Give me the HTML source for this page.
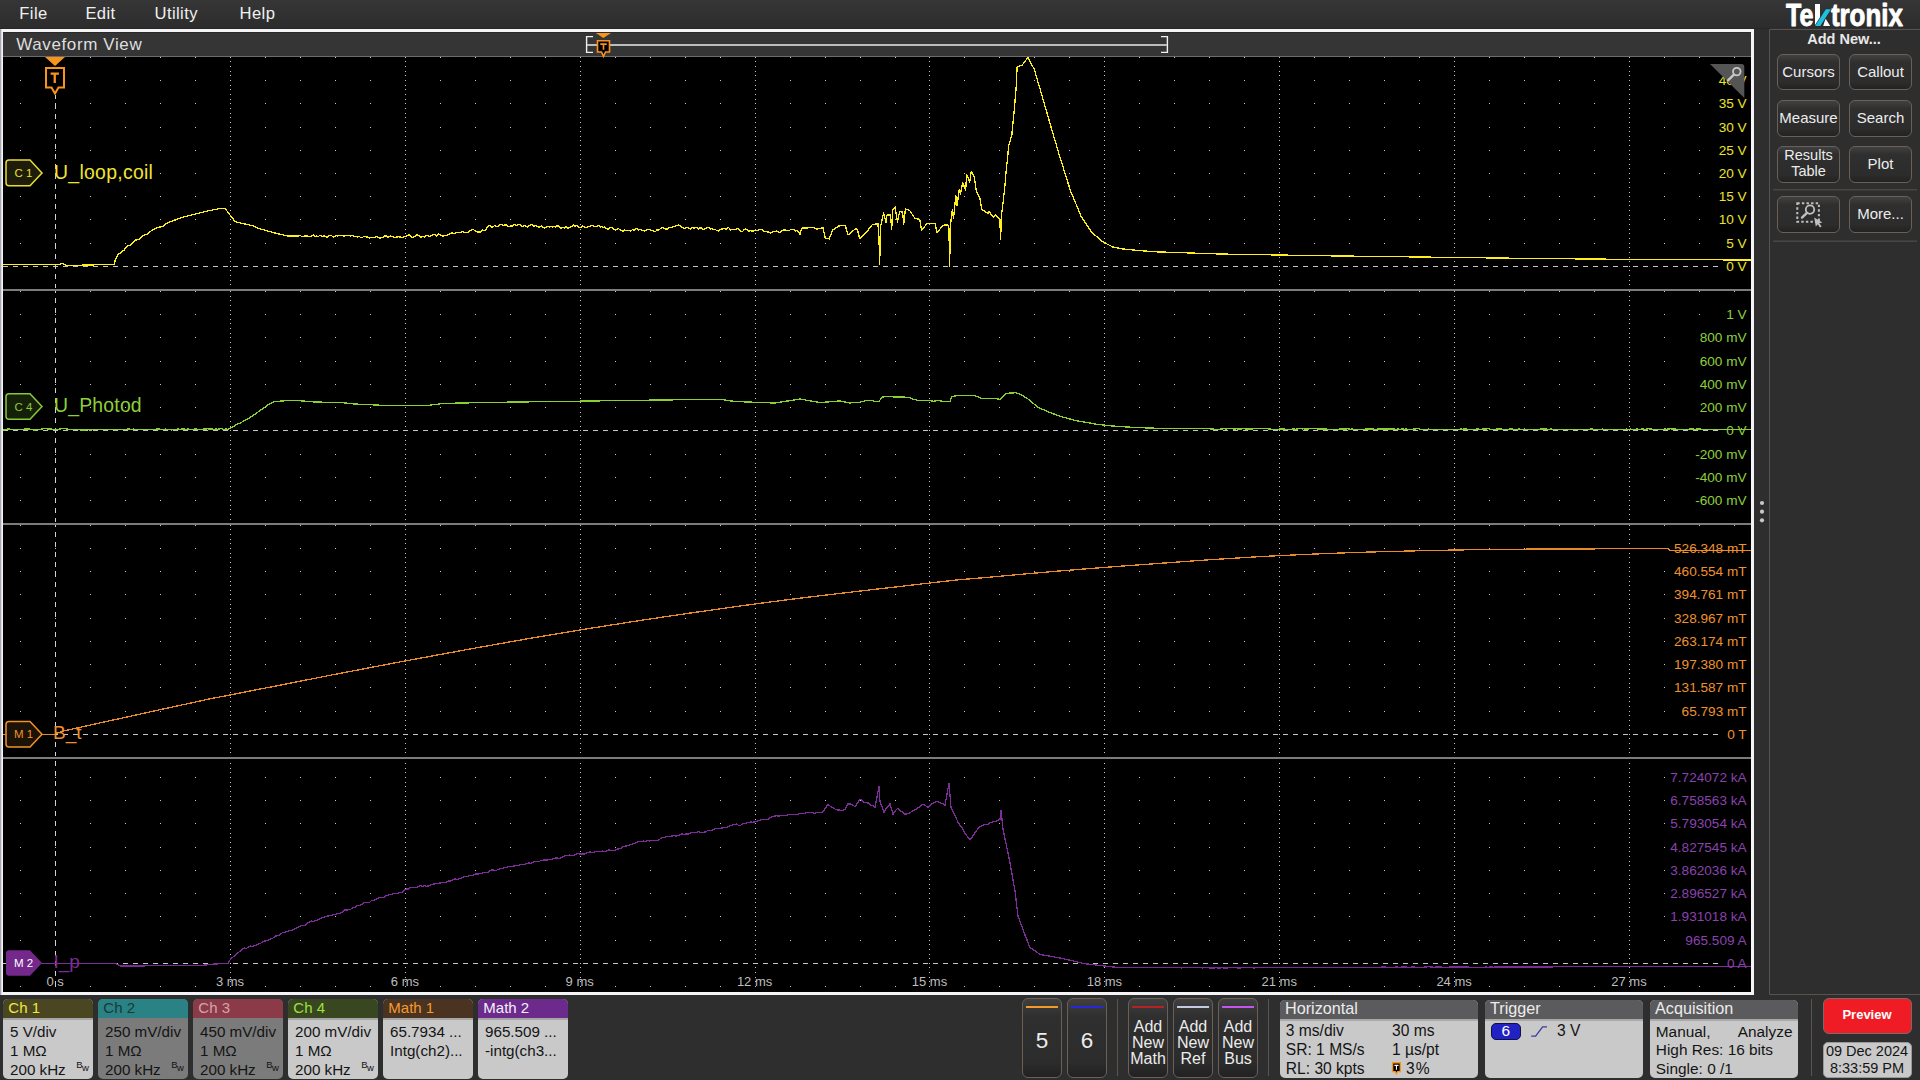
<!DOCTYPE html>
<html><head><meta charset="utf-8"><title>Tektronix</title>
<style>
html,body{margin:0;padding:0;}
body{width:1920px;height:1080px;overflow:hidden;position:relative;background:#2e2e2e;font-family:"Liberation Sans",sans-serif;}
.t{position:absolute;white-space:nowrap;}
.btn{position:absolute;box-sizing:border-box;border:1px solid #6a6058;border-radius:6px;background:linear-gradient(#404040 0%,#2f2f2f 22%,#2c2c2c 80%,#222 100%);}
.box{position:absolute;box-sizing:border-box;border-radius:5px;overflow:hidden;background:#c9c9c9;}
.hd{position:absolute;left:0;top:0;width:100%;height:19px;}
.hl{position:absolute;left:0;top:19px;width:100%;height:2px;background:#a9a9a9;}
</style></head><body>

<div style="position:absolute;left:0px;top:0px;width:1920px;height:28px;background:linear-gradient(#363636,#2c2c2c);"></div>
<div style="position:absolute;left:0px;top:28px;width:1770px;height:1px;background:#262626;"></div>
<div class="t" style="left:19.30px;top:6.49px;font-size:16.6px;line-height:16.6px;color:#f0f0f0;font-weight:normal;letter-spacing:0.4px;">File</div>
<div class="t" style="left:85.40px;top:6.49px;font-size:16.6px;line-height:16.6px;color:#f0f0f0;font-weight:normal;letter-spacing:0.4px;">Edit</div>
<div class="t" style="left:154.50px;top:6.49px;font-size:16.6px;line-height:16.6px;color:#f0f0f0;font-weight:normal;letter-spacing:0.4px;">Utility</div>
<div class="t" style="left:239.60px;top:6.49px;font-size:16.6px;line-height:16.6px;color:#f0f0f0;font-weight:normal;letter-spacing:0.4px;">Help</div>
<div style="position:absolute;left:0px;top:29px;width:1754px;height:966px;background:#f4f4f6;"></div>
<div style="position:absolute;left:0px;top:29px;width:1px;height:966px;background:#a8a8b0;"></div>
<div style="position:absolute;left:1px;top:29px;width:1px;height:966px;background:#dcdce0;"></div>
<div style="position:absolute;left:3px;top:32px;width:1748px;height:24px;background:#353535;"></div>
<div style="position:absolute;left:3px;top:32px;width:1748px;height:1px;background:#2a2a2a;"></div>
<div style="position:absolute;left:3px;top:56px;width:1748px;height:1px;background:#6a6c70;"></div>
<div style="position:absolute;left:3px;top:57px;width:1748px;height:935px;background:#000;"></div>
<div class="t" style="left:16.20px;top:35.55px;font-size:17px;line-height:17px;color:#dedede;font-weight:normal;letter-spacing:0.62px;">Waveform View</div>
<svg style="position:absolute;left:0;top:0" width="1920" height="60"><path d="M593 36.6H586.6V52.4H593" fill="none" stroke="#f0f0f0" stroke-width="1.4"/><path d="M1161 36.6H1167.4V52.4H1161" fill="none" stroke="#f0f0f0" stroke-width="1.4"/><rect x="587" y="44" width="580" height="2" fill="#bcbcbc"/><path d="M595.8 33H611L603.4 38Z" fill="#f7941d"/><path d="M597.5 40.8H609.5V52H605.5L603.5 56.3L601.5 52H597.5Z" fill="#000" stroke="#f7941d" stroke-width="1.6"/><path d="M600.3 43.3H606.7V44.9H604.3V49.8H602.7V44.9H600.3Z" fill="#f7941d"/></svg>
<svg style="position:absolute;left:0;top:0" width="1920" height="1080"><defs><clipPath id="pc"><rect x="3" y="57" width="1748" height="935"/></clipPath></defs><g clip-path="url(#pc)"><path d="M20 57h1v1h-1zM55 57h1v1h-1zM90 57h1v1h-1zM125 57h1v1h-1zM160 57h1v1h-1zM195 57h1v1h-1zM230 57h1v1h-1zM265 57h1v1h-1zM300 57h1v1h-1zM335 57h1v1h-1zM370 57h1v1h-1zM405 57h1v1h-1zM440 57h1v1h-1zM475 57h1v1h-1zM510 57h1v1h-1zM545 57h1v1h-1zM580 57h1v1h-1zM615 57h1v1h-1zM650 57h1v1h-1zM685 57h1v1h-1zM720 57h1v1h-1zM755 57h1v1h-1zM790 57h1v1h-1zM825 57h1v1h-1zM860 57h1v1h-1zM895 57h1v1h-1zM929 57h1v1h-1zM964 57h1v1h-1zM999 57h1v1h-1zM1034 57h1v1h-1zM1069 57h1v1h-1zM1104 57h1v1h-1zM1139 57h1v1h-1zM1174 57h1v1h-1zM1209 57h1v1h-1zM1244 57h1v1h-1zM1279 57h1v1h-1zM1314 57h1v1h-1zM1349 57h1v1h-1zM1384 57h1v1h-1zM1419 57h1v1h-1zM1454 57h1v1h-1zM1489 57h1v1h-1zM1524 57h1v1h-1zM1559 57h1v1h-1zM1594 57h1v1h-1zM1629 57h1v1h-1zM1664 57h1v1h-1zM1699 57h1v1h-1zM1734 57h1v1h-1zM20 80h1v1h-1zM55 80h1v1h-1zM90 80h1v1h-1zM125 80h1v1h-1zM160 80h1v1h-1zM195 80h1v1h-1zM230 80h1v1h-1zM265 80h1v1h-1zM300 80h1v1h-1zM335 80h1v1h-1zM370 80h1v1h-1zM405 80h1v1h-1zM440 80h1v1h-1zM475 80h1v1h-1zM510 80h1v1h-1zM545 80h1v1h-1zM580 80h1v1h-1zM615 80h1v1h-1zM650 80h1v1h-1zM685 80h1v1h-1zM720 80h1v1h-1zM755 80h1v1h-1zM790 80h1v1h-1zM825 80h1v1h-1zM860 80h1v1h-1zM895 80h1v1h-1zM929 80h1v1h-1zM964 80h1v1h-1zM999 80h1v1h-1zM1034 80h1v1h-1zM1069 80h1v1h-1zM1104 80h1v1h-1zM1139 80h1v1h-1zM1174 80h1v1h-1zM1209 80h1v1h-1zM1244 80h1v1h-1zM1279 80h1v1h-1zM1314 80h1v1h-1zM1349 80h1v1h-1zM1384 80h1v1h-1zM1419 80h1v1h-1zM1454 80h1v1h-1zM1489 80h1v1h-1zM1524 80h1v1h-1zM1559 80h1v1h-1zM1594 80h1v1h-1zM1629 80h1v1h-1zM1664 80h1v1h-1zM1699 80h1v1h-1zM1734 80h1v1h-1zM20 103h1v1h-1zM55 103h1v1h-1zM90 103h1v1h-1zM125 103h1v1h-1zM160 103h1v1h-1zM195 103h1v1h-1zM230 103h1v1h-1zM265 103h1v1h-1zM300 103h1v1h-1zM335 103h1v1h-1zM370 103h1v1h-1zM405 103h1v1h-1zM440 103h1v1h-1zM475 103h1v1h-1zM510 103h1v1h-1zM545 103h1v1h-1zM580 103h1v1h-1zM615 103h1v1h-1zM650 103h1v1h-1zM685 103h1v1h-1zM720 103h1v1h-1zM755 103h1v1h-1zM790 103h1v1h-1zM825 103h1v1h-1zM860 103h1v1h-1zM895 103h1v1h-1zM929 103h1v1h-1zM964 103h1v1h-1zM999 103h1v1h-1zM1034 103h1v1h-1zM1069 103h1v1h-1zM1104 103h1v1h-1zM1139 103h1v1h-1zM1174 103h1v1h-1zM1209 103h1v1h-1zM1244 103h1v1h-1zM1279 103h1v1h-1zM1314 103h1v1h-1zM1349 103h1v1h-1zM1384 103h1v1h-1zM1419 103h1v1h-1zM1454 103h1v1h-1zM1489 103h1v1h-1zM1524 103h1v1h-1zM1559 103h1v1h-1zM1594 103h1v1h-1zM1629 103h1v1h-1zM1664 103h1v1h-1zM1699 103h1v1h-1zM1734 103h1v1h-1zM20 127h1v1h-1zM55 127h1v1h-1zM90 127h1v1h-1zM125 127h1v1h-1zM160 127h1v1h-1zM195 127h1v1h-1zM230 127h1v1h-1zM265 127h1v1h-1zM300 127h1v1h-1zM335 127h1v1h-1zM370 127h1v1h-1zM405 127h1v1h-1zM440 127h1v1h-1zM475 127h1v1h-1zM510 127h1v1h-1zM545 127h1v1h-1zM580 127h1v1h-1zM615 127h1v1h-1zM650 127h1v1h-1zM685 127h1v1h-1zM720 127h1v1h-1zM755 127h1v1h-1zM790 127h1v1h-1zM825 127h1v1h-1zM860 127h1v1h-1zM895 127h1v1h-1zM929 127h1v1h-1zM964 127h1v1h-1zM999 127h1v1h-1zM1034 127h1v1h-1zM1069 127h1v1h-1zM1104 127h1v1h-1zM1139 127h1v1h-1zM1174 127h1v1h-1zM1209 127h1v1h-1zM1244 127h1v1h-1zM1279 127h1v1h-1zM1314 127h1v1h-1zM1349 127h1v1h-1zM1384 127h1v1h-1zM1419 127h1v1h-1zM1454 127h1v1h-1zM1489 127h1v1h-1zM1524 127h1v1h-1zM1559 127h1v1h-1zM1594 127h1v1h-1zM1629 127h1v1h-1zM1664 127h1v1h-1zM1699 127h1v1h-1zM1734 127h1v1h-1zM20 150h1v1h-1zM55 150h1v1h-1zM90 150h1v1h-1zM125 150h1v1h-1zM160 150h1v1h-1zM195 150h1v1h-1zM230 150h1v1h-1zM265 150h1v1h-1zM300 150h1v1h-1zM335 150h1v1h-1zM370 150h1v1h-1zM405 150h1v1h-1zM440 150h1v1h-1zM475 150h1v1h-1zM510 150h1v1h-1zM545 150h1v1h-1zM580 150h1v1h-1zM615 150h1v1h-1zM650 150h1v1h-1zM685 150h1v1h-1zM720 150h1v1h-1zM755 150h1v1h-1zM790 150h1v1h-1zM825 150h1v1h-1zM860 150h1v1h-1zM895 150h1v1h-1zM929 150h1v1h-1zM964 150h1v1h-1zM999 150h1v1h-1zM1034 150h1v1h-1zM1069 150h1v1h-1zM1104 150h1v1h-1zM1139 150h1v1h-1zM1174 150h1v1h-1zM1209 150h1v1h-1zM1244 150h1v1h-1zM1279 150h1v1h-1zM1314 150h1v1h-1zM1349 150h1v1h-1zM1384 150h1v1h-1zM1419 150h1v1h-1zM1454 150h1v1h-1zM1489 150h1v1h-1zM1524 150h1v1h-1zM1559 150h1v1h-1zM1594 150h1v1h-1zM1629 150h1v1h-1zM1664 150h1v1h-1zM1699 150h1v1h-1zM1734 150h1v1h-1zM20 173h1v1h-1zM55 173h1v1h-1zM90 173h1v1h-1zM125 173h1v1h-1zM160 173h1v1h-1zM195 173h1v1h-1zM230 173h1v1h-1zM265 173h1v1h-1zM300 173h1v1h-1zM335 173h1v1h-1zM370 173h1v1h-1zM405 173h1v1h-1zM440 173h1v1h-1zM475 173h1v1h-1zM510 173h1v1h-1zM545 173h1v1h-1zM580 173h1v1h-1zM615 173h1v1h-1zM650 173h1v1h-1zM685 173h1v1h-1zM720 173h1v1h-1zM755 173h1v1h-1zM790 173h1v1h-1zM825 173h1v1h-1zM860 173h1v1h-1zM895 173h1v1h-1zM929 173h1v1h-1zM964 173h1v1h-1zM999 173h1v1h-1zM1034 173h1v1h-1zM1069 173h1v1h-1zM1104 173h1v1h-1zM1139 173h1v1h-1zM1174 173h1v1h-1zM1209 173h1v1h-1zM1244 173h1v1h-1zM1279 173h1v1h-1zM1314 173h1v1h-1zM1349 173h1v1h-1zM1384 173h1v1h-1zM1419 173h1v1h-1zM1454 173h1v1h-1zM1489 173h1v1h-1zM1524 173h1v1h-1zM1559 173h1v1h-1zM1594 173h1v1h-1zM1629 173h1v1h-1zM1664 173h1v1h-1zM1699 173h1v1h-1zM1734 173h1v1h-1zM20 196h1v1h-1zM55 196h1v1h-1zM90 196h1v1h-1zM125 196h1v1h-1zM160 196h1v1h-1zM195 196h1v1h-1zM230 196h1v1h-1zM265 196h1v1h-1zM300 196h1v1h-1zM335 196h1v1h-1zM370 196h1v1h-1zM405 196h1v1h-1zM440 196h1v1h-1zM475 196h1v1h-1zM510 196h1v1h-1zM545 196h1v1h-1zM580 196h1v1h-1zM615 196h1v1h-1zM650 196h1v1h-1zM685 196h1v1h-1zM720 196h1v1h-1zM755 196h1v1h-1zM790 196h1v1h-1zM825 196h1v1h-1zM860 196h1v1h-1zM895 196h1v1h-1zM929 196h1v1h-1zM964 196h1v1h-1zM999 196h1v1h-1zM1034 196h1v1h-1zM1069 196h1v1h-1zM1104 196h1v1h-1zM1139 196h1v1h-1zM1174 196h1v1h-1zM1209 196h1v1h-1zM1244 196h1v1h-1zM1279 196h1v1h-1zM1314 196h1v1h-1zM1349 196h1v1h-1zM1384 196h1v1h-1zM1419 196h1v1h-1zM1454 196h1v1h-1zM1489 196h1v1h-1zM1524 196h1v1h-1zM1559 196h1v1h-1zM1594 196h1v1h-1zM1629 196h1v1h-1zM1664 196h1v1h-1zM1699 196h1v1h-1zM1734 196h1v1h-1zM20 219h1v1h-1zM55 219h1v1h-1zM90 219h1v1h-1zM125 219h1v1h-1zM160 219h1v1h-1zM195 219h1v1h-1zM230 219h1v1h-1zM265 219h1v1h-1zM300 219h1v1h-1zM335 219h1v1h-1zM370 219h1v1h-1zM405 219h1v1h-1zM440 219h1v1h-1zM475 219h1v1h-1zM510 219h1v1h-1zM545 219h1v1h-1zM580 219h1v1h-1zM615 219h1v1h-1zM650 219h1v1h-1zM685 219h1v1h-1zM720 219h1v1h-1zM755 219h1v1h-1zM790 219h1v1h-1zM825 219h1v1h-1zM860 219h1v1h-1zM895 219h1v1h-1zM929 219h1v1h-1zM964 219h1v1h-1zM999 219h1v1h-1zM1034 219h1v1h-1zM1069 219h1v1h-1zM1104 219h1v1h-1zM1139 219h1v1h-1zM1174 219h1v1h-1zM1209 219h1v1h-1zM1244 219h1v1h-1zM1279 219h1v1h-1zM1314 219h1v1h-1zM1349 219h1v1h-1zM1384 219h1v1h-1zM1419 219h1v1h-1zM1454 219h1v1h-1zM1489 219h1v1h-1zM1524 219h1v1h-1zM1559 219h1v1h-1zM1594 219h1v1h-1zM1629 219h1v1h-1zM1664 219h1v1h-1zM1699 219h1v1h-1zM1734 219h1v1h-1zM20 243h1v1h-1zM55 243h1v1h-1zM90 243h1v1h-1zM125 243h1v1h-1zM160 243h1v1h-1zM195 243h1v1h-1zM230 243h1v1h-1zM265 243h1v1h-1zM300 243h1v1h-1zM335 243h1v1h-1zM370 243h1v1h-1zM405 243h1v1h-1zM440 243h1v1h-1zM475 243h1v1h-1zM510 243h1v1h-1zM545 243h1v1h-1zM580 243h1v1h-1zM615 243h1v1h-1zM650 243h1v1h-1zM685 243h1v1h-1zM720 243h1v1h-1zM755 243h1v1h-1zM790 243h1v1h-1zM825 243h1v1h-1zM860 243h1v1h-1zM895 243h1v1h-1zM929 243h1v1h-1zM964 243h1v1h-1zM999 243h1v1h-1zM1034 243h1v1h-1zM1069 243h1v1h-1zM1104 243h1v1h-1zM1139 243h1v1h-1zM1174 243h1v1h-1zM1209 243h1v1h-1zM1244 243h1v1h-1zM1279 243h1v1h-1zM1314 243h1v1h-1zM1349 243h1v1h-1zM1384 243h1v1h-1zM1419 243h1v1h-1zM1454 243h1v1h-1zM1489 243h1v1h-1zM1524 243h1v1h-1zM1559 243h1v1h-1zM1594 243h1v1h-1zM1629 243h1v1h-1zM1664 243h1v1h-1zM1699 243h1v1h-1zM1734 243h1v1h-1zM20 291h1v1h-1zM55 291h1v1h-1zM90 291h1v1h-1zM125 291h1v1h-1zM160 291h1v1h-1zM195 291h1v1h-1zM230 291h1v1h-1zM265 291h1v1h-1zM300 291h1v1h-1zM335 291h1v1h-1zM370 291h1v1h-1zM405 291h1v1h-1zM440 291h1v1h-1zM475 291h1v1h-1zM510 291h1v1h-1zM545 291h1v1h-1zM580 291h1v1h-1zM615 291h1v1h-1zM650 291h1v1h-1zM685 291h1v1h-1zM720 291h1v1h-1zM755 291h1v1h-1zM790 291h1v1h-1zM825 291h1v1h-1zM860 291h1v1h-1zM895 291h1v1h-1zM929 291h1v1h-1zM964 291h1v1h-1zM999 291h1v1h-1zM1034 291h1v1h-1zM1069 291h1v1h-1zM1104 291h1v1h-1zM1139 291h1v1h-1zM1174 291h1v1h-1zM1209 291h1v1h-1zM1244 291h1v1h-1zM1279 291h1v1h-1zM1314 291h1v1h-1zM1349 291h1v1h-1zM1384 291h1v1h-1zM1419 291h1v1h-1zM1454 291h1v1h-1zM1489 291h1v1h-1zM1524 291h1v1h-1zM1559 291h1v1h-1zM1594 291h1v1h-1zM1629 291h1v1h-1zM1664 291h1v1h-1zM1699 291h1v1h-1zM1734 291h1v1h-1zM20 314h1v1h-1zM55 314h1v1h-1zM90 314h1v1h-1zM125 314h1v1h-1zM160 314h1v1h-1zM195 314h1v1h-1zM230 314h1v1h-1zM265 314h1v1h-1zM300 314h1v1h-1zM335 314h1v1h-1zM370 314h1v1h-1zM405 314h1v1h-1zM440 314h1v1h-1zM475 314h1v1h-1zM510 314h1v1h-1zM545 314h1v1h-1zM580 314h1v1h-1zM615 314h1v1h-1zM650 314h1v1h-1zM685 314h1v1h-1zM720 314h1v1h-1zM755 314h1v1h-1zM790 314h1v1h-1zM825 314h1v1h-1zM860 314h1v1h-1zM895 314h1v1h-1zM929 314h1v1h-1zM964 314h1v1h-1zM999 314h1v1h-1zM1034 314h1v1h-1zM1069 314h1v1h-1zM1104 314h1v1h-1zM1139 314h1v1h-1zM1174 314h1v1h-1zM1209 314h1v1h-1zM1244 314h1v1h-1zM1279 314h1v1h-1zM1314 314h1v1h-1zM1349 314h1v1h-1zM1384 314h1v1h-1zM1419 314h1v1h-1zM1454 314h1v1h-1zM1489 314h1v1h-1zM1524 314h1v1h-1zM1559 314h1v1h-1zM1594 314h1v1h-1zM1629 314h1v1h-1zM1664 314h1v1h-1zM1699 314h1v1h-1zM1734 314h1v1h-1zM20 337h1v1h-1zM55 337h1v1h-1zM90 337h1v1h-1zM125 337h1v1h-1zM160 337h1v1h-1zM195 337h1v1h-1zM230 337h1v1h-1zM265 337h1v1h-1zM300 337h1v1h-1zM335 337h1v1h-1zM370 337h1v1h-1zM405 337h1v1h-1zM440 337h1v1h-1zM475 337h1v1h-1zM510 337h1v1h-1zM545 337h1v1h-1zM580 337h1v1h-1zM615 337h1v1h-1zM650 337h1v1h-1zM685 337h1v1h-1zM720 337h1v1h-1zM755 337h1v1h-1zM790 337h1v1h-1zM825 337h1v1h-1zM860 337h1v1h-1zM895 337h1v1h-1zM929 337h1v1h-1zM964 337h1v1h-1zM999 337h1v1h-1zM1034 337h1v1h-1zM1069 337h1v1h-1zM1104 337h1v1h-1zM1139 337h1v1h-1zM1174 337h1v1h-1zM1209 337h1v1h-1zM1244 337h1v1h-1zM1279 337h1v1h-1zM1314 337h1v1h-1zM1349 337h1v1h-1zM1384 337h1v1h-1zM1419 337h1v1h-1zM1454 337h1v1h-1zM1489 337h1v1h-1zM1524 337h1v1h-1zM1559 337h1v1h-1zM1594 337h1v1h-1zM1629 337h1v1h-1zM1664 337h1v1h-1zM1699 337h1v1h-1zM1734 337h1v1h-1zM20 361h1v1h-1zM55 361h1v1h-1zM90 361h1v1h-1zM125 361h1v1h-1zM160 361h1v1h-1zM195 361h1v1h-1zM230 361h1v1h-1zM265 361h1v1h-1zM300 361h1v1h-1zM335 361h1v1h-1zM370 361h1v1h-1zM405 361h1v1h-1zM440 361h1v1h-1zM475 361h1v1h-1zM510 361h1v1h-1zM545 361h1v1h-1zM580 361h1v1h-1zM615 361h1v1h-1zM650 361h1v1h-1zM685 361h1v1h-1zM720 361h1v1h-1zM755 361h1v1h-1zM790 361h1v1h-1zM825 361h1v1h-1zM860 361h1v1h-1zM895 361h1v1h-1zM929 361h1v1h-1zM964 361h1v1h-1zM999 361h1v1h-1zM1034 361h1v1h-1zM1069 361h1v1h-1zM1104 361h1v1h-1zM1139 361h1v1h-1zM1174 361h1v1h-1zM1209 361h1v1h-1zM1244 361h1v1h-1zM1279 361h1v1h-1zM1314 361h1v1h-1zM1349 361h1v1h-1zM1384 361h1v1h-1zM1419 361h1v1h-1zM1454 361h1v1h-1zM1489 361h1v1h-1zM1524 361h1v1h-1zM1559 361h1v1h-1zM1594 361h1v1h-1zM1629 361h1v1h-1zM1664 361h1v1h-1zM1699 361h1v1h-1zM1734 361h1v1h-1zM20 384h1v1h-1zM55 384h1v1h-1zM90 384h1v1h-1zM125 384h1v1h-1zM160 384h1v1h-1zM195 384h1v1h-1zM230 384h1v1h-1zM265 384h1v1h-1zM300 384h1v1h-1zM335 384h1v1h-1zM370 384h1v1h-1zM405 384h1v1h-1zM440 384h1v1h-1zM475 384h1v1h-1zM510 384h1v1h-1zM545 384h1v1h-1zM580 384h1v1h-1zM615 384h1v1h-1zM650 384h1v1h-1zM685 384h1v1h-1zM720 384h1v1h-1zM755 384h1v1h-1zM790 384h1v1h-1zM825 384h1v1h-1zM860 384h1v1h-1zM895 384h1v1h-1zM929 384h1v1h-1zM964 384h1v1h-1zM999 384h1v1h-1zM1034 384h1v1h-1zM1069 384h1v1h-1zM1104 384h1v1h-1zM1139 384h1v1h-1zM1174 384h1v1h-1zM1209 384h1v1h-1zM1244 384h1v1h-1zM1279 384h1v1h-1zM1314 384h1v1h-1zM1349 384h1v1h-1zM1384 384h1v1h-1zM1419 384h1v1h-1zM1454 384h1v1h-1zM1489 384h1v1h-1zM1524 384h1v1h-1zM1559 384h1v1h-1zM1594 384h1v1h-1zM1629 384h1v1h-1zM1664 384h1v1h-1zM1699 384h1v1h-1zM1734 384h1v1h-1zM20 407h1v1h-1zM55 407h1v1h-1zM90 407h1v1h-1zM125 407h1v1h-1zM160 407h1v1h-1zM195 407h1v1h-1zM230 407h1v1h-1zM265 407h1v1h-1zM300 407h1v1h-1zM335 407h1v1h-1zM370 407h1v1h-1zM405 407h1v1h-1zM440 407h1v1h-1zM475 407h1v1h-1zM510 407h1v1h-1zM545 407h1v1h-1zM580 407h1v1h-1zM615 407h1v1h-1zM650 407h1v1h-1zM685 407h1v1h-1zM720 407h1v1h-1zM755 407h1v1h-1zM790 407h1v1h-1zM825 407h1v1h-1zM860 407h1v1h-1zM895 407h1v1h-1zM929 407h1v1h-1zM964 407h1v1h-1zM999 407h1v1h-1zM1034 407h1v1h-1zM1069 407h1v1h-1zM1104 407h1v1h-1zM1139 407h1v1h-1zM1174 407h1v1h-1zM1209 407h1v1h-1zM1244 407h1v1h-1zM1279 407h1v1h-1zM1314 407h1v1h-1zM1349 407h1v1h-1zM1384 407h1v1h-1zM1419 407h1v1h-1zM1454 407h1v1h-1zM1489 407h1v1h-1zM1524 407h1v1h-1zM1559 407h1v1h-1zM1594 407h1v1h-1zM1629 407h1v1h-1zM1664 407h1v1h-1zM1699 407h1v1h-1zM1734 407h1v1h-1zM20 454h1v1h-1zM55 454h1v1h-1zM90 454h1v1h-1zM125 454h1v1h-1zM160 454h1v1h-1zM195 454h1v1h-1zM230 454h1v1h-1zM265 454h1v1h-1zM300 454h1v1h-1zM335 454h1v1h-1zM370 454h1v1h-1zM405 454h1v1h-1zM440 454h1v1h-1zM475 454h1v1h-1zM510 454h1v1h-1zM545 454h1v1h-1zM580 454h1v1h-1zM615 454h1v1h-1zM650 454h1v1h-1zM685 454h1v1h-1zM720 454h1v1h-1zM755 454h1v1h-1zM790 454h1v1h-1zM825 454h1v1h-1zM860 454h1v1h-1zM895 454h1v1h-1zM929 454h1v1h-1zM964 454h1v1h-1zM999 454h1v1h-1zM1034 454h1v1h-1zM1069 454h1v1h-1zM1104 454h1v1h-1zM1139 454h1v1h-1zM1174 454h1v1h-1zM1209 454h1v1h-1zM1244 454h1v1h-1zM1279 454h1v1h-1zM1314 454h1v1h-1zM1349 454h1v1h-1zM1384 454h1v1h-1zM1419 454h1v1h-1zM1454 454h1v1h-1zM1489 454h1v1h-1zM1524 454h1v1h-1zM1559 454h1v1h-1zM1594 454h1v1h-1zM1629 454h1v1h-1zM1664 454h1v1h-1zM1699 454h1v1h-1zM1734 454h1v1h-1zM20 477h1v1h-1zM55 477h1v1h-1zM90 477h1v1h-1zM125 477h1v1h-1zM160 477h1v1h-1zM195 477h1v1h-1zM230 477h1v1h-1zM265 477h1v1h-1zM300 477h1v1h-1zM335 477h1v1h-1zM370 477h1v1h-1zM405 477h1v1h-1zM440 477h1v1h-1zM475 477h1v1h-1zM510 477h1v1h-1zM545 477h1v1h-1zM580 477h1v1h-1zM615 477h1v1h-1zM650 477h1v1h-1zM685 477h1v1h-1zM720 477h1v1h-1zM755 477h1v1h-1zM790 477h1v1h-1zM825 477h1v1h-1zM860 477h1v1h-1zM895 477h1v1h-1zM929 477h1v1h-1zM964 477h1v1h-1zM999 477h1v1h-1zM1034 477h1v1h-1zM1069 477h1v1h-1zM1104 477h1v1h-1zM1139 477h1v1h-1zM1174 477h1v1h-1zM1209 477h1v1h-1zM1244 477h1v1h-1zM1279 477h1v1h-1zM1314 477h1v1h-1zM1349 477h1v1h-1zM1384 477h1v1h-1zM1419 477h1v1h-1zM1454 477h1v1h-1zM1489 477h1v1h-1zM1524 477h1v1h-1zM1559 477h1v1h-1zM1594 477h1v1h-1zM1629 477h1v1h-1zM1664 477h1v1h-1zM1699 477h1v1h-1zM1734 477h1v1h-1zM20 500h1v1h-1zM55 500h1v1h-1zM90 500h1v1h-1zM125 500h1v1h-1zM160 500h1v1h-1zM195 500h1v1h-1zM230 500h1v1h-1zM265 500h1v1h-1zM300 500h1v1h-1zM335 500h1v1h-1zM370 500h1v1h-1zM405 500h1v1h-1zM440 500h1v1h-1zM475 500h1v1h-1zM510 500h1v1h-1zM545 500h1v1h-1zM580 500h1v1h-1zM615 500h1v1h-1zM650 500h1v1h-1zM685 500h1v1h-1zM720 500h1v1h-1zM755 500h1v1h-1zM790 500h1v1h-1zM825 500h1v1h-1zM860 500h1v1h-1zM895 500h1v1h-1zM929 500h1v1h-1zM964 500h1v1h-1zM999 500h1v1h-1zM1034 500h1v1h-1zM1069 500h1v1h-1zM1104 500h1v1h-1zM1139 500h1v1h-1zM1174 500h1v1h-1zM1209 500h1v1h-1zM1244 500h1v1h-1zM1279 500h1v1h-1zM1314 500h1v1h-1zM1349 500h1v1h-1zM1384 500h1v1h-1zM1419 500h1v1h-1zM1454 500h1v1h-1zM1489 500h1v1h-1zM1524 500h1v1h-1zM1559 500h1v1h-1zM1594 500h1v1h-1zM1629 500h1v1h-1zM1664 500h1v1h-1zM1699 500h1v1h-1zM1734 500h1v1h-1zM20 525h1v1h-1zM55 525h1v1h-1zM90 525h1v1h-1zM125 525h1v1h-1zM160 525h1v1h-1zM195 525h1v1h-1zM230 525h1v1h-1zM265 525h1v1h-1zM300 525h1v1h-1zM335 525h1v1h-1zM370 525h1v1h-1zM405 525h1v1h-1zM440 525h1v1h-1zM475 525h1v1h-1zM510 525h1v1h-1zM545 525h1v1h-1zM580 525h1v1h-1zM615 525h1v1h-1zM650 525h1v1h-1zM685 525h1v1h-1zM720 525h1v1h-1zM755 525h1v1h-1zM790 525h1v1h-1zM825 525h1v1h-1zM860 525h1v1h-1zM895 525h1v1h-1zM929 525h1v1h-1zM964 525h1v1h-1zM999 525h1v1h-1zM1034 525h1v1h-1zM1069 525h1v1h-1zM1104 525h1v1h-1zM1139 525h1v1h-1zM1174 525h1v1h-1zM1209 525h1v1h-1zM1244 525h1v1h-1zM1279 525h1v1h-1zM1314 525h1v1h-1zM1349 525h1v1h-1zM1384 525h1v1h-1zM1419 525h1v1h-1zM1454 525h1v1h-1zM1489 525h1v1h-1zM1524 525h1v1h-1zM1559 525h1v1h-1zM1594 525h1v1h-1zM1629 525h1v1h-1zM1664 525h1v1h-1zM1699 525h1v1h-1zM1734 525h1v1h-1zM20 548h1v1h-1zM55 548h1v1h-1zM90 548h1v1h-1zM125 548h1v1h-1zM160 548h1v1h-1zM195 548h1v1h-1zM230 548h1v1h-1zM265 548h1v1h-1zM300 548h1v1h-1zM335 548h1v1h-1zM370 548h1v1h-1zM405 548h1v1h-1zM440 548h1v1h-1zM475 548h1v1h-1zM510 548h1v1h-1zM545 548h1v1h-1zM580 548h1v1h-1zM615 548h1v1h-1zM650 548h1v1h-1zM685 548h1v1h-1zM720 548h1v1h-1zM755 548h1v1h-1zM790 548h1v1h-1zM825 548h1v1h-1zM860 548h1v1h-1zM895 548h1v1h-1zM929 548h1v1h-1zM964 548h1v1h-1zM999 548h1v1h-1zM1034 548h1v1h-1zM1069 548h1v1h-1zM1104 548h1v1h-1zM1139 548h1v1h-1zM1174 548h1v1h-1zM1209 548h1v1h-1zM1244 548h1v1h-1zM1279 548h1v1h-1zM1314 548h1v1h-1zM1349 548h1v1h-1zM1384 548h1v1h-1zM1419 548h1v1h-1zM1454 548h1v1h-1zM1489 548h1v1h-1zM1524 548h1v1h-1zM1559 548h1v1h-1zM1594 548h1v1h-1zM1629 548h1v1h-1zM1664 548h1v1h-1zM1699 548h1v1h-1zM1734 548h1v1h-1zM20 571h1v1h-1zM55 571h1v1h-1zM90 571h1v1h-1zM125 571h1v1h-1zM160 571h1v1h-1zM195 571h1v1h-1zM230 571h1v1h-1zM265 571h1v1h-1zM300 571h1v1h-1zM335 571h1v1h-1zM370 571h1v1h-1zM405 571h1v1h-1zM440 571h1v1h-1zM475 571h1v1h-1zM510 571h1v1h-1zM545 571h1v1h-1zM580 571h1v1h-1zM615 571h1v1h-1zM650 571h1v1h-1zM685 571h1v1h-1zM720 571h1v1h-1zM755 571h1v1h-1zM790 571h1v1h-1zM825 571h1v1h-1zM860 571h1v1h-1zM895 571h1v1h-1zM929 571h1v1h-1zM964 571h1v1h-1zM999 571h1v1h-1zM1034 571h1v1h-1zM1069 571h1v1h-1zM1104 571h1v1h-1zM1139 571h1v1h-1zM1174 571h1v1h-1zM1209 571h1v1h-1zM1244 571h1v1h-1zM1279 571h1v1h-1zM1314 571h1v1h-1zM1349 571h1v1h-1zM1384 571h1v1h-1zM1419 571h1v1h-1zM1454 571h1v1h-1zM1489 571h1v1h-1zM1524 571h1v1h-1zM1559 571h1v1h-1zM1594 571h1v1h-1zM1629 571h1v1h-1zM1664 571h1v1h-1zM1699 571h1v1h-1zM1734 571h1v1h-1zM20 594h1v1h-1zM55 594h1v1h-1zM90 594h1v1h-1zM125 594h1v1h-1zM160 594h1v1h-1zM195 594h1v1h-1zM230 594h1v1h-1zM265 594h1v1h-1zM300 594h1v1h-1zM335 594h1v1h-1zM370 594h1v1h-1zM405 594h1v1h-1zM440 594h1v1h-1zM475 594h1v1h-1zM510 594h1v1h-1zM545 594h1v1h-1zM580 594h1v1h-1zM615 594h1v1h-1zM650 594h1v1h-1zM685 594h1v1h-1zM720 594h1v1h-1zM755 594h1v1h-1zM790 594h1v1h-1zM825 594h1v1h-1zM860 594h1v1h-1zM895 594h1v1h-1zM929 594h1v1h-1zM964 594h1v1h-1zM999 594h1v1h-1zM1034 594h1v1h-1zM1069 594h1v1h-1zM1104 594h1v1h-1zM1139 594h1v1h-1zM1174 594h1v1h-1zM1209 594h1v1h-1zM1244 594h1v1h-1zM1279 594h1v1h-1zM1314 594h1v1h-1zM1349 594h1v1h-1zM1384 594h1v1h-1zM1419 594h1v1h-1zM1454 594h1v1h-1zM1489 594h1v1h-1zM1524 594h1v1h-1zM1559 594h1v1h-1zM1594 594h1v1h-1zM1629 594h1v1h-1zM1664 594h1v1h-1zM1699 594h1v1h-1zM1734 594h1v1h-1zM20 618h1v1h-1zM55 618h1v1h-1zM90 618h1v1h-1zM125 618h1v1h-1zM160 618h1v1h-1zM195 618h1v1h-1zM230 618h1v1h-1zM265 618h1v1h-1zM300 618h1v1h-1zM335 618h1v1h-1zM370 618h1v1h-1zM405 618h1v1h-1zM440 618h1v1h-1zM475 618h1v1h-1zM510 618h1v1h-1zM545 618h1v1h-1zM580 618h1v1h-1zM615 618h1v1h-1zM650 618h1v1h-1zM685 618h1v1h-1zM720 618h1v1h-1zM755 618h1v1h-1zM790 618h1v1h-1zM825 618h1v1h-1zM860 618h1v1h-1zM895 618h1v1h-1zM929 618h1v1h-1zM964 618h1v1h-1zM999 618h1v1h-1zM1034 618h1v1h-1zM1069 618h1v1h-1zM1104 618h1v1h-1zM1139 618h1v1h-1zM1174 618h1v1h-1zM1209 618h1v1h-1zM1244 618h1v1h-1zM1279 618h1v1h-1zM1314 618h1v1h-1zM1349 618h1v1h-1zM1384 618h1v1h-1zM1419 618h1v1h-1zM1454 618h1v1h-1zM1489 618h1v1h-1zM1524 618h1v1h-1zM1559 618h1v1h-1zM1594 618h1v1h-1zM1629 618h1v1h-1zM1664 618h1v1h-1zM1699 618h1v1h-1zM1734 618h1v1h-1zM20 641h1v1h-1zM55 641h1v1h-1zM90 641h1v1h-1zM125 641h1v1h-1zM160 641h1v1h-1zM195 641h1v1h-1zM230 641h1v1h-1zM265 641h1v1h-1zM300 641h1v1h-1zM335 641h1v1h-1zM370 641h1v1h-1zM405 641h1v1h-1zM440 641h1v1h-1zM475 641h1v1h-1zM510 641h1v1h-1zM545 641h1v1h-1zM580 641h1v1h-1zM615 641h1v1h-1zM650 641h1v1h-1zM685 641h1v1h-1zM720 641h1v1h-1zM755 641h1v1h-1zM790 641h1v1h-1zM825 641h1v1h-1zM860 641h1v1h-1zM895 641h1v1h-1zM929 641h1v1h-1zM964 641h1v1h-1zM999 641h1v1h-1zM1034 641h1v1h-1zM1069 641h1v1h-1zM1104 641h1v1h-1zM1139 641h1v1h-1zM1174 641h1v1h-1zM1209 641h1v1h-1zM1244 641h1v1h-1zM1279 641h1v1h-1zM1314 641h1v1h-1zM1349 641h1v1h-1zM1384 641h1v1h-1zM1419 641h1v1h-1zM1454 641h1v1h-1zM1489 641h1v1h-1zM1524 641h1v1h-1zM1559 641h1v1h-1zM1594 641h1v1h-1zM1629 641h1v1h-1zM1664 641h1v1h-1zM1699 641h1v1h-1zM1734 641h1v1h-1zM20 664h1v1h-1zM55 664h1v1h-1zM90 664h1v1h-1zM125 664h1v1h-1zM160 664h1v1h-1zM195 664h1v1h-1zM230 664h1v1h-1zM265 664h1v1h-1zM300 664h1v1h-1zM335 664h1v1h-1zM370 664h1v1h-1zM405 664h1v1h-1zM440 664h1v1h-1zM475 664h1v1h-1zM510 664h1v1h-1zM545 664h1v1h-1zM580 664h1v1h-1zM615 664h1v1h-1zM650 664h1v1h-1zM685 664h1v1h-1zM720 664h1v1h-1zM755 664h1v1h-1zM790 664h1v1h-1zM825 664h1v1h-1zM860 664h1v1h-1zM895 664h1v1h-1zM929 664h1v1h-1zM964 664h1v1h-1zM999 664h1v1h-1zM1034 664h1v1h-1zM1069 664h1v1h-1zM1104 664h1v1h-1zM1139 664h1v1h-1zM1174 664h1v1h-1zM1209 664h1v1h-1zM1244 664h1v1h-1zM1279 664h1v1h-1zM1314 664h1v1h-1zM1349 664h1v1h-1zM1384 664h1v1h-1zM1419 664h1v1h-1zM1454 664h1v1h-1zM1489 664h1v1h-1zM1524 664h1v1h-1zM1559 664h1v1h-1zM1594 664h1v1h-1zM1629 664h1v1h-1zM1664 664h1v1h-1zM1699 664h1v1h-1zM1734 664h1v1h-1zM20 687h1v1h-1zM55 687h1v1h-1zM90 687h1v1h-1zM125 687h1v1h-1zM160 687h1v1h-1zM195 687h1v1h-1zM230 687h1v1h-1zM265 687h1v1h-1zM300 687h1v1h-1zM335 687h1v1h-1zM370 687h1v1h-1zM405 687h1v1h-1zM440 687h1v1h-1zM475 687h1v1h-1zM510 687h1v1h-1zM545 687h1v1h-1zM580 687h1v1h-1zM615 687h1v1h-1zM650 687h1v1h-1zM685 687h1v1h-1zM720 687h1v1h-1zM755 687h1v1h-1zM790 687h1v1h-1zM825 687h1v1h-1zM860 687h1v1h-1zM895 687h1v1h-1zM929 687h1v1h-1zM964 687h1v1h-1zM999 687h1v1h-1zM1034 687h1v1h-1zM1069 687h1v1h-1zM1104 687h1v1h-1zM1139 687h1v1h-1zM1174 687h1v1h-1zM1209 687h1v1h-1zM1244 687h1v1h-1zM1279 687h1v1h-1zM1314 687h1v1h-1zM1349 687h1v1h-1zM1384 687h1v1h-1zM1419 687h1v1h-1zM1454 687h1v1h-1zM1489 687h1v1h-1zM1524 687h1v1h-1zM1559 687h1v1h-1zM1594 687h1v1h-1zM1629 687h1v1h-1zM1664 687h1v1h-1zM1699 687h1v1h-1zM1734 687h1v1h-1zM20 711h1v1h-1zM55 711h1v1h-1zM90 711h1v1h-1zM125 711h1v1h-1zM160 711h1v1h-1zM195 711h1v1h-1zM230 711h1v1h-1zM265 711h1v1h-1zM300 711h1v1h-1zM335 711h1v1h-1zM370 711h1v1h-1zM405 711h1v1h-1zM440 711h1v1h-1zM475 711h1v1h-1zM510 711h1v1h-1zM545 711h1v1h-1zM580 711h1v1h-1zM615 711h1v1h-1zM650 711h1v1h-1zM685 711h1v1h-1zM720 711h1v1h-1zM755 711h1v1h-1zM790 711h1v1h-1zM825 711h1v1h-1zM860 711h1v1h-1zM895 711h1v1h-1zM929 711h1v1h-1zM964 711h1v1h-1zM999 711h1v1h-1zM1034 711h1v1h-1zM1069 711h1v1h-1zM1104 711h1v1h-1zM1139 711h1v1h-1zM1174 711h1v1h-1zM1209 711h1v1h-1zM1244 711h1v1h-1zM1279 711h1v1h-1zM1314 711h1v1h-1zM1349 711h1v1h-1zM1384 711h1v1h-1zM1419 711h1v1h-1zM1454 711h1v1h-1zM1489 711h1v1h-1zM1524 711h1v1h-1zM1559 711h1v1h-1zM1594 711h1v1h-1zM1629 711h1v1h-1zM1664 711h1v1h-1zM1699 711h1v1h-1zM1734 711h1v1h-1zM20 777h1v1h-1zM55 777h1v1h-1zM90 777h1v1h-1zM125 777h1v1h-1zM160 777h1v1h-1zM195 777h1v1h-1zM230 777h1v1h-1zM265 777h1v1h-1zM300 777h1v1h-1zM335 777h1v1h-1zM370 777h1v1h-1zM405 777h1v1h-1zM440 777h1v1h-1zM475 777h1v1h-1zM510 777h1v1h-1zM545 777h1v1h-1zM580 777h1v1h-1zM615 777h1v1h-1zM650 777h1v1h-1zM685 777h1v1h-1zM720 777h1v1h-1zM755 777h1v1h-1zM790 777h1v1h-1zM825 777h1v1h-1zM860 777h1v1h-1zM895 777h1v1h-1zM929 777h1v1h-1zM964 777h1v1h-1zM999 777h1v1h-1zM1034 777h1v1h-1zM1069 777h1v1h-1zM1104 777h1v1h-1zM1139 777h1v1h-1zM1174 777h1v1h-1zM1209 777h1v1h-1zM1244 777h1v1h-1zM1279 777h1v1h-1zM1314 777h1v1h-1zM1349 777h1v1h-1zM1384 777h1v1h-1zM1419 777h1v1h-1zM1454 777h1v1h-1zM1489 777h1v1h-1zM1524 777h1v1h-1zM1559 777h1v1h-1zM1594 777h1v1h-1zM1629 777h1v1h-1zM1664 777h1v1h-1zM1699 777h1v1h-1zM1734 777h1v1h-1zM20 800h1v1h-1zM55 800h1v1h-1zM90 800h1v1h-1zM125 800h1v1h-1zM160 800h1v1h-1zM195 800h1v1h-1zM230 800h1v1h-1zM265 800h1v1h-1zM300 800h1v1h-1zM335 800h1v1h-1zM370 800h1v1h-1zM405 800h1v1h-1zM440 800h1v1h-1zM475 800h1v1h-1zM510 800h1v1h-1zM545 800h1v1h-1zM580 800h1v1h-1zM615 800h1v1h-1zM650 800h1v1h-1zM685 800h1v1h-1zM720 800h1v1h-1zM755 800h1v1h-1zM790 800h1v1h-1zM825 800h1v1h-1zM860 800h1v1h-1zM895 800h1v1h-1zM929 800h1v1h-1zM964 800h1v1h-1zM999 800h1v1h-1zM1034 800h1v1h-1zM1069 800h1v1h-1zM1104 800h1v1h-1zM1139 800h1v1h-1zM1174 800h1v1h-1zM1209 800h1v1h-1zM1244 800h1v1h-1zM1279 800h1v1h-1zM1314 800h1v1h-1zM1349 800h1v1h-1zM1384 800h1v1h-1zM1419 800h1v1h-1zM1454 800h1v1h-1zM1489 800h1v1h-1zM1524 800h1v1h-1zM1559 800h1v1h-1zM1594 800h1v1h-1zM1629 800h1v1h-1zM1664 800h1v1h-1zM1699 800h1v1h-1zM1734 800h1v1h-1zM20 823h1v1h-1zM55 823h1v1h-1zM90 823h1v1h-1zM125 823h1v1h-1zM160 823h1v1h-1zM195 823h1v1h-1zM230 823h1v1h-1zM265 823h1v1h-1zM300 823h1v1h-1zM335 823h1v1h-1zM370 823h1v1h-1zM405 823h1v1h-1zM440 823h1v1h-1zM475 823h1v1h-1zM510 823h1v1h-1zM545 823h1v1h-1zM580 823h1v1h-1zM615 823h1v1h-1zM650 823h1v1h-1zM685 823h1v1h-1zM720 823h1v1h-1zM755 823h1v1h-1zM790 823h1v1h-1zM825 823h1v1h-1zM860 823h1v1h-1zM895 823h1v1h-1zM929 823h1v1h-1zM964 823h1v1h-1zM999 823h1v1h-1zM1034 823h1v1h-1zM1069 823h1v1h-1zM1104 823h1v1h-1zM1139 823h1v1h-1zM1174 823h1v1h-1zM1209 823h1v1h-1zM1244 823h1v1h-1zM1279 823h1v1h-1zM1314 823h1v1h-1zM1349 823h1v1h-1zM1384 823h1v1h-1zM1419 823h1v1h-1zM1454 823h1v1h-1zM1489 823h1v1h-1zM1524 823h1v1h-1zM1559 823h1v1h-1zM1594 823h1v1h-1zM1629 823h1v1h-1zM1664 823h1v1h-1zM1699 823h1v1h-1zM1734 823h1v1h-1zM20 847h1v1h-1zM55 847h1v1h-1zM90 847h1v1h-1zM125 847h1v1h-1zM160 847h1v1h-1zM195 847h1v1h-1zM230 847h1v1h-1zM265 847h1v1h-1zM300 847h1v1h-1zM335 847h1v1h-1zM370 847h1v1h-1zM405 847h1v1h-1zM440 847h1v1h-1zM475 847h1v1h-1zM510 847h1v1h-1zM545 847h1v1h-1zM580 847h1v1h-1zM615 847h1v1h-1zM650 847h1v1h-1zM685 847h1v1h-1zM720 847h1v1h-1zM755 847h1v1h-1zM790 847h1v1h-1zM825 847h1v1h-1zM860 847h1v1h-1zM895 847h1v1h-1zM929 847h1v1h-1zM964 847h1v1h-1zM999 847h1v1h-1zM1034 847h1v1h-1zM1069 847h1v1h-1zM1104 847h1v1h-1zM1139 847h1v1h-1zM1174 847h1v1h-1zM1209 847h1v1h-1zM1244 847h1v1h-1zM1279 847h1v1h-1zM1314 847h1v1h-1zM1349 847h1v1h-1zM1384 847h1v1h-1zM1419 847h1v1h-1zM1454 847h1v1h-1zM1489 847h1v1h-1zM1524 847h1v1h-1zM1559 847h1v1h-1zM1594 847h1v1h-1zM1629 847h1v1h-1zM1664 847h1v1h-1zM1699 847h1v1h-1zM1734 847h1v1h-1zM20 870h1v1h-1zM55 870h1v1h-1zM90 870h1v1h-1zM125 870h1v1h-1zM160 870h1v1h-1zM195 870h1v1h-1zM230 870h1v1h-1zM265 870h1v1h-1zM300 870h1v1h-1zM335 870h1v1h-1zM370 870h1v1h-1zM405 870h1v1h-1zM440 870h1v1h-1zM475 870h1v1h-1zM510 870h1v1h-1zM545 870h1v1h-1zM580 870h1v1h-1zM615 870h1v1h-1zM650 870h1v1h-1zM685 870h1v1h-1zM720 870h1v1h-1zM755 870h1v1h-1zM790 870h1v1h-1zM825 870h1v1h-1zM860 870h1v1h-1zM895 870h1v1h-1zM929 870h1v1h-1zM964 870h1v1h-1zM999 870h1v1h-1zM1034 870h1v1h-1zM1069 870h1v1h-1zM1104 870h1v1h-1zM1139 870h1v1h-1zM1174 870h1v1h-1zM1209 870h1v1h-1zM1244 870h1v1h-1zM1279 870h1v1h-1zM1314 870h1v1h-1zM1349 870h1v1h-1zM1384 870h1v1h-1zM1419 870h1v1h-1zM1454 870h1v1h-1zM1489 870h1v1h-1zM1524 870h1v1h-1zM1559 870h1v1h-1zM1594 870h1v1h-1zM1629 870h1v1h-1zM1664 870h1v1h-1zM1699 870h1v1h-1zM1734 870h1v1h-1zM20 893h1v1h-1zM55 893h1v1h-1zM90 893h1v1h-1zM125 893h1v1h-1zM160 893h1v1h-1zM195 893h1v1h-1zM230 893h1v1h-1zM265 893h1v1h-1zM300 893h1v1h-1zM335 893h1v1h-1zM370 893h1v1h-1zM405 893h1v1h-1zM440 893h1v1h-1zM475 893h1v1h-1zM510 893h1v1h-1zM545 893h1v1h-1zM580 893h1v1h-1zM615 893h1v1h-1zM650 893h1v1h-1zM685 893h1v1h-1zM720 893h1v1h-1zM755 893h1v1h-1zM790 893h1v1h-1zM825 893h1v1h-1zM860 893h1v1h-1zM895 893h1v1h-1zM929 893h1v1h-1zM964 893h1v1h-1zM999 893h1v1h-1zM1034 893h1v1h-1zM1069 893h1v1h-1zM1104 893h1v1h-1zM1139 893h1v1h-1zM1174 893h1v1h-1zM1209 893h1v1h-1zM1244 893h1v1h-1zM1279 893h1v1h-1zM1314 893h1v1h-1zM1349 893h1v1h-1zM1384 893h1v1h-1zM1419 893h1v1h-1zM1454 893h1v1h-1zM1489 893h1v1h-1zM1524 893h1v1h-1zM1559 893h1v1h-1zM1594 893h1v1h-1zM1629 893h1v1h-1zM1664 893h1v1h-1zM1699 893h1v1h-1zM1734 893h1v1h-1zM20 916h1v1h-1zM55 916h1v1h-1zM90 916h1v1h-1zM125 916h1v1h-1zM160 916h1v1h-1zM195 916h1v1h-1zM230 916h1v1h-1zM265 916h1v1h-1zM300 916h1v1h-1zM335 916h1v1h-1zM370 916h1v1h-1zM405 916h1v1h-1zM440 916h1v1h-1zM475 916h1v1h-1zM510 916h1v1h-1zM545 916h1v1h-1zM580 916h1v1h-1zM615 916h1v1h-1zM650 916h1v1h-1zM685 916h1v1h-1zM720 916h1v1h-1zM755 916h1v1h-1zM790 916h1v1h-1zM825 916h1v1h-1zM860 916h1v1h-1zM895 916h1v1h-1zM929 916h1v1h-1zM964 916h1v1h-1zM999 916h1v1h-1zM1034 916h1v1h-1zM1069 916h1v1h-1zM1104 916h1v1h-1zM1139 916h1v1h-1zM1174 916h1v1h-1zM1209 916h1v1h-1zM1244 916h1v1h-1zM1279 916h1v1h-1zM1314 916h1v1h-1zM1349 916h1v1h-1zM1384 916h1v1h-1zM1419 916h1v1h-1zM1454 916h1v1h-1zM1489 916h1v1h-1zM1524 916h1v1h-1zM1559 916h1v1h-1zM1594 916h1v1h-1zM1629 916h1v1h-1zM1664 916h1v1h-1zM1699 916h1v1h-1zM1734 916h1v1h-1zM20 940h1v1h-1zM55 940h1v1h-1zM90 940h1v1h-1zM125 940h1v1h-1zM160 940h1v1h-1zM195 940h1v1h-1zM230 940h1v1h-1zM265 940h1v1h-1zM300 940h1v1h-1zM335 940h1v1h-1zM370 940h1v1h-1zM405 940h1v1h-1zM440 940h1v1h-1zM475 940h1v1h-1zM510 940h1v1h-1zM545 940h1v1h-1zM580 940h1v1h-1zM615 940h1v1h-1zM650 940h1v1h-1zM685 940h1v1h-1zM720 940h1v1h-1zM755 940h1v1h-1zM790 940h1v1h-1zM825 940h1v1h-1zM860 940h1v1h-1zM895 940h1v1h-1zM929 940h1v1h-1zM964 940h1v1h-1zM999 940h1v1h-1zM1034 940h1v1h-1zM1069 940h1v1h-1zM1104 940h1v1h-1zM1139 940h1v1h-1zM1174 940h1v1h-1zM1209 940h1v1h-1zM1244 940h1v1h-1zM1279 940h1v1h-1zM1314 940h1v1h-1zM1349 940h1v1h-1zM1384 940h1v1h-1zM1419 940h1v1h-1zM1454 940h1v1h-1zM1489 940h1v1h-1zM1524 940h1v1h-1zM1559 940h1v1h-1zM1594 940h1v1h-1zM1629 940h1v1h-1zM1664 940h1v1h-1zM1699 940h1v1h-1zM1734 940h1v1h-1zM20 986h1v1h-1zM55 986h1v1h-1zM90 986h1v1h-1zM125 986h1v1h-1zM160 986h1v1h-1zM195 986h1v1h-1zM230 986h1v1h-1zM265 986h1v1h-1zM300 986h1v1h-1zM335 986h1v1h-1zM370 986h1v1h-1zM405 986h1v1h-1zM440 986h1v1h-1zM475 986h1v1h-1zM510 986h1v1h-1zM545 986h1v1h-1zM580 986h1v1h-1zM615 986h1v1h-1zM650 986h1v1h-1zM685 986h1v1h-1zM720 986h1v1h-1zM755 986h1v1h-1zM790 986h1v1h-1zM825 986h1v1h-1zM860 986h1v1h-1zM895 986h1v1h-1zM929 986h1v1h-1zM964 986h1v1h-1zM999 986h1v1h-1zM1034 986h1v1h-1zM1069 986h1v1h-1zM1104 986h1v1h-1zM1139 986h1v1h-1zM1174 986h1v1h-1zM1209 986h1v1h-1zM1244 986h1v1h-1zM1279 986h1v1h-1zM1314 986h1v1h-1zM1349 986h1v1h-1zM1384 986h1v1h-1zM1419 986h1v1h-1zM1454 986h1v1h-1zM1489 986h1v1h-1zM1524 986h1v1h-1zM1559 986h1v1h-1zM1594 986h1v1h-1zM1629 986h1v1h-1zM1664 986h1v1h-1zM1699 986h1v1h-1zM1734 986h1v1h-1z" fill="#c8c8c8" shape-rendering="crispEdges"/><path d="M230 57h1v1h-1zM230 61h1v1h-1zM230 66h1v1h-1zM230 71h1v1h-1zM230 75h1v1h-1zM230 80h1v1h-1zM230 85h1v1h-1zM230 89h1v1h-1zM230 94h1v1h-1zM230 99h1v1h-1zM230 103h1v1h-1zM230 108h1v1h-1zM230 113h1v1h-1zM230 117h1v1h-1zM230 122h1v1h-1zM230 127h1v1h-1zM230 131h1v1h-1zM230 136h1v1h-1zM230 140h1v1h-1zM230 145h1v1h-1zM230 150h1v1h-1zM230 154h1v1h-1zM230 159h1v1h-1zM230 164h1v1h-1zM230 168h1v1h-1zM230 173h1v1h-1zM230 178h1v1h-1zM230 182h1v1h-1zM230 187h1v1h-1zM230 192h1v1h-1zM230 196h1v1h-1zM230 201h1v1h-1zM230 205h1v1h-1zM230 210h1v1h-1zM230 215h1v1h-1zM230 219h1v1h-1zM230 224h1v1h-1zM230 229h1v1h-1zM230 233h1v1h-1zM230 238h1v1h-1zM230 243h1v1h-1zM230 247h1v1h-1zM230 252h1v1h-1zM230 257h1v1h-1zM230 261h1v1h-1zM230 266h1v1h-1zM230 270h1v1h-1zM230 275h1v1h-1zM230 280h1v1h-1zM230 284h1v1h-1zM230 291h1v1h-1zM230 296h1v1h-1zM230 300h1v1h-1zM230 305h1v1h-1zM230 310h1v1h-1zM230 314h1v1h-1zM230 319h1v1h-1zM230 323h1v1h-1zM230 328h1v1h-1zM230 333h1v1h-1zM230 337h1v1h-1zM230 342h1v1h-1zM230 347h1v1h-1zM230 351h1v1h-1zM230 356h1v1h-1zM230 361h1v1h-1zM230 365h1v1h-1zM230 370h1v1h-1zM230 375h1v1h-1zM230 379h1v1h-1zM230 384h1v1h-1zM230 388h1v1h-1zM230 393h1v1h-1zM230 398h1v1h-1zM230 402h1v1h-1zM230 407h1v1h-1zM230 412h1v1h-1zM230 416h1v1h-1zM230 421h1v1h-1zM230 426h1v1h-1zM230 430h1v1h-1zM230 435h1v1h-1zM230 440h1v1h-1zM230 444h1v1h-1zM230 449h1v1h-1zM230 454h1v1h-1zM230 458h1v1h-1zM230 463h1v1h-1zM230 467h1v1h-1zM230 472h1v1h-1zM230 477h1v1h-1zM230 481h1v1h-1zM230 486h1v1h-1zM230 491h1v1h-1zM230 495h1v1h-1zM230 500h1v1h-1zM230 505h1v1h-1zM230 509h1v1h-1zM230 514h1v1h-1zM230 519h1v1h-1zM230 525h1v1h-1zM230 529h1v1h-1zM230 534h1v1h-1zM230 539h1v1h-1zM230 543h1v1h-1zM230 548h1v1h-1zM230 553h1v1h-1zM230 557h1v1h-1zM230 562h1v1h-1zM230 567h1v1h-1zM230 571h1v1h-1zM230 576h1v1h-1zM230 581h1v1h-1zM230 585h1v1h-1zM230 590h1v1h-1zM230 594h1v1h-1zM230 599h1v1h-1zM230 604h1v1h-1zM230 608h1v1h-1zM230 613h1v1h-1zM230 618h1v1h-1zM230 622h1v1h-1zM230 627h1v1h-1zM230 632h1v1h-1zM230 636h1v1h-1zM230 641h1v1h-1zM230 646h1v1h-1zM230 650h1v1h-1zM230 655h1v1h-1zM230 659h1v1h-1zM230 664h1v1h-1zM230 669h1v1h-1zM230 673h1v1h-1zM230 678h1v1h-1zM230 683h1v1h-1zM230 687h1v1h-1zM230 692h1v1h-1zM230 697h1v1h-1zM230 701h1v1h-1zM230 706h1v1h-1zM230 711h1v1h-1zM230 715h1v1h-1zM230 720h1v1h-1zM230 725h1v1h-1zM230 729h1v1h-1zM230 734h1v1h-1zM230 738h1v1h-1zM230 743h1v1h-1zM230 748h1v1h-1zM230 752h1v1h-1zM230 763h1v1h-1zM230 768h1v1h-1zM230 772h1v1h-1zM230 777h1v1h-1zM230 782h1v1h-1zM230 786h1v1h-1zM230 791h1v1h-1zM230 796h1v1h-1zM230 800h1v1h-1zM230 805h1v1h-1zM230 810h1v1h-1zM230 814h1v1h-1zM230 819h1v1h-1zM230 823h1v1h-1zM230 828h1v1h-1zM230 833h1v1h-1zM230 837h1v1h-1zM230 842h1v1h-1zM230 847h1v1h-1zM230 851h1v1h-1zM230 856h1v1h-1zM230 861h1v1h-1zM230 865h1v1h-1zM230 870h1v1h-1zM230 875h1v1h-1zM230 879h1v1h-1zM230 884h1v1h-1zM230 888h1v1h-1zM230 893h1v1h-1zM230 898h1v1h-1zM230 902h1v1h-1zM230 907h1v1h-1zM230 912h1v1h-1zM230 916h1v1h-1zM230 921h1v1h-1zM230 926h1v1h-1zM230 930h1v1h-1zM230 935h1v1h-1zM230 940h1v1h-1zM230 944h1v1h-1zM230 949h1v1h-1zM230 954h1v1h-1zM230 958h1v1h-1zM230 963h1v1h-1zM230 967h1v1h-1zM230 972h1v1h-1zM230 977h1v1h-1zM230 981h1v1h-1zM230 986h1v1h-1zM405 57h1v1h-1zM405 61h1v1h-1zM405 66h1v1h-1zM405 71h1v1h-1zM405 75h1v1h-1zM405 80h1v1h-1zM405 85h1v1h-1zM405 89h1v1h-1zM405 94h1v1h-1zM405 99h1v1h-1zM405 103h1v1h-1zM405 108h1v1h-1zM405 113h1v1h-1zM405 117h1v1h-1zM405 122h1v1h-1zM405 127h1v1h-1zM405 131h1v1h-1zM405 136h1v1h-1zM405 140h1v1h-1zM405 145h1v1h-1zM405 150h1v1h-1zM405 154h1v1h-1zM405 159h1v1h-1zM405 164h1v1h-1zM405 168h1v1h-1zM405 173h1v1h-1zM405 178h1v1h-1zM405 182h1v1h-1zM405 187h1v1h-1zM405 192h1v1h-1zM405 196h1v1h-1zM405 201h1v1h-1zM405 205h1v1h-1zM405 210h1v1h-1zM405 215h1v1h-1zM405 219h1v1h-1zM405 224h1v1h-1zM405 229h1v1h-1zM405 233h1v1h-1zM405 238h1v1h-1zM405 243h1v1h-1zM405 247h1v1h-1zM405 252h1v1h-1zM405 257h1v1h-1zM405 261h1v1h-1zM405 266h1v1h-1zM405 270h1v1h-1zM405 275h1v1h-1zM405 280h1v1h-1zM405 284h1v1h-1zM405 291h1v1h-1zM405 296h1v1h-1zM405 300h1v1h-1zM405 305h1v1h-1zM405 310h1v1h-1zM405 314h1v1h-1zM405 319h1v1h-1zM405 323h1v1h-1zM405 328h1v1h-1zM405 333h1v1h-1zM405 337h1v1h-1zM405 342h1v1h-1zM405 347h1v1h-1zM405 351h1v1h-1zM405 356h1v1h-1zM405 361h1v1h-1zM405 365h1v1h-1zM405 370h1v1h-1zM405 375h1v1h-1zM405 379h1v1h-1zM405 384h1v1h-1zM405 388h1v1h-1zM405 393h1v1h-1zM405 398h1v1h-1zM405 402h1v1h-1zM405 407h1v1h-1zM405 412h1v1h-1zM405 416h1v1h-1zM405 421h1v1h-1zM405 426h1v1h-1zM405 430h1v1h-1zM405 435h1v1h-1zM405 440h1v1h-1zM405 444h1v1h-1zM405 449h1v1h-1zM405 454h1v1h-1zM405 458h1v1h-1zM405 463h1v1h-1zM405 467h1v1h-1zM405 472h1v1h-1zM405 477h1v1h-1zM405 481h1v1h-1zM405 486h1v1h-1zM405 491h1v1h-1zM405 495h1v1h-1zM405 500h1v1h-1zM405 505h1v1h-1zM405 509h1v1h-1zM405 514h1v1h-1zM405 519h1v1h-1zM405 525h1v1h-1zM405 529h1v1h-1zM405 534h1v1h-1zM405 539h1v1h-1zM405 543h1v1h-1zM405 548h1v1h-1zM405 553h1v1h-1zM405 557h1v1h-1zM405 562h1v1h-1zM405 567h1v1h-1zM405 571h1v1h-1zM405 576h1v1h-1zM405 581h1v1h-1zM405 585h1v1h-1zM405 590h1v1h-1zM405 594h1v1h-1zM405 599h1v1h-1zM405 604h1v1h-1zM405 608h1v1h-1zM405 613h1v1h-1zM405 618h1v1h-1zM405 622h1v1h-1zM405 627h1v1h-1zM405 632h1v1h-1zM405 636h1v1h-1zM405 641h1v1h-1zM405 646h1v1h-1zM405 650h1v1h-1zM405 655h1v1h-1zM405 659h1v1h-1zM405 664h1v1h-1zM405 669h1v1h-1zM405 673h1v1h-1zM405 678h1v1h-1zM405 683h1v1h-1zM405 687h1v1h-1zM405 692h1v1h-1zM405 697h1v1h-1zM405 701h1v1h-1zM405 706h1v1h-1zM405 711h1v1h-1zM405 715h1v1h-1zM405 720h1v1h-1zM405 725h1v1h-1zM405 729h1v1h-1zM405 734h1v1h-1zM405 738h1v1h-1zM405 743h1v1h-1zM405 748h1v1h-1zM405 752h1v1h-1zM405 763h1v1h-1zM405 768h1v1h-1zM405 772h1v1h-1zM405 777h1v1h-1zM405 782h1v1h-1zM405 786h1v1h-1zM405 791h1v1h-1zM405 796h1v1h-1zM405 800h1v1h-1zM405 805h1v1h-1zM405 810h1v1h-1zM405 814h1v1h-1zM405 819h1v1h-1zM405 823h1v1h-1zM405 828h1v1h-1zM405 833h1v1h-1zM405 837h1v1h-1zM405 842h1v1h-1zM405 847h1v1h-1zM405 851h1v1h-1zM405 856h1v1h-1zM405 861h1v1h-1zM405 865h1v1h-1zM405 870h1v1h-1zM405 875h1v1h-1zM405 879h1v1h-1zM405 884h1v1h-1zM405 888h1v1h-1zM405 893h1v1h-1zM405 898h1v1h-1zM405 902h1v1h-1zM405 907h1v1h-1zM405 912h1v1h-1zM405 916h1v1h-1zM405 921h1v1h-1zM405 926h1v1h-1zM405 930h1v1h-1zM405 935h1v1h-1zM405 940h1v1h-1zM405 944h1v1h-1zM405 949h1v1h-1zM405 954h1v1h-1zM405 958h1v1h-1zM405 963h1v1h-1zM405 967h1v1h-1zM405 972h1v1h-1zM405 977h1v1h-1zM405 981h1v1h-1zM405 986h1v1h-1zM580 57h1v1h-1zM580 61h1v1h-1zM580 66h1v1h-1zM580 71h1v1h-1zM580 75h1v1h-1zM580 80h1v1h-1zM580 85h1v1h-1zM580 89h1v1h-1zM580 94h1v1h-1zM580 99h1v1h-1zM580 103h1v1h-1zM580 108h1v1h-1zM580 113h1v1h-1zM580 117h1v1h-1zM580 122h1v1h-1zM580 127h1v1h-1zM580 131h1v1h-1zM580 136h1v1h-1zM580 140h1v1h-1zM580 145h1v1h-1zM580 150h1v1h-1zM580 154h1v1h-1zM580 159h1v1h-1zM580 164h1v1h-1zM580 168h1v1h-1zM580 173h1v1h-1zM580 178h1v1h-1zM580 182h1v1h-1zM580 187h1v1h-1zM580 192h1v1h-1zM580 196h1v1h-1zM580 201h1v1h-1zM580 205h1v1h-1zM580 210h1v1h-1zM580 215h1v1h-1zM580 219h1v1h-1zM580 224h1v1h-1zM580 229h1v1h-1zM580 233h1v1h-1zM580 238h1v1h-1zM580 243h1v1h-1zM580 247h1v1h-1zM580 252h1v1h-1zM580 257h1v1h-1zM580 261h1v1h-1zM580 266h1v1h-1zM580 270h1v1h-1zM580 275h1v1h-1zM580 280h1v1h-1zM580 284h1v1h-1zM580 291h1v1h-1zM580 296h1v1h-1zM580 300h1v1h-1zM580 305h1v1h-1zM580 310h1v1h-1zM580 314h1v1h-1zM580 319h1v1h-1zM580 323h1v1h-1zM580 328h1v1h-1zM580 333h1v1h-1zM580 337h1v1h-1zM580 342h1v1h-1zM580 347h1v1h-1zM580 351h1v1h-1zM580 356h1v1h-1zM580 361h1v1h-1zM580 365h1v1h-1zM580 370h1v1h-1zM580 375h1v1h-1zM580 379h1v1h-1zM580 384h1v1h-1zM580 388h1v1h-1zM580 393h1v1h-1zM580 398h1v1h-1zM580 402h1v1h-1zM580 407h1v1h-1zM580 412h1v1h-1zM580 416h1v1h-1zM580 421h1v1h-1zM580 426h1v1h-1zM580 430h1v1h-1zM580 435h1v1h-1zM580 440h1v1h-1zM580 444h1v1h-1zM580 449h1v1h-1zM580 454h1v1h-1zM580 458h1v1h-1zM580 463h1v1h-1zM580 467h1v1h-1zM580 472h1v1h-1zM580 477h1v1h-1zM580 481h1v1h-1zM580 486h1v1h-1zM580 491h1v1h-1zM580 495h1v1h-1zM580 500h1v1h-1zM580 505h1v1h-1zM580 509h1v1h-1zM580 514h1v1h-1zM580 519h1v1h-1zM580 525h1v1h-1zM580 529h1v1h-1zM580 534h1v1h-1zM580 539h1v1h-1zM580 543h1v1h-1zM580 548h1v1h-1zM580 553h1v1h-1zM580 557h1v1h-1zM580 562h1v1h-1zM580 567h1v1h-1zM580 571h1v1h-1zM580 576h1v1h-1zM580 581h1v1h-1zM580 585h1v1h-1zM580 590h1v1h-1zM580 594h1v1h-1zM580 599h1v1h-1zM580 604h1v1h-1zM580 608h1v1h-1zM580 613h1v1h-1zM580 618h1v1h-1zM580 622h1v1h-1zM580 627h1v1h-1zM580 632h1v1h-1zM580 636h1v1h-1zM580 641h1v1h-1zM580 646h1v1h-1zM580 650h1v1h-1zM580 655h1v1h-1zM580 659h1v1h-1zM580 664h1v1h-1zM580 669h1v1h-1zM580 673h1v1h-1zM580 678h1v1h-1zM580 683h1v1h-1zM580 687h1v1h-1zM580 692h1v1h-1zM580 697h1v1h-1zM580 701h1v1h-1zM580 706h1v1h-1zM580 711h1v1h-1zM580 715h1v1h-1zM580 720h1v1h-1zM580 725h1v1h-1zM580 729h1v1h-1zM580 734h1v1h-1zM580 738h1v1h-1zM580 743h1v1h-1zM580 748h1v1h-1zM580 752h1v1h-1zM580 763h1v1h-1zM580 768h1v1h-1zM580 772h1v1h-1zM580 777h1v1h-1zM580 782h1v1h-1zM580 786h1v1h-1zM580 791h1v1h-1zM580 796h1v1h-1zM580 800h1v1h-1zM580 805h1v1h-1zM580 810h1v1h-1zM580 814h1v1h-1zM580 819h1v1h-1zM580 823h1v1h-1zM580 828h1v1h-1zM580 833h1v1h-1zM580 837h1v1h-1zM580 842h1v1h-1zM580 847h1v1h-1zM580 851h1v1h-1zM580 856h1v1h-1zM580 861h1v1h-1zM580 865h1v1h-1zM580 870h1v1h-1zM580 875h1v1h-1zM580 879h1v1h-1zM580 884h1v1h-1zM580 888h1v1h-1zM580 893h1v1h-1zM580 898h1v1h-1zM580 902h1v1h-1zM580 907h1v1h-1zM580 912h1v1h-1zM580 916h1v1h-1zM580 921h1v1h-1zM580 926h1v1h-1zM580 930h1v1h-1zM580 935h1v1h-1zM580 940h1v1h-1zM580 944h1v1h-1zM580 949h1v1h-1zM580 954h1v1h-1zM580 958h1v1h-1zM580 963h1v1h-1zM580 967h1v1h-1zM580 972h1v1h-1zM580 977h1v1h-1zM580 981h1v1h-1zM580 986h1v1h-1zM755 57h1v1h-1zM755 61h1v1h-1zM755 66h1v1h-1zM755 71h1v1h-1zM755 75h1v1h-1zM755 80h1v1h-1zM755 85h1v1h-1zM755 89h1v1h-1zM755 94h1v1h-1zM755 99h1v1h-1zM755 103h1v1h-1zM755 108h1v1h-1zM755 113h1v1h-1zM755 117h1v1h-1zM755 122h1v1h-1zM755 127h1v1h-1zM755 131h1v1h-1zM755 136h1v1h-1zM755 140h1v1h-1zM755 145h1v1h-1zM755 150h1v1h-1zM755 154h1v1h-1zM755 159h1v1h-1zM755 164h1v1h-1zM755 168h1v1h-1zM755 173h1v1h-1zM755 178h1v1h-1zM755 182h1v1h-1zM755 187h1v1h-1zM755 192h1v1h-1zM755 196h1v1h-1zM755 201h1v1h-1zM755 205h1v1h-1zM755 210h1v1h-1zM755 215h1v1h-1zM755 219h1v1h-1zM755 224h1v1h-1zM755 229h1v1h-1zM755 233h1v1h-1zM755 238h1v1h-1zM755 243h1v1h-1zM755 247h1v1h-1zM755 252h1v1h-1zM755 257h1v1h-1zM755 261h1v1h-1zM755 266h1v1h-1zM755 270h1v1h-1zM755 275h1v1h-1zM755 280h1v1h-1zM755 284h1v1h-1zM755 291h1v1h-1zM755 296h1v1h-1zM755 300h1v1h-1zM755 305h1v1h-1zM755 310h1v1h-1zM755 314h1v1h-1zM755 319h1v1h-1zM755 323h1v1h-1zM755 328h1v1h-1zM755 333h1v1h-1zM755 337h1v1h-1zM755 342h1v1h-1zM755 347h1v1h-1zM755 351h1v1h-1zM755 356h1v1h-1zM755 361h1v1h-1zM755 365h1v1h-1zM755 370h1v1h-1zM755 375h1v1h-1zM755 379h1v1h-1zM755 384h1v1h-1zM755 388h1v1h-1zM755 393h1v1h-1zM755 398h1v1h-1zM755 402h1v1h-1zM755 407h1v1h-1zM755 412h1v1h-1zM755 416h1v1h-1zM755 421h1v1h-1zM755 426h1v1h-1zM755 430h1v1h-1zM755 435h1v1h-1zM755 440h1v1h-1zM755 444h1v1h-1zM755 449h1v1h-1zM755 454h1v1h-1zM755 458h1v1h-1zM755 463h1v1h-1zM755 467h1v1h-1zM755 472h1v1h-1zM755 477h1v1h-1zM755 481h1v1h-1zM755 486h1v1h-1zM755 491h1v1h-1zM755 495h1v1h-1zM755 500h1v1h-1zM755 505h1v1h-1zM755 509h1v1h-1zM755 514h1v1h-1zM755 519h1v1h-1zM755 525h1v1h-1zM755 529h1v1h-1zM755 534h1v1h-1zM755 539h1v1h-1zM755 543h1v1h-1zM755 548h1v1h-1zM755 553h1v1h-1zM755 557h1v1h-1zM755 562h1v1h-1zM755 567h1v1h-1zM755 571h1v1h-1zM755 576h1v1h-1zM755 581h1v1h-1zM755 585h1v1h-1zM755 590h1v1h-1zM755 594h1v1h-1zM755 599h1v1h-1zM755 604h1v1h-1zM755 608h1v1h-1zM755 613h1v1h-1zM755 618h1v1h-1zM755 622h1v1h-1zM755 627h1v1h-1zM755 632h1v1h-1zM755 636h1v1h-1zM755 641h1v1h-1zM755 646h1v1h-1zM755 650h1v1h-1zM755 655h1v1h-1zM755 659h1v1h-1zM755 664h1v1h-1zM755 669h1v1h-1zM755 673h1v1h-1zM755 678h1v1h-1zM755 683h1v1h-1zM755 687h1v1h-1zM755 692h1v1h-1zM755 697h1v1h-1zM755 701h1v1h-1zM755 706h1v1h-1zM755 711h1v1h-1zM755 715h1v1h-1zM755 720h1v1h-1zM755 725h1v1h-1zM755 729h1v1h-1zM755 734h1v1h-1zM755 738h1v1h-1zM755 743h1v1h-1zM755 748h1v1h-1zM755 752h1v1h-1zM755 763h1v1h-1zM755 768h1v1h-1zM755 772h1v1h-1zM755 777h1v1h-1zM755 782h1v1h-1zM755 786h1v1h-1zM755 791h1v1h-1zM755 796h1v1h-1zM755 800h1v1h-1zM755 805h1v1h-1zM755 810h1v1h-1zM755 814h1v1h-1zM755 819h1v1h-1zM755 823h1v1h-1zM755 828h1v1h-1zM755 833h1v1h-1zM755 837h1v1h-1zM755 842h1v1h-1zM755 847h1v1h-1zM755 851h1v1h-1zM755 856h1v1h-1zM755 861h1v1h-1zM755 865h1v1h-1zM755 870h1v1h-1zM755 875h1v1h-1zM755 879h1v1h-1zM755 884h1v1h-1zM755 888h1v1h-1zM755 893h1v1h-1zM755 898h1v1h-1zM755 902h1v1h-1zM755 907h1v1h-1zM755 912h1v1h-1zM755 916h1v1h-1zM755 921h1v1h-1zM755 926h1v1h-1zM755 930h1v1h-1zM755 935h1v1h-1zM755 940h1v1h-1zM755 944h1v1h-1zM755 949h1v1h-1zM755 954h1v1h-1zM755 958h1v1h-1zM755 963h1v1h-1zM755 967h1v1h-1zM755 972h1v1h-1zM755 977h1v1h-1zM755 981h1v1h-1zM755 986h1v1h-1zM929 57h1v1h-1zM929 61h1v1h-1zM929 66h1v1h-1zM929 71h1v1h-1zM929 75h1v1h-1zM929 80h1v1h-1zM929 85h1v1h-1zM929 89h1v1h-1zM929 94h1v1h-1zM929 99h1v1h-1zM929 103h1v1h-1zM929 108h1v1h-1zM929 113h1v1h-1zM929 117h1v1h-1zM929 122h1v1h-1zM929 127h1v1h-1zM929 131h1v1h-1zM929 136h1v1h-1zM929 140h1v1h-1zM929 145h1v1h-1zM929 150h1v1h-1zM929 154h1v1h-1zM929 159h1v1h-1zM929 164h1v1h-1zM929 168h1v1h-1zM929 173h1v1h-1zM929 178h1v1h-1zM929 182h1v1h-1zM929 187h1v1h-1zM929 192h1v1h-1zM929 196h1v1h-1zM929 201h1v1h-1zM929 205h1v1h-1zM929 210h1v1h-1zM929 215h1v1h-1zM929 219h1v1h-1zM929 224h1v1h-1zM929 229h1v1h-1zM929 233h1v1h-1zM929 238h1v1h-1zM929 243h1v1h-1zM929 247h1v1h-1zM929 252h1v1h-1zM929 257h1v1h-1zM929 261h1v1h-1zM929 266h1v1h-1zM929 270h1v1h-1zM929 275h1v1h-1zM929 280h1v1h-1zM929 284h1v1h-1zM929 291h1v1h-1zM929 296h1v1h-1zM929 300h1v1h-1zM929 305h1v1h-1zM929 310h1v1h-1zM929 314h1v1h-1zM929 319h1v1h-1zM929 323h1v1h-1zM929 328h1v1h-1zM929 333h1v1h-1zM929 337h1v1h-1zM929 342h1v1h-1zM929 347h1v1h-1zM929 351h1v1h-1zM929 356h1v1h-1zM929 361h1v1h-1zM929 365h1v1h-1zM929 370h1v1h-1zM929 375h1v1h-1zM929 379h1v1h-1zM929 384h1v1h-1zM929 388h1v1h-1zM929 393h1v1h-1zM929 398h1v1h-1zM929 402h1v1h-1zM929 407h1v1h-1zM929 412h1v1h-1zM929 416h1v1h-1zM929 421h1v1h-1zM929 426h1v1h-1zM929 430h1v1h-1zM929 435h1v1h-1zM929 440h1v1h-1zM929 444h1v1h-1zM929 449h1v1h-1zM929 454h1v1h-1zM929 458h1v1h-1zM929 463h1v1h-1zM929 467h1v1h-1zM929 472h1v1h-1zM929 477h1v1h-1zM929 481h1v1h-1zM929 486h1v1h-1zM929 491h1v1h-1zM929 495h1v1h-1zM929 500h1v1h-1zM929 505h1v1h-1zM929 509h1v1h-1zM929 514h1v1h-1zM929 519h1v1h-1zM929 525h1v1h-1zM929 529h1v1h-1zM929 534h1v1h-1zM929 539h1v1h-1zM929 543h1v1h-1zM929 548h1v1h-1zM929 553h1v1h-1zM929 557h1v1h-1zM929 562h1v1h-1zM929 567h1v1h-1zM929 571h1v1h-1zM929 576h1v1h-1zM929 581h1v1h-1zM929 585h1v1h-1zM929 590h1v1h-1zM929 594h1v1h-1zM929 599h1v1h-1zM929 604h1v1h-1zM929 608h1v1h-1zM929 613h1v1h-1zM929 618h1v1h-1zM929 622h1v1h-1zM929 627h1v1h-1zM929 632h1v1h-1zM929 636h1v1h-1zM929 641h1v1h-1zM929 646h1v1h-1zM929 650h1v1h-1zM929 655h1v1h-1zM929 659h1v1h-1zM929 664h1v1h-1zM929 669h1v1h-1zM929 673h1v1h-1zM929 678h1v1h-1zM929 683h1v1h-1zM929 687h1v1h-1zM929 692h1v1h-1zM929 697h1v1h-1zM929 701h1v1h-1zM929 706h1v1h-1zM929 711h1v1h-1zM929 715h1v1h-1zM929 720h1v1h-1zM929 725h1v1h-1zM929 729h1v1h-1zM929 734h1v1h-1zM929 738h1v1h-1zM929 743h1v1h-1zM929 748h1v1h-1zM929 752h1v1h-1zM929 763h1v1h-1zM929 768h1v1h-1zM929 772h1v1h-1zM929 777h1v1h-1zM929 782h1v1h-1zM929 786h1v1h-1zM929 791h1v1h-1zM929 796h1v1h-1zM929 800h1v1h-1zM929 805h1v1h-1zM929 810h1v1h-1zM929 814h1v1h-1zM929 819h1v1h-1zM929 823h1v1h-1zM929 828h1v1h-1zM929 833h1v1h-1zM929 837h1v1h-1zM929 842h1v1h-1zM929 847h1v1h-1zM929 851h1v1h-1zM929 856h1v1h-1zM929 861h1v1h-1zM929 865h1v1h-1zM929 870h1v1h-1zM929 875h1v1h-1zM929 879h1v1h-1zM929 884h1v1h-1zM929 888h1v1h-1zM929 893h1v1h-1zM929 898h1v1h-1zM929 902h1v1h-1zM929 907h1v1h-1zM929 912h1v1h-1zM929 916h1v1h-1zM929 921h1v1h-1zM929 926h1v1h-1zM929 930h1v1h-1zM929 935h1v1h-1zM929 940h1v1h-1zM929 944h1v1h-1zM929 949h1v1h-1zM929 954h1v1h-1zM929 958h1v1h-1zM929 963h1v1h-1zM929 967h1v1h-1zM929 972h1v1h-1zM929 977h1v1h-1zM929 981h1v1h-1zM929 986h1v1h-1zM1104 57h1v1h-1zM1104 61h1v1h-1zM1104 66h1v1h-1zM1104 71h1v1h-1zM1104 75h1v1h-1zM1104 80h1v1h-1zM1104 85h1v1h-1zM1104 89h1v1h-1zM1104 94h1v1h-1zM1104 99h1v1h-1zM1104 103h1v1h-1zM1104 108h1v1h-1zM1104 113h1v1h-1zM1104 117h1v1h-1zM1104 122h1v1h-1zM1104 127h1v1h-1zM1104 131h1v1h-1zM1104 136h1v1h-1zM1104 140h1v1h-1zM1104 145h1v1h-1zM1104 150h1v1h-1zM1104 154h1v1h-1zM1104 159h1v1h-1zM1104 164h1v1h-1zM1104 168h1v1h-1zM1104 173h1v1h-1zM1104 178h1v1h-1zM1104 182h1v1h-1zM1104 187h1v1h-1zM1104 192h1v1h-1zM1104 196h1v1h-1zM1104 201h1v1h-1zM1104 205h1v1h-1zM1104 210h1v1h-1zM1104 215h1v1h-1zM1104 219h1v1h-1zM1104 224h1v1h-1zM1104 229h1v1h-1zM1104 233h1v1h-1zM1104 238h1v1h-1zM1104 243h1v1h-1zM1104 247h1v1h-1zM1104 252h1v1h-1zM1104 257h1v1h-1zM1104 261h1v1h-1zM1104 266h1v1h-1zM1104 270h1v1h-1zM1104 275h1v1h-1zM1104 280h1v1h-1zM1104 284h1v1h-1zM1104 291h1v1h-1zM1104 296h1v1h-1zM1104 300h1v1h-1zM1104 305h1v1h-1zM1104 310h1v1h-1zM1104 314h1v1h-1zM1104 319h1v1h-1zM1104 323h1v1h-1zM1104 328h1v1h-1zM1104 333h1v1h-1zM1104 337h1v1h-1zM1104 342h1v1h-1zM1104 347h1v1h-1zM1104 351h1v1h-1zM1104 356h1v1h-1zM1104 361h1v1h-1zM1104 365h1v1h-1zM1104 370h1v1h-1zM1104 375h1v1h-1zM1104 379h1v1h-1zM1104 384h1v1h-1zM1104 388h1v1h-1zM1104 393h1v1h-1zM1104 398h1v1h-1zM1104 402h1v1h-1zM1104 407h1v1h-1zM1104 412h1v1h-1zM1104 416h1v1h-1zM1104 421h1v1h-1zM1104 426h1v1h-1zM1104 430h1v1h-1zM1104 435h1v1h-1zM1104 440h1v1h-1zM1104 444h1v1h-1zM1104 449h1v1h-1zM1104 454h1v1h-1zM1104 458h1v1h-1zM1104 463h1v1h-1zM1104 467h1v1h-1zM1104 472h1v1h-1zM1104 477h1v1h-1zM1104 481h1v1h-1zM1104 486h1v1h-1zM1104 491h1v1h-1zM1104 495h1v1h-1zM1104 500h1v1h-1zM1104 505h1v1h-1zM1104 509h1v1h-1zM1104 514h1v1h-1zM1104 519h1v1h-1zM1104 525h1v1h-1zM1104 529h1v1h-1zM1104 534h1v1h-1zM1104 539h1v1h-1zM1104 543h1v1h-1zM1104 548h1v1h-1zM1104 553h1v1h-1zM1104 557h1v1h-1zM1104 562h1v1h-1zM1104 567h1v1h-1zM1104 571h1v1h-1zM1104 576h1v1h-1zM1104 581h1v1h-1zM1104 585h1v1h-1zM1104 590h1v1h-1zM1104 594h1v1h-1zM1104 599h1v1h-1zM1104 604h1v1h-1zM1104 608h1v1h-1zM1104 613h1v1h-1zM1104 618h1v1h-1zM1104 622h1v1h-1zM1104 627h1v1h-1zM1104 632h1v1h-1zM1104 636h1v1h-1zM1104 641h1v1h-1zM1104 646h1v1h-1zM1104 650h1v1h-1zM1104 655h1v1h-1zM1104 659h1v1h-1zM1104 664h1v1h-1zM1104 669h1v1h-1zM1104 673h1v1h-1zM1104 678h1v1h-1zM1104 683h1v1h-1zM1104 687h1v1h-1zM1104 692h1v1h-1zM1104 697h1v1h-1zM1104 701h1v1h-1zM1104 706h1v1h-1zM1104 711h1v1h-1zM1104 715h1v1h-1zM1104 720h1v1h-1zM1104 725h1v1h-1zM1104 729h1v1h-1zM1104 734h1v1h-1zM1104 738h1v1h-1zM1104 743h1v1h-1zM1104 748h1v1h-1zM1104 752h1v1h-1zM1104 763h1v1h-1zM1104 768h1v1h-1zM1104 772h1v1h-1zM1104 777h1v1h-1zM1104 782h1v1h-1zM1104 786h1v1h-1zM1104 791h1v1h-1zM1104 796h1v1h-1zM1104 800h1v1h-1zM1104 805h1v1h-1zM1104 810h1v1h-1zM1104 814h1v1h-1zM1104 819h1v1h-1zM1104 823h1v1h-1zM1104 828h1v1h-1zM1104 833h1v1h-1zM1104 837h1v1h-1zM1104 842h1v1h-1zM1104 847h1v1h-1zM1104 851h1v1h-1zM1104 856h1v1h-1zM1104 861h1v1h-1zM1104 865h1v1h-1zM1104 870h1v1h-1zM1104 875h1v1h-1zM1104 879h1v1h-1zM1104 884h1v1h-1zM1104 888h1v1h-1zM1104 893h1v1h-1zM1104 898h1v1h-1zM1104 902h1v1h-1zM1104 907h1v1h-1zM1104 912h1v1h-1zM1104 916h1v1h-1zM1104 921h1v1h-1zM1104 926h1v1h-1zM1104 930h1v1h-1zM1104 935h1v1h-1zM1104 940h1v1h-1zM1104 944h1v1h-1zM1104 949h1v1h-1zM1104 954h1v1h-1zM1104 958h1v1h-1zM1104 963h1v1h-1zM1104 967h1v1h-1zM1104 972h1v1h-1zM1104 977h1v1h-1zM1104 981h1v1h-1zM1104 986h1v1h-1zM1279 57h1v1h-1zM1279 61h1v1h-1zM1279 66h1v1h-1zM1279 71h1v1h-1zM1279 75h1v1h-1zM1279 80h1v1h-1zM1279 85h1v1h-1zM1279 89h1v1h-1zM1279 94h1v1h-1zM1279 99h1v1h-1zM1279 103h1v1h-1zM1279 108h1v1h-1zM1279 113h1v1h-1zM1279 117h1v1h-1zM1279 122h1v1h-1zM1279 127h1v1h-1zM1279 131h1v1h-1zM1279 136h1v1h-1zM1279 140h1v1h-1zM1279 145h1v1h-1zM1279 150h1v1h-1zM1279 154h1v1h-1zM1279 159h1v1h-1zM1279 164h1v1h-1zM1279 168h1v1h-1zM1279 173h1v1h-1zM1279 178h1v1h-1zM1279 182h1v1h-1zM1279 187h1v1h-1zM1279 192h1v1h-1zM1279 196h1v1h-1zM1279 201h1v1h-1zM1279 205h1v1h-1zM1279 210h1v1h-1zM1279 215h1v1h-1zM1279 219h1v1h-1zM1279 224h1v1h-1zM1279 229h1v1h-1zM1279 233h1v1h-1zM1279 238h1v1h-1zM1279 243h1v1h-1zM1279 247h1v1h-1zM1279 252h1v1h-1zM1279 257h1v1h-1zM1279 261h1v1h-1zM1279 266h1v1h-1zM1279 270h1v1h-1zM1279 275h1v1h-1zM1279 280h1v1h-1zM1279 284h1v1h-1zM1279 291h1v1h-1zM1279 296h1v1h-1zM1279 300h1v1h-1zM1279 305h1v1h-1zM1279 310h1v1h-1zM1279 314h1v1h-1zM1279 319h1v1h-1zM1279 323h1v1h-1zM1279 328h1v1h-1zM1279 333h1v1h-1zM1279 337h1v1h-1zM1279 342h1v1h-1zM1279 347h1v1h-1zM1279 351h1v1h-1zM1279 356h1v1h-1zM1279 361h1v1h-1zM1279 365h1v1h-1zM1279 370h1v1h-1zM1279 375h1v1h-1zM1279 379h1v1h-1zM1279 384h1v1h-1zM1279 388h1v1h-1zM1279 393h1v1h-1zM1279 398h1v1h-1zM1279 402h1v1h-1zM1279 407h1v1h-1zM1279 412h1v1h-1zM1279 416h1v1h-1zM1279 421h1v1h-1zM1279 426h1v1h-1zM1279 430h1v1h-1zM1279 435h1v1h-1zM1279 440h1v1h-1zM1279 444h1v1h-1zM1279 449h1v1h-1zM1279 454h1v1h-1zM1279 458h1v1h-1zM1279 463h1v1h-1zM1279 467h1v1h-1zM1279 472h1v1h-1zM1279 477h1v1h-1zM1279 481h1v1h-1zM1279 486h1v1h-1zM1279 491h1v1h-1zM1279 495h1v1h-1zM1279 500h1v1h-1zM1279 505h1v1h-1zM1279 509h1v1h-1zM1279 514h1v1h-1zM1279 519h1v1h-1zM1279 525h1v1h-1zM1279 529h1v1h-1zM1279 534h1v1h-1zM1279 539h1v1h-1zM1279 543h1v1h-1zM1279 548h1v1h-1zM1279 553h1v1h-1zM1279 557h1v1h-1zM1279 562h1v1h-1zM1279 567h1v1h-1zM1279 571h1v1h-1zM1279 576h1v1h-1zM1279 581h1v1h-1zM1279 585h1v1h-1zM1279 590h1v1h-1zM1279 594h1v1h-1zM1279 599h1v1h-1zM1279 604h1v1h-1zM1279 608h1v1h-1zM1279 613h1v1h-1zM1279 618h1v1h-1zM1279 622h1v1h-1zM1279 627h1v1h-1zM1279 632h1v1h-1zM1279 636h1v1h-1zM1279 641h1v1h-1zM1279 646h1v1h-1zM1279 650h1v1h-1zM1279 655h1v1h-1zM1279 659h1v1h-1zM1279 664h1v1h-1zM1279 669h1v1h-1zM1279 673h1v1h-1zM1279 678h1v1h-1zM1279 683h1v1h-1zM1279 687h1v1h-1zM1279 692h1v1h-1zM1279 697h1v1h-1zM1279 701h1v1h-1zM1279 706h1v1h-1zM1279 711h1v1h-1zM1279 715h1v1h-1zM1279 720h1v1h-1zM1279 725h1v1h-1zM1279 729h1v1h-1zM1279 734h1v1h-1zM1279 738h1v1h-1zM1279 743h1v1h-1zM1279 748h1v1h-1zM1279 752h1v1h-1zM1279 763h1v1h-1zM1279 768h1v1h-1zM1279 772h1v1h-1zM1279 777h1v1h-1zM1279 782h1v1h-1zM1279 786h1v1h-1zM1279 791h1v1h-1zM1279 796h1v1h-1zM1279 800h1v1h-1zM1279 805h1v1h-1zM1279 810h1v1h-1zM1279 814h1v1h-1zM1279 819h1v1h-1zM1279 823h1v1h-1zM1279 828h1v1h-1zM1279 833h1v1h-1zM1279 837h1v1h-1zM1279 842h1v1h-1zM1279 847h1v1h-1zM1279 851h1v1h-1zM1279 856h1v1h-1zM1279 861h1v1h-1zM1279 865h1v1h-1zM1279 870h1v1h-1zM1279 875h1v1h-1zM1279 879h1v1h-1zM1279 884h1v1h-1zM1279 888h1v1h-1zM1279 893h1v1h-1zM1279 898h1v1h-1zM1279 902h1v1h-1zM1279 907h1v1h-1zM1279 912h1v1h-1zM1279 916h1v1h-1zM1279 921h1v1h-1zM1279 926h1v1h-1zM1279 930h1v1h-1zM1279 935h1v1h-1zM1279 940h1v1h-1zM1279 944h1v1h-1zM1279 949h1v1h-1zM1279 954h1v1h-1zM1279 958h1v1h-1zM1279 963h1v1h-1zM1279 967h1v1h-1zM1279 972h1v1h-1zM1279 977h1v1h-1zM1279 981h1v1h-1zM1279 986h1v1h-1zM1454 57h1v1h-1zM1454 61h1v1h-1zM1454 66h1v1h-1zM1454 71h1v1h-1zM1454 75h1v1h-1zM1454 80h1v1h-1zM1454 85h1v1h-1zM1454 89h1v1h-1zM1454 94h1v1h-1zM1454 99h1v1h-1zM1454 103h1v1h-1zM1454 108h1v1h-1zM1454 113h1v1h-1zM1454 117h1v1h-1zM1454 122h1v1h-1zM1454 127h1v1h-1zM1454 131h1v1h-1zM1454 136h1v1h-1zM1454 140h1v1h-1zM1454 145h1v1h-1zM1454 150h1v1h-1zM1454 154h1v1h-1zM1454 159h1v1h-1zM1454 164h1v1h-1zM1454 168h1v1h-1zM1454 173h1v1h-1zM1454 178h1v1h-1zM1454 182h1v1h-1zM1454 187h1v1h-1zM1454 192h1v1h-1zM1454 196h1v1h-1zM1454 201h1v1h-1zM1454 205h1v1h-1zM1454 210h1v1h-1zM1454 215h1v1h-1zM1454 219h1v1h-1zM1454 224h1v1h-1zM1454 229h1v1h-1zM1454 233h1v1h-1zM1454 238h1v1h-1zM1454 243h1v1h-1zM1454 247h1v1h-1zM1454 252h1v1h-1zM1454 257h1v1h-1zM1454 261h1v1h-1zM1454 266h1v1h-1zM1454 270h1v1h-1zM1454 275h1v1h-1zM1454 280h1v1h-1zM1454 284h1v1h-1zM1454 291h1v1h-1zM1454 296h1v1h-1zM1454 300h1v1h-1zM1454 305h1v1h-1zM1454 310h1v1h-1zM1454 314h1v1h-1zM1454 319h1v1h-1zM1454 323h1v1h-1zM1454 328h1v1h-1zM1454 333h1v1h-1zM1454 337h1v1h-1zM1454 342h1v1h-1zM1454 347h1v1h-1zM1454 351h1v1h-1zM1454 356h1v1h-1zM1454 361h1v1h-1zM1454 365h1v1h-1zM1454 370h1v1h-1zM1454 375h1v1h-1zM1454 379h1v1h-1zM1454 384h1v1h-1zM1454 388h1v1h-1zM1454 393h1v1h-1zM1454 398h1v1h-1zM1454 402h1v1h-1zM1454 407h1v1h-1zM1454 412h1v1h-1zM1454 416h1v1h-1zM1454 421h1v1h-1zM1454 426h1v1h-1zM1454 430h1v1h-1zM1454 435h1v1h-1zM1454 440h1v1h-1zM1454 444h1v1h-1zM1454 449h1v1h-1zM1454 454h1v1h-1zM1454 458h1v1h-1zM1454 463h1v1h-1zM1454 467h1v1h-1zM1454 472h1v1h-1zM1454 477h1v1h-1zM1454 481h1v1h-1zM1454 486h1v1h-1zM1454 491h1v1h-1zM1454 495h1v1h-1zM1454 500h1v1h-1zM1454 505h1v1h-1zM1454 509h1v1h-1zM1454 514h1v1h-1zM1454 519h1v1h-1zM1454 525h1v1h-1zM1454 529h1v1h-1zM1454 534h1v1h-1zM1454 539h1v1h-1zM1454 543h1v1h-1zM1454 548h1v1h-1zM1454 553h1v1h-1zM1454 557h1v1h-1zM1454 562h1v1h-1zM1454 567h1v1h-1zM1454 571h1v1h-1zM1454 576h1v1h-1zM1454 581h1v1h-1zM1454 585h1v1h-1zM1454 590h1v1h-1zM1454 594h1v1h-1zM1454 599h1v1h-1zM1454 604h1v1h-1zM1454 608h1v1h-1zM1454 613h1v1h-1zM1454 618h1v1h-1zM1454 622h1v1h-1zM1454 627h1v1h-1zM1454 632h1v1h-1zM1454 636h1v1h-1zM1454 641h1v1h-1zM1454 646h1v1h-1zM1454 650h1v1h-1zM1454 655h1v1h-1zM1454 659h1v1h-1zM1454 664h1v1h-1zM1454 669h1v1h-1zM1454 673h1v1h-1zM1454 678h1v1h-1zM1454 683h1v1h-1zM1454 687h1v1h-1zM1454 692h1v1h-1zM1454 697h1v1h-1zM1454 701h1v1h-1zM1454 706h1v1h-1zM1454 711h1v1h-1zM1454 715h1v1h-1zM1454 720h1v1h-1zM1454 725h1v1h-1zM1454 729h1v1h-1zM1454 734h1v1h-1zM1454 738h1v1h-1zM1454 743h1v1h-1zM1454 748h1v1h-1zM1454 752h1v1h-1zM1454 763h1v1h-1zM1454 768h1v1h-1zM1454 772h1v1h-1zM1454 777h1v1h-1zM1454 782h1v1h-1zM1454 786h1v1h-1zM1454 791h1v1h-1zM1454 796h1v1h-1zM1454 800h1v1h-1zM1454 805h1v1h-1zM1454 810h1v1h-1zM1454 814h1v1h-1zM1454 819h1v1h-1zM1454 823h1v1h-1zM1454 828h1v1h-1zM1454 833h1v1h-1zM1454 837h1v1h-1zM1454 842h1v1h-1zM1454 847h1v1h-1zM1454 851h1v1h-1zM1454 856h1v1h-1zM1454 861h1v1h-1zM1454 865h1v1h-1zM1454 870h1v1h-1zM1454 875h1v1h-1zM1454 879h1v1h-1zM1454 884h1v1h-1zM1454 888h1v1h-1zM1454 893h1v1h-1zM1454 898h1v1h-1zM1454 902h1v1h-1zM1454 907h1v1h-1zM1454 912h1v1h-1zM1454 916h1v1h-1zM1454 921h1v1h-1zM1454 926h1v1h-1zM1454 930h1v1h-1zM1454 935h1v1h-1zM1454 940h1v1h-1zM1454 944h1v1h-1zM1454 949h1v1h-1zM1454 954h1v1h-1zM1454 958h1v1h-1zM1454 963h1v1h-1zM1454 967h1v1h-1zM1454 972h1v1h-1zM1454 977h1v1h-1zM1454 981h1v1h-1zM1454 986h1v1h-1zM1629 57h1v1h-1zM1629 61h1v1h-1zM1629 66h1v1h-1zM1629 71h1v1h-1zM1629 75h1v1h-1zM1629 80h1v1h-1zM1629 85h1v1h-1zM1629 89h1v1h-1zM1629 94h1v1h-1zM1629 99h1v1h-1zM1629 103h1v1h-1zM1629 108h1v1h-1zM1629 113h1v1h-1zM1629 117h1v1h-1zM1629 122h1v1h-1zM1629 127h1v1h-1zM1629 131h1v1h-1zM1629 136h1v1h-1zM1629 140h1v1h-1zM1629 145h1v1h-1zM1629 150h1v1h-1zM1629 154h1v1h-1zM1629 159h1v1h-1zM1629 164h1v1h-1zM1629 168h1v1h-1zM1629 173h1v1h-1zM1629 178h1v1h-1zM1629 182h1v1h-1zM1629 187h1v1h-1zM1629 192h1v1h-1zM1629 196h1v1h-1zM1629 201h1v1h-1zM1629 205h1v1h-1zM1629 210h1v1h-1zM1629 215h1v1h-1zM1629 219h1v1h-1zM1629 224h1v1h-1zM1629 229h1v1h-1zM1629 233h1v1h-1zM1629 238h1v1h-1zM1629 243h1v1h-1zM1629 247h1v1h-1zM1629 252h1v1h-1zM1629 257h1v1h-1zM1629 261h1v1h-1zM1629 266h1v1h-1zM1629 270h1v1h-1zM1629 275h1v1h-1zM1629 280h1v1h-1zM1629 284h1v1h-1zM1629 291h1v1h-1zM1629 296h1v1h-1zM1629 300h1v1h-1zM1629 305h1v1h-1zM1629 310h1v1h-1zM1629 314h1v1h-1zM1629 319h1v1h-1zM1629 323h1v1h-1zM1629 328h1v1h-1zM1629 333h1v1h-1zM1629 337h1v1h-1zM1629 342h1v1h-1zM1629 347h1v1h-1zM1629 351h1v1h-1zM1629 356h1v1h-1zM1629 361h1v1h-1zM1629 365h1v1h-1zM1629 370h1v1h-1zM1629 375h1v1h-1zM1629 379h1v1h-1zM1629 384h1v1h-1zM1629 388h1v1h-1zM1629 393h1v1h-1zM1629 398h1v1h-1zM1629 402h1v1h-1zM1629 407h1v1h-1zM1629 412h1v1h-1zM1629 416h1v1h-1zM1629 421h1v1h-1zM1629 426h1v1h-1zM1629 430h1v1h-1zM1629 435h1v1h-1zM1629 440h1v1h-1zM1629 444h1v1h-1zM1629 449h1v1h-1zM1629 454h1v1h-1zM1629 458h1v1h-1zM1629 463h1v1h-1zM1629 467h1v1h-1zM1629 472h1v1h-1zM1629 477h1v1h-1zM1629 481h1v1h-1zM1629 486h1v1h-1zM1629 491h1v1h-1zM1629 495h1v1h-1zM1629 500h1v1h-1zM1629 505h1v1h-1zM1629 509h1v1h-1zM1629 514h1v1h-1zM1629 519h1v1h-1zM1629 525h1v1h-1zM1629 529h1v1h-1zM1629 534h1v1h-1zM1629 539h1v1h-1zM1629 543h1v1h-1zM1629 548h1v1h-1zM1629 553h1v1h-1zM1629 557h1v1h-1zM1629 562h1v1h-1zM1629 567h1v1h-1zM1629 571h1v1h-1zM1629 576h1v1h-1zM1629 581h1v1h-1zM1629 585h1v1h-1zM1629 590h1v1h-1zM1629 594h1v1h-1zM1629 599h1v1h-1zM1629 604h1v1h-1zM1629 608h1v1h-1zM1629 613h1v1h-1zM1629 618h1v1h-1zM1629 622h1v1h-1zM1629 627h1v1h-1zM1629 632h1v1h-1zM1629 636h1v1h-1zM1629 641h1v1h-1zM1629 646h1v1h-1zM1629 650h1v1h-1zM1629 655h1v1h-1zM1629 659h1v1h-1zM1629 664h1v1h-1zM1629 669h1v1h-1zM1629 673h1v1h-1zM1629 678h1v1h-1zM1629 683h1v1h-1zM1629 687h1v1h-1zM1629 692h1v1h-1zM1629 697h1v1h-1zM1629 701h1v1h-1zM1629 706h1v1h-1zM1629 711h1v1h-1zM1629 715h1v1h-1zM1629 720h1v1h-1zM1629 725h1v1h-1zM1629 729h1v1h-1zM1629 734h1v1h-1zM1629 738h1v1h-1zM1629 743h1v1h-1zM1629 748h1v1h-1zM1629 752h1v1h-1zM1629 763h1v1h-1zM1629 768h1v1h-1zM1629 772h1v1h-1zM1629 777h1v1h-1zM1629 782h1v1h-1zM1629 786h1v1h-1zM1629 791h1v1h-1zM1629 796h1v1h-1zM1629 800h1v1h-1zM1629 805h1v1h-1zM1629 810h1v1h-1zM1629 814h1v1h-1zM1629 819h1v1h-1zM1629 823h1v1h-1zM1629 828h1v1h-1zM1629 833h1v1h-1zM1629 837h1v1h-1zM1629 842h1v1h-1zM1629 847h1v1h-1zM1629 851h1v1h-1zM1629 856h1v1h-1zM1629 861h1v1h-1zM1629 865h1v1h-1zM1629 870h1v1h-1zM1629 875h1v1h-1zM1629 879h1v1h-1zM1629 884h1v1h-1zM1629 888h1v1h-1zM1629 893h1v1h-1zM1629 898h1v1h-1zM1629 902h1v1h-1zM1629 907h1v1h-1zM1629 912h1v1h-1zM1629 916h1v1h-1zM1629 921h1v1h-1zM1629 926h1v1h-1zM1629 930h1v1h-1zM1629 935h1v1h-1zM1629 940h1v1h-1zM1629 944h1v1h-1zM1629 949h1v1h-1zM1629 954h1v1h-1zM1629 958h1v1h-1zM1629 963h1v1h-1zM1629 967h1v1h-1zM1629 972h1v1h-1zM1629 977h1v1h-1zM1629 981h1v1h-1zM1629 986h1v1h-1z" fill="#c8c8c8" shape-rendering="crispEdges"/><rect x="3" y="289" width="1748" height="2" fill="#7c7c7c"/><rect x="3" y="523" width="1748" height="2" fill="#7c7c7c"/><rect x="3" y="757" width="1748" height="2" fill="#7c7c7c"/><path d="M3 266h5v1h-5zM13 266h5v1h-5zM23 266h5v1h-5zM33 266h5v1h-5zM43 266h5v1h-5zM53 266h5v1h-5zM63 266h5v1h-5zM73 266h5v1h-5zM83 266h5v1h-5zM93 266h5v1h-5zM103 266h5v1h-5zM113 266h5v1h-5zM123 266h5v1h-5zM133 266h5v1h-5zM143 266h5v1h-5zM153 266h5v1h-5zM163 266h5v1h-5zM173 266h5v1h-5zM183 266h5v1h-5zM193 266h5v1h-5zM203 266h5v1h-5zM213 266h5v1h-5zM223 266h5v1h-5zM233 266h5v1h-5zM243 266h5v1h-5zM253 266h5v1h-5zM263 266h5v1h-5zM273 266h5v1h-5zM283 266h5v1h-5zM293 266h5v1h-5zM303 266h5v1h-5zM313 266h5v1h-5zM323 266h5v1h-5zM333 266h5v1h-5zM343 266h5v1h-5zM353 266h5v1h-5zM363 266h5v1h-5zM373 266h5v1h-5zM383 266h5v1h-5zM393 266h5v1h-5zM403 266h5v1h-5zM413 266h5v1h-5zM423 266h5v1h-5zM433 266h5v1h-5zM443 266h5v1h-5zM453 266h5v1h-5zM463 266h5v1h-5zM473 266h5v1h-5zM483 266h5v1h-5zM493 266h5v1h-5zM503 266h5v1h-5zM513 266h5v1h-5zM523 266h5v1h-5zM533 266h5v1h-5zM543 266h5v1h-5zM553 266h5v1h-5zM563 266h5v1h-5zM573 266h5v1h-5zM583 266h5v1h-5zM593 266h5v1h-5zM603 266h5v1h-5zM613 266h5v1h-5zM623 266h5v1h-5zM633 266h5v1h-5zM643 266h5v1h-5zM653 266h5v1h-5zM663 266h5v1h-5zM673 266h5v1h-5zM683 266h5v1h-5zM693 266h5v1h-5zM703 266h5v1h-5zM713 266h5v1h-5zM723 266h5v1h-5zM733 266h5v1h-5zM743 266h5v1h-5zM753 266h5v1h-5zM763 266h5v1h-5zM773 266h5v1h-5zM783 266h5v1h-5zM793 266h5v1h-5zM803 266h5v1h-5zM813 266h5v1h-5zM823 266h5v1h-5zM833 266h5v1h-5zM843 266h5v1h-5zM853 266h5v1h-5zM863 266h5v1h-5zM873 266h5v1h-5zM883 266h5v1h-5zM893 266h5v1h-5zM903 266h5v1h-5zM913 266h5v1h-5zM923 266h5v1h-5zM933 266h5v1h-5zM943 266h5v1h-5zM953 266h5v1h-5zM963 266h5v1h-5zM973 266h5v1h-5zM983 266h5v1h-5zM993 266h5v1h-5zM1003 266h5v1h-5zM1013 266h5v1h-5zM1023 266h5v1h-5zM1033 266h5v1h-5zM1043 266h5v1h-5zM1053 266h5v1h-5zM1063 266h5v1h-5zM1073 266h5v1h-5zM1083 266h5v1h-5zM1093 266h5v1h-5zM1103 266h5v1h-5zM1113 266h5v1h-5zM1123 266h5v1h-5zM1133 266h5v1h-5zM1143 266h5v1h-5zM1153 266h5v1h-5zM1163 266h5v1h-5zM1173 266h5v1h-5zM1183 266h5v1h-5zM1193 266h5v1h-5zM1203 266h5v1h-5zM1213 266h5v1h-5zM1223 266h5v1h-5zM1233 266h5v1h-5zM1243 266h5v1h-5zM1253 266h5v1h-5zM1263 266h5v1h-5zM1273 266h5v1h-5zM1283 266h5v1h-5zM1293 266h5v1h-5zM1303 266h5v1h-5zM1313 266h5v1h-5zM1323 266h5v1h-5zM1333 266h5v1h-5zM1343 266h5v1h-5zM1353 266h5v1h-5zM1363 266h5v1h-5zM1373 266h5v1h-5zM1383 266h5v1h-5zM1393 266h5v1h-5zM1403 266h5v1h-5zM1413 266h5v1h-5zM1423 266h5v1h-5zM1433 266h5v1h-5zM1443 266h5v1h-5zM1453 266h5v1h-5zM1463 266h5v1h-5zM1473 266h5v1h-5zM1483 266h5v1h-5zM1493 266h5v1h-5zM1503 266h5v1h-5zM1513 266h5v1h-5zM1523 266h5v1h-5zM1533 266h5v1h-5zM1543 266h5v1h-5zM1553 266h5v1h-5zM1563 266h5v1h-5zM1573 266h5v1h-5zM1583 266h5v1h-5zM1593 266h5v1h-5zM1603 266h5v1h-5zM1613 266h5v1h-5zM1623 266h5v1h-5zM1633 266h5v1h-5zM1643 266h5v1h-5zM1653 266h5v1h-5zM1663 266h5v1h-5zM1673 266h5v1h-5zM1683 266h5v1h-5zM1693 266h5v1h-5zM1703 266h5v1h-5zM1713 266h5v1h-5zM3 430h5v1h-5zM13 430h5v1h-5zM23 430h5v1h-5zM33 430h5v1h-5zM43 430h5v1h-5zM53 430h5v1h-5zM63 430h5v1h-5zM73 430h5v1h-5zM83 430h5v1h-5zM93 430h5v1h-5zM103 430h5v1h-5zM113 430h5v1h-5zM123 430h5v1h-5zM133 430h5v1h-5zM143 430h5v1h-5zM153 430h5v1h-5zM163 430h5v1h-5zM173 430h5v1h-5zM183 430h5v1h-5zM193 430h5v1h-5zM203 430h5v1h-5zM213 430h5v1h-5zM223 430h5v1h-5zM233 430h5v1h-5zM243 430h5v1h-5zM253 430h5v1h-5zM263 430h5v1h-5zM273 430h5v1h-5zM283 430h5v1h-5zM293 430h5v1h-5zM303 430h5v1h-5zM313 430h5v1h-5zM323 430h5v1h-5zM333 430h5v1h-5zM343 430h5v1h-5zM353 430h5v1h-5zM363 430h5v1h-5zM373 430h5v1h-5zM383 430h5v1h-5zM393 430h5v1h-5zM403 430h5v1h-5zM413 430h5v1h-5zM423 430h5v1h-5zM433 430h5v1h-5zM443 430h5v1h-5zM453 430h5v1h-5zM463 430h5v1h-5zM473 430h5v1h-5zM483 430h5v1h-5zM493 430h5v1h-5zM503 430h5v1h-5zM513 430h5v1h-5zM523 430h5v1h-5zM533 430h5v1h-5zM543 430h5v1h-5zM553 430h5v1h-5zM563 430h5v1h-5zM573 430h5v1h-5zM583 430h5v1h-5zM593 430h5v1h-5zM603 430h5v1h-5zM613 430h5v1h-5zM623 430h5v1h-5zM633 430h5v1h-5zM643 430h5v1h-5zM653 430h5v1h-5zM663 430h5v1h-5zM673 430h5v1h-5zM683 430h5v1h-5zM693 430h5v1h-5zM703 430h5v1h-5zM713 430h5v1h-5zM723 430h5v1h-5zM733 430h5v1h-5zM743 430h5v1h-5zM753 430h5v1h-5zM763 430h5v1h-5zM773 430h5v1h-5zM783 430h5v1h-5zM793 430h5v1h-5zM803 430h5v1h-5zM813 430h5v1h-5zM823 430h5v1h-5zM833 430h5v1h-5zM843 430h5v1h-5zM853 430h5v1h-5zM863 430h5v1h-5zM873 430h5v1h-5zM883 430h5v1h-5zM893 430h5v1h-5zM903 430h5v1h-5zM913 430h5v1h-5zM923 430h5v1h-5zM933 430h5v1h-5zM943 430h5v1h-5zM953 430h5v1h-5zM963 430h5v1h-5zM973 430h5v1h-5zM983 430h5v1h-5zM993 430h5v1h-5zM1003 430h5v1h-5zM1013 430h5v1h-5zM1023 430h5v1h-5zM1033 430h5v1h-5zM1043 430h5v1h-5zM1053 430h5v1h-5zM1063 430h5v1h-5zM1073 430h5v1h-5zM1083 430h5v1h-5zM1093 430h5v1h-5zM1103 430h5v1h-5zM1113 430h5v1h-5zM1123 430h5v1h-5zM1133 430h5v1h-5zM1143 430h5v1h-5zM1153 430h5v1h-5zM1163 430h5v1h-5zM1173 430h5v1h-5zM1183 430h5v1h-5zM1193 430h5v1h-5zM1203 430h5v1h-5zM1213 430h5v1h-5zM1223 430h5v1h-5zM1233 430h5v1h-5zM1243 430h5v1h-5zM1253 430h5v1h-5zM1263 430h5v1h-5zM1273 430h5v1h-5zM1283 430h5v1h-5zM1293 430h5v1h-5zM1303 430h5v1h-5zM1313 430h5v1h-5zM1323 430h5v1h-5zM1333 430h5v1h-5zM1343 430h5v1h-5zM1353 430h5v1h-5zM1363 430h5v1h-5zM1373 430h5v1h-5zM1383 430h5v1h-5zM1393 430h5v1h-5zM1403 430h5v1h-5zM1413 430h5v1h-5zM1423 430h5v1h-5zM1433 430h5v1h-5zM1443 430h5v1h-5zM1453 430h5v1h-5zM1463 430h5v1h-5zM1473 430h5v1h-5zM1483 430h5v1h-5zM1493 430h5v1h-5zM1503 430h5v1h-5zM1513 430h5v1h-5zM1523 430h5v1h-5zM1533 430h5v1h-5zM1543 430h5v1h-5zM1553 430h5v1h-5zM1563 430h5v1h-5zM1573 430h5v1h-5zM1583 430h5v1h-5zM1593 430h5v1h-5zM1603 430h5v1h-5zM1613 430h5v1h-5zM1623 430h5v1h-5zM1633 430h5v1h-5zM1643 430h5v1h-5zM1653 430h5v1h-5zM1663 430h5v1h-5zM1673 430h5v1h-5zM1683 430h5v1h-5zM1693 430h5v1h-5zM1703 430h5v1h-5zM1713 430h5v1h-5zM3 734h5v1h-5zM13 734h5v1h-5zM23 734h5v1h-5zM33 734h5v1h-5zM43 734h5v1h-5zM53 734h5v1h-5zM63 734h5v1h-5zM73 734h5v1h-5zM83 734h5v1h-5zM93 734h5v1h-5zM103 734h5v1h-5zM113 734h5v1h-5zM123 734h5v1h-5zM133 734h5v1h-5zM143 734h5v1h-5zM153 734h5v1h-5zM163 734h5v1h-5zM173 734h5v1h-5zM183 734h5v1h-5zM193 734h5v1h-5zM203 734h5v1h-5zM213 734h5v1h-5zM223 734h5v1h-5zM233 734h5v1h-5zM243 734h5v1h-5zM253 734h5v1h-5zM263 734h5v1h-5zM273 734h5v1h-5zM283 734h5v1h-5zM293 734h5v1h-5zM303 734h5v1h-5zM313 734h5v1h-5zM323 734h5v1h-5zM333 734h5v1h-5zM343 734h5v1h-5zM353 734h5v1h-5zM363 734h5v1h-5zM373 734h5v1h-5zM383 734h5v1h-5zM393 734h5v1h-5zM403 734h5v1h-5zM413 734h5v1h-5zM423 734h5v1h-5zM433 734h5v1h-5zM443 734h5v1h-5zM453 734h5v1h-5zM463 734h5v1h-5zM473 734h5v1h-5zM483 734h5v1h-5zM493 734h5v1h-5zM503 734h5v1h-5zM513 734h5v1h-5zM523 734h5v1h-5zM533 734h5v1h-5zM543 734h5v1h-5zM553 734h5v1h-5zM563 734h5v1h-5zM573 734h5v1h-5zM583 734h5v1h-5zM593 734h5v1h-5zM603 734h5v1h-5zM613 734h5v1h-5zM623 734h5v1h-5zM633 734h5v1h-5zM643 734h5v1h-5zM653 734h5v1h-5zM663 734h5v1h-5zM673 734h5v1h-5zM683 734h5v1h-5zM693 734h5v1h-5zM703 734h5v1h-5zM713 734h5v1h-5zM723 734h5v1h-5zM733 734h5v1h-5zM743 734h5v1h-5zM753 734h5v1h-5zM763 734h5v1h-5zM773 734h5v1h-5zM783 734h5v1h-5zM793 734h5v1h-5zM803 734h5v1h-5zM813 734h5v1h-5zM823 734h5v1h-5zM833 734h5v1h-5zM843 734h5v1h-5zM853 734h5v1h-5zM863 734h5v1h-5zM873 734h5v1h-5zM883 734h5v1h-5zM893 734h5v1h-5zM903 734h5v1h-5zM913 734h5v1h-5zM923 734h5v1h-5zM933 734h5v1h-5zM943 734h5v1h-5zM953 734h5v1h-5zM963 734h5v1h-5zM973 734h5v1h-5zM983 734h5v1h-5zM993 734h5v1h-5zM1003 734h5v1h-5zM1013 734h5v1h-5zM1023 734h5v1h-5zM1033 734h5v1h-5zM1043 734h5v1h-5zM1053 734h5v1h-5zM1063 734h5v1h-5zM1073 734h5v1h-5zM1083 734h5v1h-5zM1093 734h5v1h-5zM1103 734h5v1h-5zM1113 734h5v1h-5zM1123 734h5v1h-5zM1133 734h5v1h-5zM1143 734h5v1h-5zM1153 734h5v1h-5zM1163 734h5v1h-5zM1173 734h5v1h-5zM1183 734h5v1h-5zM1193 734h5v1h-5zM1203 734h5v1h-5zM1213 734h5v1h-5zM1223 734h5v1h-5zM1233 734h5v1h-5zM1243 734h5v1h-5zM1253 734h5v1h-5zM1263 734h5v1h-5zM1273 734h5v1h-5zM1283 734h5v1h-5zM1293 734h5v1h-5zM1303 734h5v1h-5zM1313 734h5v1h-5zM1323 734h5v1h-5zM1333 734h5v1h-5zM1343 734h5v1h-5zM1353 734h5v1h-5zM1363 734h5v1h-5zM1373 734h5v1h-5zM1383 734h5v1h-5zM1393 734h5v1h-5zM1403 734h5v1h-5zM1413 734h5v1h-5zM1423 734h5v1h-5zM1433 734h5v1h-5zM1443 734h5v1h-5zM1453 734h5v1h-5zM1463 734h5v1h-5zM1473 734h5v1h-5zM1483 734h5v1h-5zM1493 734h5v1h-5zM1503 734h5v1h-5zM1513 734h5v1h-5zM1523 734h5v1h-5zM1533 734h5v1h-5zM1543 734h5v1h-5zM1553 734h5v1h-5zM1563 734h5v1h-5zM1573 734h5v1h-5zM1583 734h5v1h-5zM1593 734h5v1h-5zM1603 734h5v1h-5zM1613 734h5v1h-5zM1623 734h5v1h-5zM1633 734h5v1h-5zM1643 734h5v1h-5zM1653 734h5v1h-5zM1663 734h5v1h-5zM1673 734h5v1h-5zM1683 734h5v1h-5zM1693 734h5v1h-5zM1703 734h5v1h-5zM1713 734h5v1h-5zM3 963h5v1h-5zM13 963h5v1h-5zM23 963h5v1h-5zM33 963h5v1h-5zM43 963h5v1h-5zM53 963h5v1h-5zM63 963h5v1h-5zM73 963h5v1h-5zM83 963h5v1h-5zM93 963h5v1h-5zM103 963h5v1h-5zM113 963h5v1h-5zM123 963h5v1h-5zM133 963h5v1h-5zM143 963h5v1h-5zM153 963h5v1h-5zM163 963h5v1h-5zM173 963h5v1h-5zM183 963h5v1h-5zM193 963h5v1h-5zM203 963h5v1h-5zM213 963h5v1h-5zM223 963h5v1h-5zM233 963h5v1h-5zM243 963h5v1h-5zM253 963h5v1h-5zM263 963h5v1h-5zM273 963h5v1h-5zM283 963h5v1h-5zM293 963h5v1h-5zM303 963h5v1h-5zM313 963h5v1h-5zM323 963h5v1h-5zM333 963h5v1h-5zM343 963h5v1h-5zM353 963h5v1h-5zM363 963h5v1h-5zM373 963h5v1h-5zM383 963h5v1h-5zM393 963h5v1h-5zM403 963h5v1h-5zM413 963h5v1h-5zM423 963h5v1h-5zM433 963h5v1h-5zM443 963h5v1h-5zM453 963h5v1h-5zM463 963h5v1h-5zM473 963h5v1h-5zM483 963h5v1h-5zM493 963h5v1h-5zM503 963h5v1h-5zM513 963h5v1h-5zM523 963h5v1h-5zM533 963h5v1h-5zM543 963h5v1h-5zM553 963h5v1h-5zM563 963h5v1h-5zM573 963h5v1h-5zM583 963h5v1h-5zM593 963h5v1h-5zM603 963h5v1h-5zM613 963h5v1h-5zM623 963h5v1h-5zM633 963h5v1h-5zM643 963h5v1h-5zM653 963h5v1h-5zM663 963h5v1h-5zM673 963h5v1h-5zM683 963h5v1h-5zM693 963h5v1h-5zM703 963h5v1h-5zM713 963h5v1h-5zM723 963h5v1h-5zM733 963h5v1h-5zM743 963h5v1h-5zM753 963h5v1h-5zM763 963h5v1h-5zM773 963h5v1h-5zM783 963h5v1h-5zM793 963h5v1h-5zM803 963h5v1h-5zM813 963h5v1h-5zM823 963h5v1h-5zM833 963h5v1h-5zM843 963h5v1h-5zM853 963h5v1h-5zM863 963h5v1h-5zM873 963h5v1h-5zM883 963h5v1h-5zM893 963h5v1h-5zM903 963h5v1h-5zM913 963h5v1h-5zM923 963h5v1h-5zM933 963h5v1h-5zM943 963h5v1h-5zM953 963h5v1h-5zM963 963h5v1h-5zM973 963h5v1h-5zM983 963h5v1h-5zM993 963h5v1h-5zM1003 963h5v1h-5zM1013 963h5v1h-5zM1023 963h5v1h-5zM1033 963h5v1h-5zM1043 963h5v1h-5zM1053 963h5v1h-5zM1063 963h5v1h-5zM1073 963h5v1h-5zM1083 963h5v1h-5zM1093 963h5v1h-5zM1103 963h5v1h-5zM1113 963h5v1h-5zM1123 963h5v1h-5zM1133 963h5v1h-5zM1143 963h5v1h-5zM1153 963h5v1h-5zM1163 963h5v1h-5zM1173 963h5v1h-5zM1183 963h5v1h-5zM1193 963h5v1h-5zM1203 963h5v1h-5zM1213 963h5v1h-5zM1223 963h5v1h-5zM1233 963h5v1h-5zM1243 963h5v1h-5zM1253 963h5v1h-5zM1263 963h5v1h-5zM1273 963h5v1h-5zM1283 963h5v1h-5zM1293 963h5v1h-5zM1303 963h5v1h-5zM1313 963h5v1h-5zM1323 963h5v1h-5zM1333 963h5v1h-5zM1343 963h5v1h-5zM1353 963h5v1h-5zM1363 963h5v1h-5zM1373 963h5v1h-5zM1383 963h5v1h-5zM1393 963h5v1h-5zM1403 963h5v1h-5zM1413 963h5v1h-5zM1423 963h5v1h-5zM1433 963h5v1h-5zM1443 963h5v1h-5zM1453 963h5v1h-5zM1463 963h5v1h-5zM1473 963h5v1h-5zM1483 963h5v1h-5zM1493 963h5v1h-5zM1503 963h5v1h-5zM1513 963h5v1h-5zM1523 963h5v1h-5zM1533 963h5v1h-5zM1543 963h5v1h-5zM1553 963h5v1h-5zM1563 963h5v1h-5zM1573 963h5v1h-5zM1583 963h5v1h-5zM1593 963h5v1h-5zM1603 963h5v1h-5zM1613 963h5v1h-5zM1623 963h5v1h-5zM1633 963h5v1h-5zM1643 963h5v1h-5zM1653 963h5v1h-5zM1663 963h5v1h-5zM1673 963h5v1h-5zM1683 963h5v1h-5zM1693 963h5v1h-5zM1703 963h5v1h-5zM1713 963h5v1h-5z" fill="#c6c6c6" shape-rendering="crispEdges"/><path d="M55 95h1v4h-1zM55 104h1v5h-1zM55 114h1v5h-1zM55 124h1v5h-1zM55 134h1v5h-1zM55 144h1v5h-1zM55 154h1v5h-1zM55 164h1v5h-1zM55 174h1v5h-1zM55 184h1v5h-1zM55 194h1v5h-1zM55 204h1v5h-1zM55 214h1v5h-1zM55 224h1v5h-1zM55 234h1v5h-1zM55 244h1v5h-1zM55 254h1v5h-1zM55 264h1v5h-1zM55 274h1v5h-1zM55 284h1v4h-1zM55 291h1v2h-1zM55 298h1v5h-1zM55 308h1v5h-1zM55 318h1v5h-1zM55 328h1v5h-1zM55 338h1v5h-1zM55 348h1v5h-1zM55 358h1v5h-1zM55 368h1v5h-1zM55 378h1v5h-1zM55 388h1v5h-1zM55 398h1v5h-1zM55 408h1v5h-1zM55 418h1v5h-1zM55 428h1v5h-1zM55 438h1v5h-1zM55 448h1v5h-1zM55 458h1v5h-1zM55 468h1v5h-1zM55 478h1v5h-1zM55 488h1v5h-1zM55 498h1v5h-1zM55 508h1v5h-1zM55 518h1v4h-1zM55 525h1v2h-1zM55 532h1v5h-1zM55 542h1v5h-1zM55 552h1v5h-1zM55 562h1v5h-1zM55 572h1v5h-1zM55 582h1v5h-1zM55 592h1v5h-1zM55 602h1v5h-1zM55 612h1v5h-1zM55 622h1v5h-1zM55 632h1v5h-1zM55 642h1v5h-1zM55 652h1v5h-1zM55 662h1v5h-1zM55 672h1v5h-1zM55 682h1v5h-1zM55 692h1v5h-1zM55 702h1v5h-1zM55 712h1v5h-1zM55 722h1v5h-1zM55 732h1v5h-1zM55 742h1v5h-1zM55 752h1v4h-1zM55 761h1v5h-1zM55 771h1v5h-1zM55 781h1v5h-1zM55 791h1v5h-1zM55 801h1v5h-1zM55 811h1v5h-1zM55 821h1v5h-1zM55 831h1v5h-1zM55 841h1v5h-1zM55 851h1v5h-1zM55 861h1v5h-1zM55 871h1v5h-1zM55 881h1v5h-1zM55 891h1v5h-1zM55 901h1v5h-1zM55 911h1v5h-1zM55 921h1v5h-1zM55 931h1v5h-1zM55 941h1v5h-1zM55 951h1v5h-1zM55 961h1v5h-1zM55 971h1v5h-1zM55 981h1v5h-1z" fill="#d2d2d2" shape-rendering="crispEdges"/><rect x="1714.6" y="72.5" width="36.4" height="16" fill="#000"/><rect x="1714.6" y="95.5" width="36.4" height="16" fill="#000"/><rect x="1714.6" y="119.5" width="36.4" height="16" fill="#000"/><rect x="1714.6" y="142.5" width="36.4" height="16" fill="#000"/><rect x="1714.6" y="165.5" width="36.4" height="16" fill="#000"/><rect x="1714.6" y="188.5" width="36.4" height="16" fill="#000"/><rect x="1714.6" y="211.5" width="36.4" height="16" fill="#000"/><rect x="1722.2" y="235.5" width="28.8" height="16" fill="#000"/><rect x="1722.2" y="258.5" width="28.8" height="16" fill="#000"/><rect x="1722.2" y="306.5" width="28.8" height="16" fill="#000"/><rect x="1695.7" y="329.5" width="55.3" height="16" fill="#000"/><rect x="1695.7" y="353.5" width="55.3" height="16" fill="#000"/><rect x="1695.7" y="376.5" width="55.3" height="16" fill="#000"/><rect x="1695.7" y="399.5" width="55.3" height="16" fill="#000"/><rect x="1722.2" y="422.5" width="28.8" height="16" fill="#000"/><rect x="1691.2" y="446.5" width="59.8" height="16" fill="#000"/><rect x="1691.2" y="469.5" width="59.8" height="16" fill="#000"/><rect x="1691.2" y="492.5" width="59.8" height="16" fill="#000"/><rect x="1670.0" y="540.5" width="81.0" height="16" fill="#000"/><rect x="1670.0" y="563.5" width="81.0" height="16" fill="#000"/><rect x="1670.0" y="586.5" width="81.0" height="16" fill="#000"/><rect x="1670.0" y="610.5" width="81.0" height="16" fill="#000"/><rect x="1670.0" y="633.5" width="81.0" height="16" fill="#000"/><rect x="1670.0" y="656.5" width="81.0" height="16" fill="#000"/><rect x="1670.0" y="679.5" width="81.0" height="16" fill="#000"/><rect x="1677.6" y="703.5" width="73.4" height="16" fill="#000"/><rect x="1723.2" y="726.5" width="27.8" height="16" fill="#000"/><rect x="1666.2" y="769.5" width="84.8" height="16" fill="#000"/><rect x="1666.2" y="792.5" width="84.8" height="16" fill="#000"/><rect x="1666.2" y="815.5" width="84.8" height="16" fill="#000"/><rect x="1666.2" y="839.5" width="84.8" height="16" fill="#000"/><rect x="1666.2" y="862.5" width="84.8" height="16" fill="#000"/><rect x="1666.2" y="885.5" width="84.8" height="16" fill="#000"/><rect x="1666.2" y="908.5" width="84.8" height="16" fill="#000"/><rect x="1681.3" y="932.5" width="69.7" height="16" fill="#000"/><rect x="1722.9" y="955.5" width="28.1" height="16" fill="#000"/><polyline points="3.0,264.6 4.5,264.6 6.0,264.6 7.5,264.6 9.0,264.6 10.5,264.6 12.0,264.6 13.5,264.6 15.0,264.6 16.5,264.6 18.0,264.6 19.5,264.6 21.0,264.6 22.5,264.6 24.0,264.6 25.5,264.6 27.0,264.6 28.5,264.6 30.0,264.6 31.5,264.6 33.0,264.6 34.5,264.6 36.0,264.6 37.5,264.6 39.0,264.6 40.5,264.6 42.0,264.6 43.5,264.6 45.0,264.6 46.5,264.6 48.0,264.6 49.5,264.6 51.0,264.6 52.5,264.6 54.0,264.6 55.5,264.6 57.0,264.6 58.5,264.6 60.0,264.6 62.0,263.0 64.0,264.2 66.0,265.5 67.5,265.5 69.0,265.4 70.5,265.4 72.0,265.4 73.5,265.3 75.0,265.3 76.5,265.3 78.0,265.2 79.6,265.2 81.1,265.2 82.6,265.1 84.1,265.1 85.6,265.1 87.1,265.0 88.6,265.0 90.1,264.9 91.6,264.9 93.1,264.9 94.6,264.8 96.1,264.8 97.6,264.8 99.1,264.7 100.6,264.7 102.2,264.7 103.7,264.6 105.2,264.6 106.7,264.6 108.2,264.5 109.7,264.5 111.2,264.5 112.7,264.4 114.2,264.4 115.0,260.8 117.5,255.0 119.2,253.8 120.8,252.5 122.5,251.2 124.2,250.0 126.7,246.2 128.8,245.6 130.8,245.0 132.7,242.7 134.6,240.4 136.1,240.0 137.7,239.6 139.2,239.2 140.8,237.4 142.5,235.6 144.2,235.1 145.8,234.7 147.5,234.2 149.6,232.3 151.7,230.4 153.6,229.4 155.6,228.5 157.5,227.5 159.4,227.1 161.4,226.7 163.3,226.2 165.0,224.8 166.7,223.3 168.4,222.6 170.0,222.0 171.7,221.3 173.3,220.7 175.0,220.0 176.7,219.4 178.3,218.8 180.0,218.3 181.6,217.7 183.3,217.1 185.0,216.7 186.7,216.3 188.3,215.8 190.0,215.4 191.7,215.0 193.4,214.6 195.0,214.2 196.7,213.7 198.3,213.3 200.0,212.9 201.7,212.5 203.3,212.1 205.0,211.6 206.6,211.2 208.3,210.8 210.0,210.5 211.7,210.2 213.3,209.8 215.0,209.5 216.7,209.2 218.3,208.8 220.0,208.3 221.7,208.3 223.3,208.3 225.0,208.3 226.7,210.5 228.3,212.8 230.0,215.0 231.7,217.2 233.3,219.3 235.0,221.5 236.7,222.0 238.3,222.4 240.0,222.9 241.7,223.3 243.3,223.6 245.0,224.0 246.5,224.3 248.0,224.7 249.5,225.0 251.0,225.4 252.5,225.7 254.4,226.6 256.4,227.4 258.3,228.3 259.8,228.7 261.3,229.2 262.9,229.6 264.4,230.0 265.9,230.4 267.4,230.9 268.9,231.3 270.4,231.7 272.0,232.1 273.5,232.6 275.0,233.0 276.6,233.4 278.1,233.8 279.7,234.1 281.2,234.5 282.8,234.9 284.4,235.2 285.9,235.6 287.5,236.0 289.1,236.0 290.6,236.0 292.2,236.0 293.8,236.0 295.3,236.0 296.9,236.0 298.4,236.0 300.0,235.4 301.5,236.3 303.0,236.6 304.5,235.9 306.1,236.0 307.6,236.0 309.1,236.3 310.6,236.7 312.1,235.7 313.6,235.1 315.2,236.2 316.7,236.1 318.2,236.6 319.7,235.5 321.2,235.8 322.7,236.4 324.2,235.8 325.8,236.9 327.3,237.4 328.8,235.9 330.3,235.2 331.8,235.9 333.3,237.0 334.8,236.4 336.4,235.8 337.9,236.0 339.4,235.2 340.9,235.3 342.4,235.7 343.9,236.1 345.5,235.7 347.0,235.5 348.5,235.4 350.0,235.9 351.5,235.8 353.0,235.1 354.5,236.6 356.1,236.7 357.6,237.0 359.1,236.1 360.6,237.5 362.1,237.9 363.6,236.4 365.2,236.1 366.7,236.9 368.2,237.3 369.7,238.0 371.2,237.2 372.7,237.8 374.2,237.7 375.8,236.7 377.3,237.0 378.8,237.8 380.3,238.2 381.8,237.5 383.3,237.4 384.8,236.0 386.4,235.8 387.9,237.1 389.4,236.8 390.9,236.0 392.4,236.6 393.9,237.3 395.5,237.6 397.0,237.0 398.5,236.8 400.0,236.9 401.5,237.6 403.1,237.2 404.6,236.6 406.2,236.5 407.7,235.2 409.2,234.5 410.8,235.9 412.3,237.4 413.8,236.9 415.4,236.1 416.9,235.0 418.5,235.4 420.0,236.9 421.5,237.0 423.1,236.3 424.6,236.9 426.2,235.2 427.7,235.2 429.2,236.5 430.8,235.9 432.3,235.2 433.8,234.3 435.4,234.6 436.9,236.0 438.5,233.6 440.0,234.9 441.5,235.5 443.0,236.0 444.5,235.7 446.0,235.7 447.5,234.8 449.0,234.4 450.5,233.7 452.0,232.0 453.5,233.8 455.0,233.7 456.5,232.3 458.0,232.6 459.5,232.6 461.0,232.1 462.5,231.8 464.0,232.2 465.5,232.6 467.0,232.8 468.5,232.2 470.0,230.4 471.5,230.0 473.1,229.4 474.6,230.4 476.2,231.7 477.7,232.0 479.2,232.0 480.8,231.9 482.3,229.7 483.8,230.5 485.4,230.2 486.9,227.7 488.5,226.1 490.0,225.1 491.7,227.3 493.3,226.5 495.0,225.4 496.7,226.7 498.3,226.2 500.0,224.8 501.5,224.5 503.1,225.8 504.6,225.0 506.2,224.9 507.7,226.6 509.2,226.4 510.8,225.8 512.3,226.0 513.8,224.4 515.4,224.9 516.9,225.3 518.5,224.6 520.0,224.4 521.5,226.4 523.1,226.4 524.6,225.7 526.2,226.3 527.7,227.2 529.2,225.6 530.8,224.8 532.3,224.8 533.8,226.2 535.4,225.5 536.9,226.6 538.5,227.1 540.0,227.0 541.5,226.1 543.1,227.7 544.6,228.0 546.2,227.4 547.7,226.4 549.2,227.0 550.8,226.7 552.3,227.0 553.8,226.5 555.4,227.1 556.9,225.9 558.5,225.9 560.0,227.7 561.5,228.3 563.0,227.1 564.5,227.9 566.0,226.8 567.5,227.9 569.0,227.9 570.5,227.0 572.0,226.1 573.5,225.0 575.0,226.7 576.5,225.4 578.0,226.7 579.5,227.7 581.0,227.2 582.5,225.8 584.0,226.9 585.5,227.8 587.0,227.4 588.5,226.7 590.0,226.0 591.5,225.8 593.0,225.4 594.5,226.5 596.0,226.5 597.5,226.0 599.0,225.6 600.5,226.9 602.0,226.7 603.5,227.2 605.0,227.1 606.5,228.6 608.0,229.5 609.5,227.7 611.0,227.4 612.5,227.6 614.0,229.6 615.5,230.1 617.0,229.3 618.5,228.7 620.0,229.6 621.5,230.5 623.1,231.1 624.6,229.9 626.2,230.8 627.7,230.7 629.2,230.1 630.8,231.1 632.3,229.7 633.8,230.3 635.4,228.9 636.9,228.5 638.5,230.2 640.0,229.2 641.5,230.2 643.1,230.3 644.6,230.9 646.2,230.0 647.7,229.5 649.2,229.2 650.8,230.5 652.3,230.5 653.8,231.4 655.4,231.7 656.9,229.9 658.5,230.1 660.0,229.0 661.5,227.9 663.0,227.2 664.5,228.8 666.0,229.1 667.5,229.2 669.0,227.8 670.5,227.6 672.0,227.7 673.5,226.5 675.0,226.3 676.6,225.6 678.1,225.0 679.7,225.3 681.2,227.1 682.8,227.3 684.4,228.4 685.9,227.8 687.5,227.2 689.1,228.3 690.6,229.0 692.2,227.4 693.8,228.3 695.3,227.4 696.9,227.1 698.4,229.1 700.0,227.9 701.5,227.8 703.0,229.7 704.5,229.2 706.1,228.2 707.6,227.8 709.1,227.8 710.6,229.2 712.1,228.2 713.6,229.8 715.2,229.3 716.7,230.5 718.2,231.0 719.7,229.7 721.2,228.9 722.7,229.1 724.2,228.3 725.8,229.3 727.3,228.2 728.8,227.7 730.3,229.9 731.8,229.3 733.3,229.7 734.8,229.6 736.4,229.2 737.9,228.4 739.4,230.2 740.9,231.2 742.4,231.8 743.9,229.8 745.5,229.1 747.0,229.9 748.5,231.2 750.0,230.7 751.6,231.0 753.1,231.1 754.7,230.2 756.2,230.5 757.8,230.1 759.4,229.8 760.9,229.3 762.5,229.7 764.1,231.7 765.6,231.4 767.2,231.8 768.8,232.1 770.3,233.1 771.9,232.2 773.4,231.6 775.0,231.4 776.7,230.9 778.3,231.9 780.0,232.3 781.7,230.8 783.3,230.0 785.0,229.9 786.5,230.4 788.0,230.8 789.5,230.3 791.0,229.5 792.5,229.8 794.0,229.7 795.5,231.0 797.0,230.5 798.5,231.4 800.0,234.5 801.7,228.2 803.2,228.1 804.7,228.0 806.2,228.0 807.7,227.9 809.2,227.8 810.7,227.8 812.2,227.7 813.8,227.6 816.6,229.3 818.2,228.9 819.8,228.4 821.3,228.0 822.9,227.6 825.2,237.9 827.2,238.4 829.2,239.0 831.0,234.4 832.7,229.9 834.3,228.9 835.9,227.9 837.4,226.9 839.0,225.9 840.6,225.8 842.1,225.7 843.7,225.6 845.3,225.5 848.1,235.0 849.6,233.8 851.1,232.5 852.6,231.2 854.1,230.0 855.6,228.8 857.3,229.3 859.6,238.5 861.3,236.9 863.0,235.3 864.8,233.8 866.5,232.2 868.4,229.7 870.3,227.2 872.2,224.7 874.1,224.3 876.0,224.0 877.9,223.6 879.0,237.9 879.6,264.8 880.8,225.3 883.6,212.7 885.9,222.5 887.1,215.0 888.8,215.0 890.5,215.0 891.7,229.3 892.8,209.3 895.1,207.0 897.4,221.9 899.7,211.6 902.6,212.1 903.7,224.2 905.4,208.7 906.9,209.5 908.5,210.2 910.0,211.0 911.5,213.3 913.1,215.6 914.6,217.9 916.3,218.5 918.0,219.0 919.7,219.6 921.5,229.9 923.4,227.8 925.3,225.7 927.2,223.6 928.8,223.6 930.4,223.6 932.0,223.6 933.6,223.6 935.2,223.6 936.9,232.8 938.5,230.9 940.0,229.1 941.6,227.2 943.2,225.3 944.7,225.1 946.3,224.9 947.8,224.7 949.0,228.8 949.5,266.6 950.7,223.0 952.4,209.3 953.5,218.4 955.8,195.5 957.0,205.8 959.3,189.2 960.4,194.4 962.7,182.3 965.6,190.4 966.7,174.3 969.6,182.3 971.3,171.5 974.2,177.2 976.5,192.1 978.2,194.9 979.9,197.8 981.6,209.3 983.2,210.3 984.8,211.3 986.3,212.3 987.9,213.3 989.0,211.6 990.5,213.5 992.1,215.4 993.6,217.3 995.9,215.0 997.9,217.3 999.9,219.6 1000.5,239.6 1001.7,213.3 1003.4,200.1 1005.1,183.5 1006.3,169.2 1007.4,160.0 1008.6,145.8 1010.2,140.5 1011.8,135.2 1013.9,113.9 1016.1,88.3 1017.1,67.0 1018.9,66.3 1020.6,65.6 1022.4,64.9 1024.2,62.4 1026.0,60.0 1027.8,57.5 1029.4,60.4 1031.0,63.4 1032.6,66.3 1034.2,69.2 1035.8,74.5 1037.3,79.8 1038.9,85.2 1040.5,90.5 1042.2,96.5 1043.9,102.4 1045.7,108.4 1047.4,114.3 1049.1,120.3 1050.6,125.5 1052.1,130.6 1053.6,135.8 1055.2,141.0 1056.7,146.2 1058.2,151.3 1059.7,156.5 1061.2,161.4 1062.8,166.2 1064.3,171.1 1065.8,175.9 1067.3,180.8 1068.9,185.6 1070.4,190.5 1071.9,194.2 1073.4,197.8 1074.9,201.5 1076.5,205.1 1078.0,208.8 1079.5,212.4 1081.0,216.1 1082.5,218.4 1084.0,220.7 1085.5,223.0 1087.1,225.2 1088.6,227.5 1090.1,229.8 1091.6,232.1 1093.1,233.5 1094.7,234.8 1096.2,236.2 1097.7,237.5 1099.2,238.9 1100.8,240.2 1102.3,241.6 1103.8,242.4 1105.3,243.1 1106.8,243.9 1108.4,244.7 1109.9,245.5 1111.4,246.2 1112.9,247.0 1114.4,247.3 1116.0,247.6 1117.5,247.9 1119.0,248.2 1120.5,248.5 1122.1,248.8 1123.6,249.1 1125.2,249.2 1126.9,249.4 1128.5,249.5 1130.2,249.7 1131.8,249.8 1133.4,250.0 1135.1,250.2 1136.7,250.3 1138.4,250.4 1140.0,250.6 1141.6,250.7 1143.2,250.9 1144.9,251.0 1146.5,251.1 1148.1,251.3 1149.8,251.4 1151.4,251.6 1153.0,251.7 1154.5,251.8 1156.0,251.8 1157.6,251.9 1159.1,251.9 1160.6,252.0 1162.1,252.0 1163.7,252.1 1165.2,252.1 1166.7,252.2 1168.2,252.2 1169.8,252.3 1171.3,252.3 1172.8,252.4 1174.3,252.4 1175.8,252.5 1177.4,252.5 1178.9,252.6 1180.4,252.6 1181.9,252.7 1183.5,252.7 1185.0,252.8 1186.5,252.8 1188.0,252.9 1189.5,253.0 1191.1,253.0 1192.6,253.1 1194.1,253.1 1195.6,253.2 1197.2,253.2 1198.7,253.3 1200.2,253.3 1201.7,253.4 1203.2,253.4 1204.8,253.5 1206.3,253.5 1207.8,253.6 1209.3,253.6 1210.9,253.7 1212.4,253.7 1213.9,253.8 1215.4,253.8 1217.0,253.9 1218.5,253.9 1220.0,254.0 1221.5,254.0 1223.0,254.1 1224.5,254.1 1226.1,254.1 1227.6,254.1 1229.1,254.2 1230.6,254.2 1232.1,254.2 1233.6,254.2 1235.2,254.3 1236.7,254.3 1238.2,254.3 1239.7,254.3 1241.2,254.4 1242.7,254.4 1244.2,254.4 1245.8,254.4 1247.3,254.5 1248.8,254.5 1250.3,254.5 1251.8,254.5 1253.3,254.6 1254.8,254.6 1256.4,254.6 1257.9,254.6 1259.4,254.7 1260.9,254.7 1262.4,254.7 1263.9,254.7 1265.5,254.8 1267.0,254.8 1268.5,254.8 1270.0,254.8 1271.5,254.9 1273.0,254.9 1274.5,254.9 1276.1,255.0 1277.6,255.0 1279.1,255.0 1280.6,255.0 1282.1,255.1 1283.6,255.1 1285.2,255.1 1286.7,255.1 1288.2,255.2 1289.7,255.2 1291.2,255.2 1292.7,255.2 1294.2,255.3 1295.8,255.3 1297.3,255.3 1298.8,255.3 1300.3,255.4 1301.8,255.4 1303.3,255.4 1304.8,255.4 1306.4,255.5 1307.9,255.5 1309.4,255.5 1310.9,255.5 1312.4,255.6 1313.9,255.6 1315.5,255.6 1317.0,255.6 1318.5,255.7 1320.0,255.7 1321.5,255.7 1323.0,255.7 1324.5,255.8 1326.1,255.8 1327.6,255.8 1329.1,255.8 1330.6,255.8 1332.1,255.9 1333.6,255.9 1335.2,255.9 1336.7,255.9 1338.2,255.9 1339.7,256.0 1341.2,256.0 1342.7,256.0 1344.2,256.0 1345.8,256.0 1347.3,256.1 1348.8,256.1 1350.3,256.1 1351.8,256.1 1353.3,256.1 1354.8,256.2 1356.4,256.2 1357.9,256.2 1359.4,256.2 1360.9,256.2 1362.4,256.3 1363.9,256.3 1365.5,256.3 1367.0,256.3 1368.5,256.3 1370.0,256.4 1371.5,256.4 1373.0,256.4 1374.5,256.4 1376.1,256.4 1377.6,256.4 1379.1,256.5 1380.6,256.5 1382.1,256.5 1383.6,256.5 1385.2,256.5 1386.7,256.6 1388.2,256.6 1389.7,256.6 1391.2,256.6 1392.7,256.6 1394.2,256.7 1395.8,256.7 1397.3,256.7 1398.8,256.7 1400.3,256.7 1401.8,256.8 1403.3,256.8 1404.8,256.8 1406.4,256.8 1407.9,256.8 1409.4,256.9 1410.9,256.9 1412.4,256.9 1413.9,256.9 1415.5,256.9 1417.0,257.0 1418.5,257.0 1420.0,257.0 1421.5,257.0 1423.0,257.0 1424.5,257.1 1426.1,257.1 1427.6,257.1 1429.1,257.1 1430.6,257.1 1432.1,257.2 1433.6,257.2 1435.2,257.2 1436.7,257.2 1438.2,257.2 1439.7,257.3 1441.2,257.3 1442.7,257.3 1444.2,257.3 1445.8,257.3 1447.3,257.4 1448.8,257.4 1450.3,257.4 1451.8,257.4 1453.3,257.4 1454.8,257.5 1456.4,257.5 1457.9,257.5 1459.4,257.5 1460.9,257.5 1462.4,257.6 1463.9,257.6 1465.5,257.6 1467.0,257.6 1468.5,257.6 1470.0,257.6 1471.5,257.7 1473.0,257.7 1474.5,257.7 1476.1,257.7 1477.6,257.7 1479.1,257.8 1480.6,257.8 1482.1,257.8 1483.6,257.8 1485.2,257.8 1486.7,257.9 1488.2,257.9 1489.7,257.9 1491.2,257.9 1492.7,257.9 1494.2,258.0 1495.8,258.0 1497.3,258.0 1498.8,258.0 1500.3,258.0 1501.8,258.1 1503.3,258.1 1504.8,258.1 1506.4,258.1 1507.9,258.1 1509.4,258.2 1510.9,258.2 1512.4,258.2 1513.9,258.2 1515.5,258.2 1517.0,258.3 1518.5,258.3 1520.0,258.3 1521.5,258.3 1523.0,258.3 1524.5,258.3 1526.1,258.4 1527.6,258.4 1529.1,258.4 1530.6,258.4 1532.1,258.4 1533.6,258.4 1535.2,258.5 1536.7,258.5 1538.2,258.5 1539.7,258.5 1541.2,258.5 1542.7,258.5 1544.2,258.5 1545.8,258.6 1547.3,258.6 1548.8,258.6 1550.3,258.6 1551.8,258.6 1553.3,258.6 1554.8,258.6 1556.4,258.7 1557.9,258.7 1559.4,258.7 1560.9,258.7 1562.4,258.7 1563.9,258.7 1565.5,258.8 1567.0,258.8 1568.5,258.8 1570.0,258.8 1571.5,258.8 1573.0,258.8 1574.5,258.8 1576.1,258.9 1577.6,258.9 1579.1,258.9 1580.6,258.9 1582.1,258.9 1583.6,258.9 1585.2,259.0 1586.7,259.0 1588.2,259.0 1589.7,259.0 1591.2,259.0 1592.7,259.0 1594.2,259.0 1595.8,259.1 1597.3,259.1 1598.8,259.1 1600.3,259.1 1601.8,259.1 1603.3,259.1 1604.8,259.1 1606.4,259.2 1607.9,259.2 1609.4,259.2 1610.9,259.2 1612.4,259.2 1613.9,259.2 1615.5,259.3 1617.0,259.3 1618.5,259.3 1620.0,259.3 1621.5,259.3 1623.0,259.3 1624.5,259.3 1626.0,259.3 1627.5,259.3 1629.0,259.3 1630.5,259.4 1632.0,259.4 1633.6,259.4 1635.1,259.4 1636.6,259.4 1638.1,259.4 1639.6,259.4 1641.1,259.4 1642.6,259.4 1644.1,259.4 1645.6,259.4 1647.1,259.4 1648.6,259.5 1650.1,259.5 1651.6,259.5 1653.1,259.5 1654.6,259.5 1656.1,259.5 1657.6,259.5 1659.1,259.5 1660.7,259.5 1662.2,259.5 1663.7,259.5 1665.2,259.5 1666.7,259.5 1668.2,259.6 1669.7,259.6 1671.2,259.6 1672.7,259.6 1674.2,259.6 1675.7,259.6 1677.2,259.6 1678.7,259.6 1680.2,259.6 1681.7,259.6 1683.2,259.6 1684.7,259.6 1686.3,259.7 1687.8,259.7 1689.3,259.7 1690.8,259.7 1692.3,259.7 1693.8,259.7 1695.3,259.7 1696.8,259.7 1698.3,259.7 1699.8,259.7 1701.3,259.7 1702.8,259.7 1704.3,259.8 1705.8,259.8 1707.3,259.8 1708.8,259.8 1710.3,259.8 1711.9,259.8 1713.4,259.8 1714.9,259.8 1716.4,259.8 1717.9,259.8 1719.4,259.8 1720.9,259.8 1722.4,259.8 1723.9,259.9 1725.4,259.9 1726.9,259.9 1728.4,259.9 1729.9,259.9 1731.4,259.9 1732.9,259.9 1734.4,259.9 1735.9,259.9 1737.4,259.9 1739.0,259.9 1740.5,259.9 1742.0,260.0 1743.5,260.0 1745.0,260.0 1746.5,260.0 1748.0,260.0 1749.5,260.0 1751.0,260.0" fill="none" stroke="#fff01c" stroke-width="1.3" stroke-linejoin="round" shape-rendering="crispEdges"/><polyline points="3.0,429.8 5.0,430.0 7.0,429.2 9.0,428.8 11.0,429.4 13.0,429.6 15.1,429.6 17.1,429.3 19.1,429.4 21.1,429.5 23.1,429.5 25.1,429.0 27.1,429.1 29.1,429.1 31.1,429.4 33.1,429.9 35.1,430.0 37.2,429.7 39.2,429.4 41.2,429.1 43.2,428.8 45.2,428.6 47.2,428.9 49.2,428.9 51.2,429.0 53.2,429.5 55.2,429.4 57.2,429.4 59.2,429.1 61.3,428.7 63.3,428.8 65.3,428.7 67.3,429.0 69.3,429.7 71.3,429.7 73.3,429.2 75.3,429.6 77.3,429.8 79.3,429.8 81.3,429.9 83.4,429.9 85.4,429.9 87.4,429.4 89.4,429.9 91.4,430.0 93.4,429.3 95.4,429.6 97.4,429.6 99.4,429.4 101.4,429.4 103.4,429.3 105.5,429.7 107.5,429.5 109.5,429.7 111.5,429.4 113.5,429.7 115.5,429.9 117.5,429.6 119.5,429.5 121.5,429.8 123.5,429.8 125.5,429.5 127.6,429.1 129.6,429.0 131.6,429.4 133.6,429.0 135.6,429.6 137.6,429.2 139.6,429.7 141.6,429.3 143.6,429.8 145.6,429.7 147.6,429.5 149.7,429.4 151.7,429.5 153.7,429.5 155.7,429.2 157.7,429.0 159.7,429.1 161.7,429.7 163.7,429.6 165.7,429.0 167.7,429.5 169.7,429.6 171.8,429.9 173.8,429.3 175.8,429.5 177.8,429.0 179.8,429.3 181.8,429.1 183.8,428.9 185.8,429.5 187.8,429.0 189.8,429.2 191.8,429.6 193.8,429.2 195.9,429.0 197.9,429.5 199.9,429.3 201.9,429.5 203.9,428.9 205.9,429.0 207.9,428.8 209.9,429.2 211.9,428.8 213.9,429.5 215.9,428.9 218.0,429.3 220.0,428.8 222.0,428.8 224.0,429.4 226.0,429.0 228.0,429.3 230.3,428.0 232.7,426.8 235.0,425.5 237.3,424.3 239.7,423.2 242.0,422.0 244.0,420.9 246.0,419.8 248.0,418.6 250.0,417.5 252.0,416.1 254.0,414.8 256.0,413.4 258.0,412.0 260.3,410.3 262.7,408.7 265.0,407.0 267.5,405.3 270.0,403.6 272.5,402.6 275.0,401.5 277.0,401.4 279.0,401.2 281.0,401.1 283.0,400.9 285.0,400.8 287.1,400.8 289.3,400.8 291.4,400.8 293.6,400.8 295.7,400.8 297.9,400.8 300.0,400.8 302.1,400.9 304.3,401.1 306.4,401.3 308.6,401.5 310.7,401.6 312.9,401.8 315.0,402.0 317.1,402.0 319.2,402.1 321.2,402.1 323.3,402.2 325.4,402.2 327.5,402.2 329.6,402.3 331.7,402.3 333.8,402.4 335.8,402.4 337.9,402.5 340.0,402.5 342.1,402.7 344.3,402.9 346.4,403.1 348.6,403.4 350.7,403.6 352.9,403.8 355.0,404.0 357.1,404.1 359.2,404.2 361.2,404.3 363.3,404.4 365.4,404.5 367.5,404.6 369.6,404.7 371.7,404.8 373.8,404.9 375.8,405.0 377.9,405.1 380.0,405.2 382.0,405.2 384.0,405.2 386.0,405.2 388.0,405.2 390.0,405.2 392.0,405.2 394.0,405.2 396.0,405.2 398.0,405.2 400.0,405.2 402.0,405.2 404.0,405.2 406.0,405.2 408.0,405.2 410.0,405.2 412.0,405.2 414.0,405.2 416.0,405.2 418.0,405.2 420.0,405.2 422.0,405.2 424.0,405.2 426.0,405.2 428.0,405.2 430.0,405.2 432.0,404.9 434.0,404.6 436.0,404.4 438.0,404.1 440.0,403.8 442.0,403.7 444.0,403.6 446.0,403.5 448.0,403.4 450.0,403.4 452.0,403.3 454.0,403.2 456.0,403.1 458.0,403.1 460.0,403.0 462.0,403.0 464.0,402.9 466.0,402.9 468.0,402.9 470.0,402.8 472.0,402.8 474.0,402.7 476.0,402.7 478.0,402.7 480.0,402.6 482.0,402.6 484.0,402.6 486.0,402.5 488.0,402.5 490.0,402.4 492.0,402.4 494.0,402.4 496.0,402.3 498.0,402.3 500.0,402.2 502.0,402.2 504.1,402.2 506.1,402.2 508.1,402.1 510.2,402.1 512.2,402.1 514.3,402.1 516.3,402.0 518.3,402.0 520.4,402.0 522.4,401.9 524.4,401.9 526.5,401.9 528.5,401.9 530.6,401.8 532.6,401.8 534.6,401.8 536.7,401.8 538.7,401.7 540.7,401.7 542.8,401.7 544.8,401.6 546.9,401.6 548.9,401.6 550.9,401.6 553.0,401.5 555.0,401.5 557.0,401.5 559.0,401.4 561.1,401.4 563.1,401.4 565.1,401.4 567.1,401.3 569.1,401.3 571.2,401.3 573.2,401.2 575.2,401.2 577.2,401.2 579.2,401.2 581.2,401.1 583.3,401.1 585.3,401.1 587.3,401.0 589.3,401.0 591.3,401.0 593.4,401.0 595.4,400.9 597.4,400.9 599.4,400.9 601.4,400.8 603.5,400.8 605.5,400.8 607.5,400.8 609.5,400.7 611.5,400.7 613.6,400.7 615.6,400.6 617.6,400.6 619.6,400.6 621.6,400.5 623.7,400.5 625.7,400.5 627.7,400.5 629.7,400.4 631.7,400.4 633.8,400.4 635.8,400.3 637.8,400.3 639.8,400.3 641.8,400.3 643.8,400.2 645.9,400.2 647.9,400.2 649.9,400.1 651.9,400.1 653.9,400.1 656.0,400.1 658.0,400.0 660.0,400.0 662.0,400.0 664.0,399.9 666.0,399.9 668.0,399.9 670.0,399.9 672.0,399.9 674.0,399.8 676.0,399.8 678.0,399.8 680.0,399.8 682.0,399.7 684.0,399.7 686.0,399.7 688.0,399.6 690.0,399.6 692.0,399.6 694.0,399.6 696.0,399.6 698.0,399.5 700.0,399.5 702.0,399.5 704.0,399.4 706.0,399.4 708.0,399.4 710.0,399.4 712.0,399.4 714.0,399.3 716.0,399.3 718.0,399.3 720.0,399.2 722.1,399.6 724.3,399.9 726.4,400.2 728.6,400.5 730.7,400.9 732.9,401.2 735.0,401.5 737.0,401.6 739.0,401.6 741.0,401.7 743.0,401.8 745.0,401.9 747.0,401.9 749.0,402.0 751.0,402.1 753.0,402.2 755.0,402.2 757.0,402.3 759.0,402.4 761.0,402.5 763.0,402.6 765.0,402.6 767.0,402.7 769.0,402.8 771.0,402.9 773.0,402.9 775.0,403.0 777.1,402.7 779.2,402.3 781.2,402.0 783.3,401.7 785.4,401.3 787.5,401.0 789.6,400.7 791.7,400.3 793.8,400.0 795.8,399.7 797.9,399.3 800.0,399.0 802.0,399.4 804.0,399.7 806.0,400.1 808.0,400.4 810.0,400.8 812.0,401.1 814.0,401.4 816.0,401.8 818.0,402.1 820.0,402.5 822.0,402.4 824.0,402.2 826.0,402.1 828.0,401.9 830.0,401.8 832.0,401.6 834.0,401.4 836.0,401.3 838.0,401.1 840.0,401.0 842.0,401.4 844.0,401.8 846.0,402.2 848.0,402.6 850.0,403.0 852.0,402.8 854.0,402.7 856.0,402.5 858.0,402.4 860.0,402.2 862.9,401.4 865.8,400.5 868.3,400.5 870.8,400.5 873.3,400.5 874.2,401.3 876.7,401.3 879.2,401.3 881.7,397.2 885.0,396.7 887.1,396.7 889.2,396.8 891.4,396.8 893.5,396.9 895.6,396.9 897.7,397.0 899.8,397.0 901.9,397.1 904.1,397.1 906.2,397.2 908.3,397.2 910.8,398.2 913.3,399.2 915.4,399.8 917.5,400.3 919.6,400.3 921.7,400.4 923.8,400.4 925.8,400.4 927.9,400.5 930.0,400.5 933.3,401.3 935.8,400.9 938.3,400.5 940.8,400.9 943.3,401.3 945.5,401.3 947.8,401.3 950.0,401.3 951.7,396.7 954.2,396.2 956.7,395.8 958.7,395.8 960.8,395.8 962.8,395.8 964.8,395.8 966.9,395.8 968.9,395.8 970.9,395.8 973.0,395.8 975.0,395.8 977.2,396.6 979.5,397.5 981.7,398.3 983.9,398.3 986.1,398.3 988.4,398.3 990.6,398.3 992.8,398.3 995.0,398.3 997.5,398.9 1000.0,399.5 1002.9,396.4 1005.8,393.3 1008.0,393.2 1010.3,393.1 1012.5,393.0 1015.8,392.5 1018.8,393.8 1021.7,395.0 1023.9,396.4 1026.1,397.8 1028.3,399.2 1030.3,400.9 1032.3,402.5 1034.3,404.2 1036.3,405.8 1038.3,407.5 1040.6,408.5 1043.0,409.5 1045.3,410.5 1047.7,411.5 1050.0,412.5 1052.0,413.3 1054.0,414.0 1056.0,414.8 1058.0,415.5 1060.0,416.3 1062.1,416.9 1064.2,417.4 1066.3,418.0 1068.3,418.6 1070.4,419.1 1072.5,419.7 1074.6,420.2 1076.7,420.8 1078.7,421.1 1080.7,421.5 1082.7,421.8 1084.7,422.2 1086.7,422.5 1088.7,422.8 1090.7,423.2 1092.7,423.5 1094.7,423.9 1096.7,424.2 1098.7,424.4 1100.8,424.6 1102.8,424.9 1104.8,425.1 1106.9,425.3 1108.9,425.5 1110.9,425.8 1113.0,426.0 1115.0,426.2 1117.0,426.3 1119.0,426.5 1121.0,426.6 1123.0,426.7 1125.0,426.9 1127.0,427.0 1129.0,427.1 1131.0,427.2 1133.0,427.4 1135.0,427.5 1137.2,427.6 1139.3,427.7 1141.5,427.7 1143.7,427.8 1145.8,427.9 1148.0,428.0 1150.2,428.1 1152.4,428.1 1154.5,428.2 1156.7,428.3 1158.8,428.3 1160.9,428.4 1163.1,428.4 1165.2,428.4 1167.3,428.5 1169.4,428.5 1171.5,428.6 1173.6,428.6 1175.8,428.6 1177.9,428.7 1180.0,428.7 1182.0,428.3 1184.0,428.7 1186.0,428.6 1188.0,428.4 1190.0,428.9 1192.0,428.6 1194.0,428.4 1196.0,428.5 1198.0,428.7 1200.0,428.9 1202.0,428.6 1204.0,428.6 1206.0,428.4 1208.0,428.6 1210.0,428.9 1212.0,429.0 1214.0,429.2 1216.0,429.2 1218.0,429.3 1220.0,429.2 1222.0,429.0 1224.0,428.8 1226.0,428.9 1228.0,428.8 1230.0,428.6 1232.0,428.7 1234.0,429.1 1236.0,428.8 1238.0,428.9 1240.0,428.9 1242.0,428.9 1244.0,428.7 1246.0,429.2 1248.0,428.9 1250.0,429.0 1252.0,429.0 1254.0,428.7 1256.0,428.9 1258.0,428.7 1260.0,428.6 1262.0,428.5 1264.0,428.5 1266.0,428.5 1268.0,428.9 1270.0,429.0 1272.0,429.4 1274.0,429.5 1276.0,429.7 1278.0,429.2 1280.0,429.1 1282.0,429.0 1284.0,429.1 1286.0,429.2 1288.0,429.4 1290.0,429.4 1292.0,429.1 1294.0,429.1 1296.0,429.2 1298.0,428.8 1300.0,428.7 1302.0,428.9 1304.0,428.8 1306.0,429.1 1308.0,429.0 1310.0,428.8 1312.0,428.8 1314.0,428.8 1316.0,428.8 1318.0,429.0 1320.0,429.1 1322.0,429.0 1324.1,429.2 1326.1,429.0 1328.1,429.4 1330.1,429.6 1332.1,429.6 1334.1,429.3 1336.1,429.3 1338.1,429.3 1340.1,428.9 1342.1,429.0 1344.1,429.1 1346.1,428.9 1348.1,428.8 1350.1,429.2 1352.1,429.1 1354.1,429.2 1356.1,429.5 1358.1,429.4 1360.1,429.2 1362.1,429.5 1364.1,429.3 1366.1,428.9 1368.2,429.2 1370.2,428.9 1372.2,428.9 1374.2,429.3 1376.2,429.4 1378.2,429.0 1380.2,429.1 1382.2,429.1 1384.2,429.1 1386.2,429.0 1388.2,429.2 1390.2,428.9 1392.2,428.9 1394.2,429.0 1396.2,429.4 1398.2,429.0 1400.2,429.3 1402.2,429.0 1404.2,429.2 1406.2,429.1 1408.2,429.2 1410.2,429.4 1412.2,429.2 1414.3,429.0 1416.3,428.8 1418.3,428.7 1420.3,429.2 1422.3,429.3 1424.3,429.6 1426.3,429.5 1428.3,429.1 1430.3,429.3 1432.3,429.4 1434.3,429.5 1436.3,429.4 1438.3,429.2 1440.3,429.2 1442.3,429.4 1444.3,429.2 1446.3,429.2 1448.3,429.2 1450.3,429.5 1452.3,429.6 1454.3,429.7 1456.3,429.7 1458.4,429.3 1460.4,429.1 1462.4,429.2 1464.4,429.0 1466.4,429.1 1468.4,429.3 1470.4,429.6 1472.4,429.5 1474.4,429.6 1476.4,429.1 1478.4,429.1 1480.4,429.5 1482.4,429.1 1484.4,429.1 1486.4,428.9 1488.4,428.8 1490.4,429.3 1492.4,429.6 1494.4,429.5 1496.4,429.1 1498.4,429.0 1500.4,429.0 1502.4,429.2 1504.5,429.4 1506.5,429.3 1508.5,429.3 1510.5,429.0 1512.5,429.1 1514.5,429.5 1516.5,429.6 1518.5,429.1 1520.5,429.2 1522.5,429.4 1524.5,429.1 1526.5,429.5 1528.5,429.3 1530.5,429.4 1532.5,429.3 1534.5,429.6 1536.5,429.6 1538.5,429.5 1540.5,429.1 1542.5,429.1 1544.5,428.9 1546.5,429.1 1548.6,429.5 1550.6,429.1 1552.6,429.2 1554.6,429.2 1556.6,429.2 1558.6,429.4 1560.6,429.6 1562.6,429.6 1564.6,429.4 1566.6,429.7 1568.6,429.3 1570.6,429.5 1572.6,429.5 1574.6,429.6 1576.6,429.7 1578.6,429.3 1580.6,429.3 1582.6,429.2 1584.6,429.4 1586.6,429.6 1588.6,429.6 1590.6,429.1 1592.6,429.1 1594.7,429.4 1596.7,429.6 1598.7,429.5 1600.7,429.6 1602.7,429.1 1604.7,429.5 1606.7,429.5 1608.7,429.5 1610.7,429.7 1612.7,429.7 1614.7,429.2 1616.7,429.5 1618.7,429.6 1620.7,429.2 1622.7,429.4 1624.7,429.4 1626.7,429.1 1628.7,429.4 1630.7,429.1 1632.7,429.3 1634.7,429.2 1636.7,429.1 1638.8,429.2 1640.8,429.2 1642.8,429.0 1644.8,429.5 1646.8,429.1 1648.8,428.8 1650.8,429.0 1652.8,429.4 1654.8,429.4 1656.8,429.5 1658.8,429.4 1660.8,429.5 1662.8,429.3 1664.8,429.1 1666.8,429.2 1668.8,428.9 1670.8,428.8 1672.8,429.2 1674.8,429.0 1676.8,429.3 1678.8,429.5 1680.8,429.3 1682.8,429.4 1684.9,429.6 1686.9,429.7 1688.9,429.2 1690.9,429.0 1692.9,429.1 1694.9,429.2 1696.9,429.1 1698.9,428.8 1700.9,429.1 1702.9,429.5 1704.9,429.3 1706.9,429.3 1708.9,429.2 1710.9,429.2 1712.9,429.5 1714.9,429.3 1716.9,429.4 1718.9,429.3 1720.9,429.3 1722.9,429.6 1724.9,429.2 1726.9,429.5 1729.0,429.2 1731.0,429.4 1733.0,429.5 1735.0,429.5 1737.0,429.3 1739.0,429.6 1741.0,429.1 1743.0,429.3 1745.0,429.2 1747.0,429.3 1749.0,429.5 1751.0,429.6" fill="none" stroke="#8cd030" stroke-width="1.3" stroke-linejoin="round" shape-rendering="crispEdges"/><polyline points="3.0,734.2 6.0,734.2" fill="none" stroke="#e98a26" stroke-width="1.4" stroke-linejoin="round" shape-rendering="crispEdges"/><polyline points="42.0,734.2 55.0,734.2 62.5,731.2 71.2,729.3 82.9,726.7 97.0,723.6 112.8,720.1 129.4,716.5 146.1,712.8 162.3,709.2 177.2,706.0 190.0,703.2 200.0,701.0 206.7,699.5 210.6,698.7 212.3,698.3 212.8,698.2 212.7,698.2 212.7,698.3 213.7,698.1 216.4,697.6 221.6,696.6 230.0,695.0 241.6,692.7 255.7,689.9 271.8,686.8 289.6,683.3 308.4,679.6 328.0,675.7 347.9,671.9 367.7,668.1 386.8,664.4 405.0,661.0 422.5,657.8 440.0,654.5 457.5,651.3 475.0,648.1 492.5,645.0 510.0,641.9 527.5,638.8 545.0,635.8 562.5,632.9 580.0,630.0 597.5,627.2 615.0,624.4 632.5,621.7 650.0,619.0 667.5,616.4 685.0,613.8 702.5,611.3 720.0,608.8 737.5,606.4 755.0,604.0 773.1,601.6 792.0,599.2 811.4,596.8 831.0,594.5 850.3,592.2 869.0,590.0 886.7,588.0 903.0,586.1 917.6,584.4 930.0,583.0 939.7,581.9 946.8,581.1 951.8,580.5 955.4,580.1 958.1,579.9 960.6,579.6 963.4,579.4 967.2,579.1 972.5,578.7 980.0,578.0 989.2,577.2 999.4,576.3 1010.4,575.3 1022.2,574.2 1034.7,573.1 1047.8,572.0 1061.5,570.8 1075.6,569.7 1090.1,568.5 1105.0,567.4 1120.5,566.2 1136.8,565.0 1153.8,563.8 1171.4,562.5 1189.4,561.2 1207.6,559.9 1225.9,558.7 1244.2,557.6 1262.3,556.5 1280.0,555.6 1297.5,554.8 1315.0,554.0 1332.5,553.3 1350.0,552.7 1367.5,552.1 1385.0,551.6 1402.5,551.2 1420.0,550.7 1437.5,550.4 1455.0,550.0 1473.1,549.7 1492.2,549.4 1511.8,549.3 1531.6,549.1 1551.1,549.0 1569.9,548.9 1587.6,548.9 1603.8,548.8 1618.0,548.8 1630.0,548.7 1639.5,548.6 1647.0,548.6 1652.7,548.5 1656.9,548.5 1659.9,548.5 1662.1,548.5 1663.7,548.4 1665.0,548.4 1666.4,548.4 1668.0,548.4 1670.0,550.4 1751.0,550.4" fill="none" stroke="#e98a26" stroke-width="1.3" stroke-linejoin="round" shape-rendering="crispEdges"/><polyline points="41.0,963.4 43.0,963.4 45.0,963.4 47.0,963.4 49.0,963.4 51.0,963.4 53.0,963.4 55.0,963.4 57.0,963.4 59.0,963.4 61.0,963.4 63.0,963.4 65.0,963.4 67.0,963.4 69.0,963.4 71.0,963.4 73.0,963.4 75.0,963.4 77.0,963.4 79.0,963.4 81.0,963.4 83.0,963.4 85.0,963.4 87.0,963.4 89.0,963.4 91.0,963.4 93.0,963.4 95.0,963.4 97.0,963.4 99.0,963.4 101.0,963.4 103.0,963.4 105.0,963.4 107.0,963.4 109.0,963.4 111.0,963.4 113.0,963.4 115.0,963.4 117.5,964.7 120.0,966.0 122.0,966.0 124.0,966.0 126.0,966.0 128.0,966.0 130.0,965.9 132.0,965.9 134.0,965.9 136.0,965.9 138.0,965.9 140.0,965.9 142.0,965.9 144.0,965.9 146.0,965.8 148.0,965.8 150.0,965.8 152.0,965.8 154.0,965.8 156.0,965.8 158.0,965.8 160.0,965.8 162.0,965.7 164.0,965.7 166.0,965.7 168.0,965.7 170.0,965.7 172.0,965.7 174.0,965.7 176.0,965.6 178.0,965.6 180.0,965.6 182.0,965.6 184.0,965.6 186.0,965.6 188.0,965.6 190.0,965.6 192.0,965.5 194.0,965.5 196.0,965.5 198.0,965.5 200.0,965.5 202.1,965.3 204.3,965.1 206.4,964.9 208.6,964.6 210.7,964.4 212.9,964.2 215.0,964.0 217.2,963.9 219.3,963.8 221.5,963.7 223.7,963.6 225.8,963.5 228.0,963.4 230.0,960.0 232.0,957.7 234.0,956.2 236.0,954.3 238.0,952.8 240.0,951.2 242.1,949.5 244.2,948.1 246.2,948.5 248.3,947.2 250.4,946.1 252.5,946.5 254.6,945.4 256.7,945.0 258.8,943.8 260.8,943.1 262.9,941.4 265.0,941.0 267.0,940.8 269.0,939.6 271.0,939.0 273.0,938.1 275.0,936.2 277.0,936.0 279.0,935.2 281.0,933.8 283.0,932.2 285.0,932.4 287.0,931.4 289.0,930.9 291.0,930.5 293.0,929.6 295.0,929.0 297.0,927.4 299.1,927.0 301.1,925.8 303.2,925.7 305.3,925.2 307.3,923.2 309.4,921.9 311.5,921.0 313.5,921.5 315.6,920.5 317.7,919.9 319.7,918.7 321.8,918.1 323.9,917.2 325.9,916.3 328.0,916.0 330.1,915.4 332.1,915.3 334.2,914.5 336.3,914.2 338.3,913.5 340.4,913.1 342.5,911.9 344.5,910.1 346.6,910.0 348.7,909.8 350.7,909.2 352.8,908.0 354.9,907.2 356.9,905.6 359.0,905.5 361.0,904.7 363.1,903.5 365.1,902.1 367.2,902.5 369.2,902.7 371.3,900.8 373.3,900.8 375.3,899.7 377.4,898.4 379.4,897.7 381.5,897.8 383.5,897.8 385.6,895.9 387.6,895.7 389.7,894.2 391.7,894.3 393.7,893.4 395.8,893.6 397.8,893.5 399.9,892.3 401.9,892.2 404.0,890.6 406.0,889.1 408.0,889.1 410.1,887.9 412.1,887.4 414.2,887.3 416.2,887.5 418.3,886.5 420.3,885.6 422.3,886.4 424.4,885.6 426.4,886.2 428.5,886.1 430.5,884.9 432.6,884.3 434.6,883.9 436.7,883.7 438.7,883.3 440.7,882.8 442.8,882.5 444.8,882.7 446.9,881.8 448.9,881.0 451.0,880.9 453.0,879.8 455.0,879.0 457.1,879.7 459.1,878.9 461.2,878.3 463.2,876.9 465.3,876.6 467.3,876.5 469.3,875.3 471.4,875.4 473.4,875.3 475.5,874.0 477.5,874.1 479.6,873.7 481.6,873.6 483.7,872.7 485.7,872.7 487.7,872.5 489.8,870.8 491.8,869.8 493.9,870.2 495.9,870.7 498.0,869.4 500.0,868.9 502.0,868.7 504.1,867.9 506.1,867.4 508.2,866.9 510.2,866.5 512.3,866.6 514.3,865.9 516.3,865.4 518.4,865.8 520.4,864.4 522.5,864.5 524.5,864.6 526.6,863.7 528.6,862.9 530.7,863.4 532.7,862.4 534.7,861.6 536.8,861.5 538.8,861.7 540.9,860.5 542.9,860.1 545.0,859.8 547.0,860.3 549.1,859.6 551.1,859.9 553.2,858.6 555.2,858.0 557.3,858.1 559.4,858.4 561.4,857.5 563.5,856.5 565.6,855.6 567.6,855.7 569.7,855.0 571.8,855.5 573.8,855.6 575.9,854.3 577.9,853.6 580.0,854.0 582.1,853.9 584.1,854.1 586.2,853.2 588.3,852.3 590.3,852.0 592.4,852.7 594.5,852.0 596.5,851.6 598.6,851.5 600.7,851.3 602.7,851.1 604.8,851.8 606.9,850.7 608.9,849.8 611.0,850.9 613.0,850.7 615.0,850.5 617.0,849.0 619.0,848.9 621.0,848.4 623.0,846.6 625.0,846.2 627.0,845.9 629.0,845.3 631.1,844.6 633.1,843.6 635.2,843.0 637.2,842.3 639.3,841.4 641.3,841.7 643.3,841.1 645.4,841.6 647.4,840.2 649.5,840.9 651.5,840.6 653.6,840.7 655.6,840.5 657.7,840.2 659.7,839.3 661.7,837.6 663.8,837.8 665.8,836.7 667.9,836.2 669.9,836.4 672.0,836.0 674.0,835.5 676.0,836.0 678.0,835.6 680.0,834.7 682.0,834.0 684.0,834.5 686.0,834.0 688.0,834.1 690.0,833.2 692.0,832.4 694.0,832.4 696.0,832.8 698.0,831.7 700.0,832.1 702.0,832.4 704.0,832.1 706.0,831.9 708.0,830.2 710.0,830.3 712.0,830.6 714.0,829.2 716.0,828.7 718.0,828.3 720.0,828.4 722.0,828.0 724.1,827.7 726.1,827.9 728.2,826.4 730.2,825.6 732.3,825.1 734.3,824.6 736.3,824.1 738.4,825.2 740.4,825.4 742.5,823.9 744.5,823.7 746.6,823.0 748.6,822.5 750.7,822.1 752.7,822.2 754.7,822.0 756.8,821.3 758.8,820.4 760.9,820.0 762.9,819.2 765.0,819.4 767.0,819.6 769.0,818.6 771.0,817.2 773.0,816.4 775.0,816.0 777.0,815.8 779.0,816.2 781.0,815.6 783.0,815.9 785.0,815.7 787.0,815.1 789.0,814.6 791.0,814.5 793.0,814.7 795.0,814.2 797.0,814.3 799.0,813.9 801.0,813.2 803.0,813.2 805.0,813.5 807.0,812.4 809.0,812.4 811.0,812.3 813.0,812.9 815.0,813.3 817.0,812.4 819.0,812.7 821.0,812.6 823.0,811.5 825.5,808.2 828.0,804.3 830.2,806.2 832.5,807.4 834.8,808.9 837.0,810.0 839.0,810.0 841.0,810.3 843.0,810.3 845.0,809.5 848.0,803.9 850.3,804.1 852.7,804.9 855.0,806.9 857.5,803.0 860.0,799.4 862.1,800.2 864.3,802.5 866.4,802.8 868.6,803.1 870.7,805.2 872.9,805.4 875.0,807.3 877.0,796.8 879.0,786.4 880.0,801.8 882.0,806.8 884.0,812.4 886.0,808.5 888.0,806.6 890.0,803.9 893.0,814.2 895.5,810.4 898.0,808.2 900.3,811.1 902.7,812.1 905.0,814.2 907.0,813.8 909.0,813.6 911.0,812.0 913.0,810.7 915.0,809.8 917.3,808.2 919.7,806.6 922.0,804.0 924.0,804.9 926.0,806.0 928.0,807.1 930.2,805.5 932.5,803.3 934.8,802.2 937.0,801.6 939.0,802.2 941.0,803.5 943.0,803.6 945.0,805.2 947.0,794.3 949.0,783.1 951.0,807.3 953.2,811.8 955.5,816.6 957.8,821.8 960.0,825.4 962.0,827.6 964.0,831.3 966.0,834.8 968.0,837.3 970.0,839.8 972.0,837.6 974.0,834.3 976.0,831.5 978.0,828.7 980.0,826.7 982.0,825.6 984.0,824.5 986.0,824.3 988.0,824.2 990.0,822.5 992.0,822.3 994.0,821.3 996.0,821.3 998.0,820.5 1000.0,819.4 1001.0,810.0 1003.0,828.8 1005.3,840.2 1007.7,851.6 1010.0,863.0 1012.5,877.0 1015.0,891.0 1018.0,916.0 1020.3,922.3 1022.7,928.7 1025.0,935.0 1027.5,941.2 1030.0,947.5 1032.0,948.9 1034.0,950.3 1036.0,951.6 1038.0,953.0 1040.0,954.4 1042.0,954.8 1044.0,955.1 1046.0,955.5 1048.0,955.9 1050.0,956.2 1052.0,956.6 1054.0,956.9 1056.0,957.3 1058.0,957.7 1060.0,958.0 1062.0,958.4 1064.1,958.9 1066.2,959.4 1068.3,959.9 1070.4,960.3 1072.5,960.8 1074.5,961.3 1076.6,961.8 1078.7,962.3 1080.8,962.8 1082.9,963.3 1085.0,963.8 1087.0,964.0 1089.0,964.2 1091.0,964.4 1093.0,964.7 1095.0,964.9 1097.0,965.1 1099.0,965.4 1101.0,965.6 1103.0,965.8 1105.0,966.1 1107.0,966.3 1109.0,966.5 1111.0,966.7 1113.0,967.0 1115.0,967.2 1117.0,967.2 1119.1,967.2 1121.1,967.3 1123.1,967.3 1125.2,967.3 1127.2,967.3 1129.2,967.3 1131.2,967.4 1133.3,967.4 1135.3,967.4 1137.3,967.4 1139.4,967.4 1141.4,967.4 1143.4,967.5 1145.5,967.5 1147.5,967.5 1149.5,967.5 1151.6,967.5 1153.6,967.6 1155.6,967.6 1157.7,967.6 1159.7,967.6 1161.7,967.6 1163.8,967.6 1165.8,967.7 1167.8,967.7 1169.8,967.7 1171.9,967.7 1173.9,967.7 1175.9,967.8 1178.0,967.8 1180.0,967.8 1182.0,967.9 1184.0,967.7 1186.0,967.4 1188.0,967.6 1190.0,967.6 1192.0,967.5 1194.0,967.5 1196.0,967.5 1198.0,967.8 1200.0,967.6 1202.0,967.9 1204.0,967.8 1206.0,967.8 1208.0,967.8 1210.0,967.9 1212.0,968.0 1214.0,967.9 1216.0,967.8 1218.0,967.9 1220.0,968.0 1222.0,967.8 1224.0,967.9 1226.0,968.1 1228.0,967.8 1230.0,967.6 1232.0,967.5 1234.0,967.7 1236.0,967.8 1238.0,968.0 1240.0,968.0 1242.0,967.7 1244.0,967.5 1246.0,967.4 1248.0,967.3 1250.0,967.6 1252.0,967.8 1254.0,968.0 1256.0,967.6 1258.0,967.8 1260.0,967.6 1262.0,967.6 1264.0,967.7 1266.0,967.4 1268.0,967.2 1270.0,967.6 1272.0,967.5 1274.0,967.4 1276.0,967.5 1278.0,967.6 1280.0,967.3 1282.0,967.3 1284.0,967.4 1286.0,967.5 1288.0,967.3 1290.0,967.5 1292.0,967.8 1294.0,967.6 1296.0,967.6 1298.0,967.3 1300.0,967.3 1302.0,967.5 1304.0,967.2 1306.0,967.6 1308.0,967.8 1310.0,967.4 1312.0,967.7 1314.0,967.5 1316.0,967.6 1318.0,967.7 1320.0,967.4 1322.0,967.6 1324.0,967.6 1326.0,967.7 1328.0,967.4 1330.0,967.6 1332.0,967.8 1334.0,967.7 1336.0,967.6 1338.0,967.3 1340.0,967.3 1342.0,967.3 1344.0,967.5 1346.0,967.5 1348.0,967.5 1350.0,967.2 1352.0,967.4 1354.0,967.5 1356.0,967.2 1358.0,967.5 1360.0,967.5 1362.0,967.2 1364.0,967.5 1366.0,967.2 1368.0,967.2 1370.0,967.4 1372.0,967.4 1374.0,967.4 1376.0,967.4 1378.0,967.3 1380.0,967.2 1382.0,967.1 1384.0,966.9 1386.0,967.2 1388.0,967.4 1390.0,967.4 1392.0,967.5 1394.0,967.3 1396.0,967.1 1398.0,967.1 1400.0,967.4 1402.0,967.0 1404.0,967.1 1406.0,967.0 1408.0,967.3 1410.0,967.2 1412.0,967.1 1414.0,967.1 1416.0,967.2 1418.0,967.3 1420.0,967.2 1422.0,967.4 1424.0,967.1 1426.0,967.0 1428.0,966.8 1430.0,966.8 1432.0,967.1 1434.0,967.3 1436.0,967.0 1438.0,966.9 1440.0,967.0 1442.0,967.2 1444.0,967.4 1446.0,967.4 1448.0,967.3 1450.0,967.0 1452.0,967.0 1454.0,966.9 1456.0,967.0 1458.0,967.1 1460.0,966.9 1462.0,966.9 1464.0,967.1 1466.0,966.8 1468.0,967.1 1470.0,967.3 1472.0,967.5 1474.0,967.2 1476.0,967.2 1478.0,967.2 1480.0,967.2 1482.0,967.4 1484.0,967.3 1486.0,967.1 1488.0,967.3 1490.0,967.1 1492.0,967.1 1494.0,967.2 1496.0,966.8 1498.0,967.1 1500.0,967.0 1502.0,967.0 1504.0,967.0 1506.0,967.0 1508.0,967.0 1510.0,967.0 1512.0,967.0 1514.1,967.0 1516.1,967.0 1518.1,966.9 1520.1,966.9 1522.1,966.9 1524.1,966.9 1526.1,966.9 1528.1,966.9 1530.1,966.9 1532.1,966.9 1534.1,966.9 1536.1,966.9 1538.2,966.9 1540.2,966.9 1542.2,966.9 1544.2,966.9 1546.2,966.9 1548.2,966.9 1550.2,966.9 1552.2,966.9 1554.2,966.8 1556.2,966.8 1558.2,966.8 1560.2,966.8 1562.2,966.8 1564.3,966.8 1566.3,966.8 1568.3,966.8 1570.3,966.8 1572.3,966.8 1574.3,966.8 1576.3,966.8 1578.3,966.8 1580.3,966.8 1582.3,966.8 1584.3,966.8 1586.3,966.8 1588.4,966.8 1590.4,966.7 1592.4,966.7 1594.4,966.7 1596.4,966.7 1598.4,966.7 1600.4,966.7 1602.4,966.7 1604.4,966.7 1606.4,966.7 1608.4,966.7 1610.4,966.7 1612.4,966.7 1614.5,966.7 1616.5,966.7 1618.5,966.7 1620.5,966.7 1622.5,966.7 1624.5,966.7 1626.5,966.6 1628.5,966.6 1630.5,966.6 1632.5,966.6 1634.5,966.6 1636.5,966.6 1638.6,966.6 1640.6,966.6 1642.6,966.6 1644.6,966.6 1646.6,966.6 1648.6,966.6 1650.6,966.6 1652.6,966.6 1654.6,966.6 1656.6,966.6 1658.6,966.6 1660.6,966.6 1662.6,966.5 1664.7,966.5 1666.7,966.5 1668.7,966.5 1670.7,966.5 1672.7,966.5 1674.7,966.5 1676.7,966.5 1678.7,966.5 1680.7,966.5 1682.7,966.5 1684.7,966.5 1686.7,966.5 1688.8,966.5 1690.8,966.5 1692.8,966.5 1694.8,966.5 1696.8,966.5 1698.8,966.4 1700.8,966.4 1702.8,966.4 1704.8,966.4 1706.8,966.4 1708.8,966.4 1710.8,966.4 1712.8,966.4 1714.9,966.4 1716.9,966.4 1718.9,966.4 1720.9,966.4 1722.9,966.4 1724.9,966.4 1726.9,966.4 1728.9,966.4 1730.9,966.4 1732.9,966.4 1734.9,966.3 1736.9,966.3 1739.0,966.3 1741.0,966.3 1743.0,966.3 1745.0,966.3 1747.0,966.3 1749.0,966.3 1751.0,966.3" fill="none" stroke="#7a2e96" stroke-width="1.3" stroke-linejoin="round" shape-rendering="crispEdges"/></g><text x="1746.6" y="85.40" font-family="Liberation Sans" font-size="13.6" fill="#ece22c" text-anchor="end" font-weight="normal" >40 V</text><text x="1746.6" y="108.40" font-family="Liberation Sans" font-size="13.6" fill="#ece22c" text-anchor="end" font-weight="normal" >35 V</text><text x="1746.6" y="132.40" font-family="Liberation Sans" font-size="13.6" fill="#ece22c" text-anchor="end" font-weight="normal" >30 V</text><text x="1746.6" y="155.40" font-family="Liberation Sans" font-size="13.6" fill="#ece22c" text-anchor="end" font-weight="normal" >25 V</text><text x="1746.6" y="178.40" font-family="Liberation Sans" font-size="13.6" fill="#ece22c" text-anchor="end" font-weight="normal" >20 V</text><text x="1746.6" y="201.40" font-family="Liberation Sans" font-size="13.6" fill="#ece22c" text-anchor="end" font-weight="normal" >15 V</text><text x="1746.6" y="224.40" font-family="Liberation Sans" font-size="13.6" fill="#ece22c" text-anchor="end" font-weight="normal" >10 V</text><text x="1746.6" y="248.40" font-family="Liberation Sans" font-size="13.6" fill="#ece22c" text-anchor="end" font-weight="normal" >5 V</text><text x="1746.6" y="271.40" font-family="Liberation Sans" font-size="13.6" fill="#ece22c" text-anchor="end" font-weight="normal" >0 V</text><text x="1746.6" y="319.40" font-family="Liberation Sans" font-size="13.6" fill="#8cd03c" text-anchor="end" font-weight="normal" >1 V</text><text x="1746.6" y="342.40" font-family="Liberation Sans" font-size="13.6" fill="#8cd03c" text-anchor="end" font-weight="normal" >800 mV</text><text x="1746.6" y="366.40" font-family="Liberation Sans" font-size="13.6" fill="#8cd03c" text-anchor="end" font-weight="normal" >600 mV</text><text x="1746.6" y="389.40" font-family="Liberation Sans" font-size="13.6" fill="#8cd03c" text-anchor="end" font-weight="normal" >400 mV</text><text x="1746.6" y="412.40" font-family="Liberation Sans" font-size="13.6" fill="#8cd03c" text-anchor="end" font-weight="normal" >200 mV</text><text x="1746.6" y="435.40" font-family="Liberation Sans" font-size="13.6" fill="#8cd03c" text-anchor="end" font-weight="normal" >0 V</text><text x="1746.6" y="459.40" font-family="Liberation Sans" font-size="13.6" fill="#8cd03c" text-anchor="end" font-weight="normal" >-200 mV</text><text x="1746.6" y="482.40" font-family="Liberation Sans" font-size="13.6" fill="#8cd03c" text-anchor="end" font-weight="normal" >-400 mV</text><text x="1746.6" y="505.40" font-family="Liberation Sans" font-size="13.6" fill="#8cd03c" text-anchor="end" font-weight="normal" >-600 mV</text><text x="1746.6" y="553.40" font-family="Liberation Sans" font-size="13.6" fill="#ee922e" text-anchor="end" font-weight="normal" >526.348 mT</text><text x="1746.6" y="576.40" font-family="Liberation Sans" font-size="13.6" fill="#ee922e" text-anchor="end" font-weight="normal" >460.554 mT</text><text x="1746.6" y="599.40" font-family="Liberation Sans" font-size="13.6" fill="#ee922e" text-anchor="end" font-weight="normal" >394.761 mT</text><text x="1746.6" y="623.40" font-family="Liberation Sans" font-size="13.6" fill="#ee922e" text-anchor="end" font-weight="normal" >328.967 mT</text><text x="1746.6" y="646.40" font-family="Liberation Sans" font-size="13.6" fill="#ee922e" text-anchor="end" font-weight="normal" >263.174 mT</text><text x="1746.6" y="669.40" font-family="Liberation Sans" font-size="13.6" fill="#ee922e" text-anchor="end" font-weight="normal" >197.380 mT</text><text x="1746.6" y="692.40" font-family="Liberation Sans" font-size="13.6" fill="#ee922e" text-anchor="end" font-weight="normal" >131.587 mT</text><text x="1746.6" y="716.40" font-family="Liberation Sans" font-size="13.6" fill="#ee922e" text-anchor="end" font-weight="normal" >65.793 mT</text><text x="1746.6" y="739.40" font-family="Liberation Sans" font-size="13.6" fill="#ee922e" text-anchor="end" font-weight="normal" >0 T</text><text x="1746.6" y="782.40" font-family="Liberation Sans" font-size="13.6" fill="#8a42ae" text-anchor="end" font-weight="normal" >7.724072 kA</text><text x="1746.6" y="805.40" font-family="Liberation Sans" font-size="13.6" fill="#8a42ae" text-anchor="end" font-weight="normal" >6.758563 kA</text><text x="1746.6" y="828.40" font-family="Liberation Sans" font-size="13.6" fill="#8a42ae" text-anchor="end" font-weight="normal" >5.793054 kA</text><text x="1746.6" y="852.40" font-family="Liberation Sans" font-size="13.6" fill="#8a42ae" text-anchor="end" font-weight="normal" >4.827545 kA</text><text x="1746.6" y="875.40" font-family="Liberation Sans" font-size="13.6" fill="#8a42ae" text-anchor="end" font-weight="normal" >3.862036 kA</text><text x="1746.6" y="898.40" font-family="Liberation Sans" font-size="13.6" fill="#8a42ae" text-anchor="end" font-weight="normal" >2.896527 kA</text><text x="1746.6" y="921.40" font-family="Liberation Sans" font-size="13.6" fill="#8a42ae" text-anchor="end" font-weight="normal" >1.931018 kA</text><text x="1746.6" y="945.40" font-family="Liberation Sans" font-size="13.6" fill="#8a42ae" text-anchor="end" font-weight="normal" >965.509 A</text><text x="1746.6" y="968.40" font-family="Liberation Sans" font-size="13.6" fill="#8a42ae" text-anchor="end" font-weight="normal" >0 A</text><text x="55.1" y="986.00" font-family="Liberation Sans" font-size="13" fill="#bebebe" text-anchor="middle" font-weight="normal" >0 s</text><text x="230.0" y="986.00" font-family="Liberation Sans" font-size="13" fill="#bebebe" text-anchor="middle" font-weight="normal" >3 ms</text><text x="404.9" y="986.00" font-family="Liberation Sans" font-size="13" fill="#bebebe" text-anchor="middle" font-weight="normal" >6 ms</text><text x="579.7" y="986.00" font-family="Liberation Sans" font-size="13" fill="#bebebe" text-anchor="middle" font-weight="normal" >9 ms</text><text x="754.6" y="986.00" font-family="Liberation Sans" font-size="13" fill="#bebebe" text-anchor="middle" font-weight="normal" >12 ms</text><text x="929.5" y="986.00" font-family="Liberation Sans" font-size="13" fill="#bebebe" text-anchor="middle" font-weight="normal" >15 ms</text><text x="1104.4" y="986.00" font-family="Liberation Sans" font-size="13" fill="#bebebe" text-anchor="middle" font-weight="normal" >18 ms</text><text x="1279.2" y="986.00" font-family="Liberation Sans" font-size="13" fill="#bebebe" text-anchor="middle" font-weight="normal" >21 ms</text><text x="1454.1" y="986.00" font-family="Liberation Sans" font-size="13" fill="#bebebe" text-anchor="middle" font-weight="normal" >24 ms</text><text x="1629.0" y="986.00" font-family="Liberation Sans" font-size="13" fill="#bebebe" text-anchor="middle" font-weight="normal" >27 ms</text><path d="M1710 64H1741.5Q1744.3 64 1744.3 66.8V98Z" fill="#555555"/><circle cx="1736.8" cy="71.6" r="3.8" fill="none" stroke="#c8c8c8" stroke-width="1.8"/><line x1="1733.9" y1="74.7" x2="1728" y2="80.3" stroke="#c8c8c8" stroke-width="2.3" stroke-linecap="round"/><path d="M45 57H65L55 66Z" fill="#f7941d"/><path d="M46 68H64V87.5H58.5L55 93.5L51.5 87.5H46Z" fill="#000" stroke="#f7941d" stroke-width="2"/><path d="M50.6 72.6H58.9V74.8H55.9V83H53.6V74.8H50.6Z" fill="#f7941d"/><path d="M9 160.1H30L42 172.9L30 185.70000000000002H9Q6 185.70000000000002 6 182.70000000000002V163.1Q6 160.1 9 160.1Z" fill="#1e1c0a" stroke="#e8dc30" stroke-width="1.5"/><text x="23.5" y="177.0" font-family="Liberation Sans" font-size="11.5" fill="#ece030" text-anchor="middle">C 1</text><text x="54" y="178.50" font-family="Liberation Sans" font-size="19.4" fill="#f0e430" text-anchor="start" font-weight="normal" letter-spacing="0.3">U_loop,coil</text><path d="M9 393.7H30L42 406.5L30 419.3H9Q6 419.3 6 416.3V396.7Q6 393.7 9 393.7Z" fill="#142008" stroke="#86c83a" stroke-width="1.5"/><text x="23.5" y="410.6" font-family="Liberation Sans" font-size="11.5" fill="#8ccc3c" text-anchor="middle">C 4</text><text x="54" y="412.00" font-family="Liberation Sans" font-size="19.4" fill="#8cd03c" text-anchor="start" font-weight="normal" letter-spacing="0.2">U_Photod</text><path d="M9 721.4000000000001H30L42 734.2L30 747.0H9Q6 747.0 6 744.0V724.4000000000001Q6 721.4000000000001 9 721.4000000000001Z" fill="#1c1206" stroke="#f0922c" stroke-width="1.5"/><text x="23.5" y="738.3" font-family="Liberation Sans" font-size="11.5" fill="#f0922c" text-anchor="middle">M 1</text><text x="53" y="739.00" font-family="Liberation Sans" font-size="19" fill="#ee922c" text-anchor="start" font-weight="normal" >B_t</text><path d="M9 950.2H30L42 963L30 975.8H9Q6 975.8 6 972.8V953.2Q6 950.2 9 950.2Z" fill="#74288c"/><text x="23.5" y="967.1" font-family="Liberation Sans" font-size="11.5" fill="#ffffff" text-anchor="middle">M 2</text><text x="53.5" y="968.00" font-family="Liberation Sans" font-size="19" fill="#7a2c98" text-anchor="start" font-weight="normal" >I_p</text></svg>
<svg style="position:absolute;left:0;top:0" width="1920" height="1080">
<circle cx="1762" cy="503" r="2.1" fill="#c8c8c8"/>
<circle cx="1762" cy="511.7" r="2.1" fill="#c8c8c8"/>
<circle cx="1762" cy="520.3" r="2.1" fill="#c8c8c8"/>
<path d="M1769.5 994.5V29.5H1920" fill="none" stroke="#58534e" stroke-width="1"/>
<path d="M1769.5 994.5H1920" fill="none" stroke="#58534e" stroke-width="1"/>
<rect x="1773" y="189.3" width="144" height="1" fill="#58534e"/>
<rect x="1773" y="240.6" width="144" height="1" fill="#58534e"/>
<g fill="#ffffff" stroke="#ffffff" stroke-width="0.9" stroke-linejoin="round"><text x="1786.0" y="25.6" font-family="Liberation Sans" font-weight="bold" font-size="30.5" textLength="27.4" lengthAdjust="spacingAndGlyphs">Te</text><text x="1830.9" y="25.6" font-family="Liberation Sans" font-weight="bold" font-size="30.5" textLength="72" lengthAdjust="spacingAndGlyphs">tronix</text></g>
<rect x="1815" y="4" width="5" height="21.9" fill="#fff"/>
<path d="M1823.2 25.9H1830.2L1825.5 18.4Z" fill="#fff"/>
<path d="M1814.3 26.3H1821L1832 8.8H1825.3Z" fill="#2c2c2c"/>
<path d="M1815.1 25.9H1820.3L1831 9.2H1825.8Z" fill="#1cc0e0"/>
</svg>
<svg style="position:absolute;left:0;top:0" width="1920" height="1080"><text x="1844" y="43.8" font-family="Liberation Sans" font-weight="bold" font-size="14.5" fill="#e8e8e8" text-anchor="middle">Add New...</text></svg>
<div class="btn" style="left:1777px;top:54px;width:63px;height:36px;"></div>
<div class="t" style="left:1508.50px;width:600px;text-align:center;top:63.75px;font-size:15px;line-height:15px;color:#ececec;font-weight:normal;">Cursors</div>
<div class="btn" style="left:1849px;top:54px;width:63px;height:36px;"></div>
<div class="t" style="left:1580.50px;width:600px;text-align:center;top:63.75px;font-size:15px;line-height:15px;color:#ececec;font-weight:normal;">Callout</div>
<div class="btn" style="left:1777px;top:100px;width:63px;height:36.5px;"></div>
<div class="t" style="left:1508.50px;width:600px;text-align:center;top:109.75px;font-size:15px;line-height:15px;color:#ececec;font-weight:normal;">Measure</div>
<div class="btn" style="left:1849px;top:100px;width:63px;height:36.5px;"></div>
<div class="t" style="left:1580.50px;width:600px;text-align:center;top:109.75px;font-size:15px;line-height:15px;color:#ececec;font-weight:normal;">Search</div>
<div class="btn" style="left:1777px;top:146px;width:63px;height:36.5px;"></div>
<div class="t" style="left:1508.50px;width:600px;text-align:center;top:148.28px;font-size:14.5px;line-height:14.5px;color:#ececec;font-weight:normal;">Results</div>
<div class="t" style="left:1508.50px;width:600px;text-align:center;top:164.28px;font-size:14.5px;line-height:14.5px;color:#ececec;font-weight:normal;">Table</div>
<div class="btn" style="left:1849px;top:146px;width:63px;height:36.5px;"></div>
<div class="t" style="left:1580.50px;width:600px;text-align:center;top:156.15px;font-size:15px;line-height:15px;color:#ececec;font-weight:normal;">Plot</div>
<div class="btn" style="left:1777px;top:196px;width:63px;height:36.5px;"></div>
<div class="btn" style="left:1849px;top:196px;width:63px;height:36.5px;"></div>
<div class="t" style="left:1580.50px;width:600px;text-align:center;top:206.15px;font-size:15px;line-height:15px;color:#ececec;font-weight:normal;">More...</div>
<svg style="position:absolute;left:0;top:0" width="1920" height="1080"><rect x="1797.3" y="203.3" width="21.6" height="18.4" fill="none" stroke="#c0c0c0" stroke-width="2" stroke-dasharray="2.4 2.2"/><circle cx="1810" cy="209.6" r="4.2" fill="none" stroke="#c0c0c0" stroke-width="1.8"/><line x1="1806.9" y1="212.8" x2="1802" y2="217.6" stroke="#c0c0c0" stroke-width="2.4" stroke-linecap="round"/><path d="M1814.2 217.4L1822.4 222.6L1819.3 223.3L1821.6 226.6L1820 227.6L1817.8 224.3L1815.8 226.5Z" fill="#c0c0c0"/></svg>
<div class="box" style="left:3px;top:999px;width:90px;height:80px;background:#c9c9c9;"><div class="hd" style="background:#4b4622;"></div><div class="hl" style="background:#a6a6a6;"></div></div>
<div class="t" style="left:8.30px;top:1000.25px;font-size:15px;line-height:15px;color:#f2e83c;font-weight:normal;">Ch 1</div>
<div class="t" style="left:10.00px;top:1023.78px;font-size:15.2px;line-height:15.2px;color:#141414;font-weight:normal;">5 V/div</div>
<div class="t" style="left:10.00px;top:1043.48px;font-size:15.2px;line-height:15.2px;color:#141414;font-weight:normal;">1 MΩ</div>
<div class="t" style="left:10.00px;top:1061.58px;font-size:15.2px;line-height:15.2px;color:#141414;font-weight:normal;">200 kHz</div>
<div class="t" style="left:76.30px;top:1060.12px;font-size:9.5px;line-height:9.5px;color:#141414;font-weight:normal;">B</div>
<div class="t" style="left:82.00px;top:1062.92px;font-size:9.5px;line-height:9.5px;color:#141414;font-weight:normal;">w</div>
<div class="box" style="left:98px;top:999px;width:90px;height:80px;background:#7b7b7b;"><div class="hd" style="background:#2a8284;"></div><div class="hl" style="background:#7a7a7a;"></div></div>
<div class="t" style="left:103.30px;top:1000.25px;font-size:15px;line-height:15px;color:#173a3b;font-weight:normal;">Ch 2</div>
<div class="t" style="left:105.00px;top:1023.78px;font-size:15.2px;line-height:15.2px;color:#141414;font-weight:normal;">250 mV/div</div>
<div class="t" style="left:105.00px;top:1043.48px;font-size:15.2px;line-height:15.2px;color:#141414;font-weight:normal;">1 MΩ</div>
<div class="t" style="left:105.00px;top:1061.58px;font-size:15.2px;line-height:15.2px;color:#141414;font-weight:normal;">200 kHz</div>
<div class="t" style="left:171.30px;top:1060.12px;font-size:9.5px;line-height:9.5px;color:#141414;font-weight:normal;">B</div>
<div class="t" style="left:177.00px;top:1062.92px;font-size:9.5px;line-height:9.5px;color:#141414;font-weight:normal;">w</div>
<div class="box" style="left:193px;top:999px;width:90px;height:80px;background:#7b7b7b;"><div class="hd" style="background:#8d3a48;"></div><div class="hl" style="background:#7a7a7a;"></div></div>
<div class="t" style="left:198.30px;top:1000.25px;font-size:15px;line-height:15px;color:#cfa6ae;font-weight:normal;">Ch 3</div>
<div class="t" style="left:200.00px;top:1023.78px;font-size:15.2px;line-height:15.2px;color:#141414;font-weight:normal;">450 mV/div</div>
<div class="t" style="left:200.00px;top:1043.48px;font-size:15.2px;line-height:15.2px;color:#141414;font-weight:normal;">1 MΩ</div>
<div class="t" style="left:200.00px;top:1061.58px;font-size:15.2px;line-height:15.2px;color:#141414;font-weight:normal;">200 kHz</div>
<div class="t" style="left:266.30px;top:1060.12px;font-size:9.5px;line-height:9.5px;color:#141414;font-weight:normal;">B</div>
<div class="t" style="left:272.00px;top:1062.92px;font-size:9.5px;line-height:9.5px;color:#141414;font-weight:normal;">w</div>
<div class="box" style="left:288px;top:999px;width:90px;height:80px;background:#c9c9c9;"><div class="hd" style="background:#394720;"></div><div class="hl" style="background:#a6a6a6;"></div></div>
<div class="t" style="left:293.30px;top:1000.25px;font-size:15px;line-height:15px;color:#9be23e;font-weight:normal;">Ch 4</div>
<div class="t" style="left:295.00px;top:1023.78px;font-size:15.2px;line-height:15.2px;color:#141414;font-weight:normal;">200 mV/div</div>
<div class="t" style="left:295.00px;top:1043.48px;font-size:15.2px;line-height:15.2px;color:#141414;font-weight:normal;">1 MΩ</div>
<div class="t" style="left:295.00px;top:1061.58px;font-size:15.2px;line-height:15.2px;color:#141414;font-weight:normal;">200 kHz</div>
<div class="t" style="left:361.30px;top:1060.12px;font-size:9.5px;line-height:9.5px;color:#141414;font-weight:normal;">B</div>
<div class="t" style="left:367.00px;top:1062.92px;font-size:9.5px;line-height:9.5px;color:#141414;font-weight:normal;">w</div>
<div class="box" style="left:383px;top:999px;width:90px;height:80px;background:#c9c9c9;"><div class="hd" style="background:#4a3421;"></div><div class="hl" style="background:#a6a6a6;"></div></div>
<div class="t" style="left:388.30px;top:1000.25px;font-size:15px;line-height:15px;color:#f7992c;font-weight:normal;">Math 1</div>
<div class="t" style="left:390.00px;top:1023.78px;font-size:15.2px;line-height:15.2px;color:#141414;font-weight:normal;">65.7934 ...</div>
<div class="t" style="left:390.00px;top:1043.48px;font-size:15.2px;line-height:15.2px;color:#141414;font-weight:normal;">Intg(ch2)...</div>
<div class="box" style="left:478px;top:999px;width:90px;height:80px;background:#c9c9c9;"><div class="hd" style="background:#6c2a8c;"></div><div class="hl" style="background:#a6a6a6;"></div></div>
<div class="t" style="left:483.30px;top:1000.25px;font-size:15px;line-height:15px;color:#f4f0f8;font-weight:normal;">Math 2</div>
<div class="t" style="left:485.00px;top:1023.78px;font-size:15.2px;line-height:15.2px;color:#141414;font-weight:normal;">965.509 ...</div>
<div class="t" style="left:485.00px;top:1043.48px;font-size:15.2px;line-height:15.2px;color:#141414;font-weight:normal;">-intg(ch3...</div>
<div class="btn" style="left:1022px;top:998px;width:40px;height:79.5px;"></div>
<div style="position:absolute;left:1026px;top:1006px;width:32px;height:2.2px;background:#f39a2a;"></div>
<div class="t" style="left:742.00px;width:600px;text-align:center;top:1029.67px;font-size:22.5px;line-height:22.5px;color:#ececec;font-weight:normal;">5</div>
<div class="btn" style="left:1067px;top:998px;width:40px;height:79.5px;"></div>
<div style="position:absolute;left:1071px;top:1006px;width:32px;height:2.2px;background:#2828d8;"></div>
<div class="t" style="left:787.00px;width:600px;text-align:center;top:1029.67px;font-size:22.5px;line-height:22.5px;color:#ececec;font-weight:normal;">6</div>
<div style="position:absolute;left:1117px;top:999px;width:1px;height:77px;background:#5a5550;"></div>
<div class="btn" style="left:1128px;top:998px;width:40px;height:79.5px;"></div>
<div style="position:absolute;left:1132px;top:1006px;width:32px;height:2.2px;background:#b42222;"></div>
<div class="t" style="left:848.00px;width:600px;text-align:center;top:1019.00px;font-size:16px;line-height:16px;color:#ececec;font-weight:normal;">Add</div>
<div class="t" style="left:848.00px;width:600px;text-align:center;top:1034.90px;font-size:16px;line-height:16px;color:#ececec;font-weight:normal;">New</div>
<div class="t" style="left:848.00px;width:600px;text-align:center;top:1050.90px;font-size:16px;line-height:16px;color:#ececec;font-weight:normal;">Math</div>
<div class="btn" style="left:1173px;top:998px;width:40px;height:79.5px;"></div>
<div style="position:absolute;left:1177px;top:1006px;width:32px;height:2.2px;background:#c4cbe0;"></div>
<div class="t" style="left:893.00px;width:600px;text-align:center;top:1019.00px;font-size:16px;line-height:16px;color:#ececec;font-weight:normal;">Add</div>
<div class="t" style="left:893.00px;width:600px;text-align:center;top:1034.90px;font-size:16px;line-height:16px;color:#ececec;font-weight:normal;">New</div>
<div class="t" style="left:893.00px;width:600px;text-align:center;top:1050.90px;font-size:16px;line-height:16px;color:#ececec;font-weight:normal;">Ref</div>
<div class="btn" style="left:1218px;top:998px;width:40px;height:79.5px;"></div>
<div style="position:absolute;left:1222px;top:1006px;width:32px;height:2.2px;background:#c454f0;"></div>
<div class="t" style="left:938.00px;width:600px;text-align:center;top:1019.00px;font-size:16px;line-height:16px;color:#ececec;font-weight:normal;">Add</div>
<div class="t" style="left:938.00px;width:600px;text-align:center;top:1034.90px;font-size:16px;line-height:16px;color:#ececec;font-weight:normal;">New</div>
<div class="t" style="left:938.00px;width:600px;text-align:center;top:1050.90px;font-size:16px;line-height:16px;color:#ececec;font-weight:normal;">Bus</div>
<div style="position:absolute;left:1268px;top:999px;width:1px;height:77px;background:#5a5550;"></div>
<div class="box" style="left:1280px;top:1000px;width:198px;height:78px;"><div class="hd" style="background:#5b5b5d;height:18.5px;"></div><div class="hl" style="top:18.5px;"></div></div>
<div class="t" style="left:1285.00px;top:1000.13px;font-size:16.2px;line-height:16.2px;color:#ececec;font-weight:normal;">Horizontal</div>
<div class="t" style="left:1285.80px;top:1023.44px;font-size:15.6px;line-height:15.6px;color:#141414;font-weight:normal;">3 ms/div</div>
<div class="t" style="left:1392.00px;top:1023.44px;font-size:15.6px;line-height:15.6px;color:#141414;font-weight:normal;">30 ms</div>
<div class="t" style="left:1285.80px;top:1041.94px;font-size:15.6px;line-height:15.6px;color:#141414;font-weight:normal;">SR: 1 MS/s</div>
<div class="t" style="left:1392.00px;top:1041.94px;font-size:15.6px;line-height:15.6px;color:#141414;font-weight:normal;">1 µs/pt</div>
<div class="t" style="left:1285.80px;top:1060.64px;font-size:15.6px;line-height:15.6px;color:#141414;font-weight:normal;">RL: 30 kpts</div>
<div class="t" style="left:1406.00px;top:1060.64px;font-size:15.6px;line-height:15.6px;color:#141414;font-weight:normal;letter-spacing:1.2px;">3%</div>
<svg style="position:absolute;left:0;top:0" width="1920" height="1080"><path d="M1392.6 1062.7H1400.3V1071.6H1397.6L1396.4 1073.8L1395.2 1071.6H1392.6Z" fill="#000" stroke="#f7941d" stroke-width="1.4"/><path d="M1394.4 1064.8H1398.5V1066H1397V1069.8H1395.9V1066H1394.4Z" fill="#fff"/></svg>
<div class="box" style="left:1485px;top:1000px;width:158px;height:78px;"><div class="hd" style="background:#5b5b5d;height:18.5px;"></div><div class="hl" style="top:18.5px;"></div></div>
<div class="t" style="left:1490.00px;top:1000.13px;font-size:16.2px;line-height:16.2px;color:#ececec;font-weight:normal;">Trigger</div>
<div style="position:absolute;left:1491px;top:1023.4px;width:29.6px;height:16.3px;box-sizing:border-box;border:1px solid #101040;border-radius:5px;background:#2222c4;"></div>
<div class="t" style="left:1205.80px;width:600px;text-align:center;top:1022.83px;font-size:15.5px;line-height:15.5px;color:#ffffff;font-weight:normal;">6</div>
<svg style="position:absolute;left:0;top:0" width="1920" height="1080"><path d="M1531.2 1036.2H1535.6L1542.6 1026.8H1547" fill="none" stroke="#3a3aa0" stroke-width="1.3"/></svg>
<div class="t" style="left:1557.00px;top:1023.34px;font-size:15.6px;line-height:15.6px;color:#141414;font-weight:normal;">3 V</div>
<div class="box" style="left:1650px;top:1000px;width:148px;height:78px;"><div class="hd" style="background:#5b5b5d;height:18.5px;"></div><div class="hl" style="top:18.5px;"></div></div>
<div class="t" style="left:1655.00px;top:1000.13px;font-size:16.2px;line-height:16.2px;color:#ececec;font-weight:normal;">Acquisition</div>
<div class="t" style="left:1655.80px;top:1023.51px;font-size:15.4px;line-height:15.4px;color:#141414;font-weight:normal;">Manual,</div>
<div class="t" style="right:127.50px;text-align:right;top:1023.51px;font-size:15.4px;line-height:15.4px;color:#141414;font-weight:normal;">Analyze</div>
<div class="t" style="left:1655.80px;top:1042.21px;font-size:15.4px;line-height:15.4px;color:#141414;font-weight:normal;">High Res: 16 bits</div>
<div class="t" style="left:1655.80px;top:1060.91px;font-size:15.4px;line-height:15.4px;color:#141414;font-weight:normal;">Single: 0 /1</div>
<div style="position:absolute;left:1811px;top:999px;width:1px;height:77px;background:#5a5550;"></div>
<div style="position:absolute;left:1822.5px;top:998px;width:89.5px;height:35.5px;box-sizing:border-box;border:1px solid #7a6a6a;border-radius:6px;background:#ef1c25;"></div>
<div class="t" style="left:1567.00px;width:600px;text-align:center;top:1007.95px;font-size:13px;line-height:13px;color:#ffffff;font-weight:bold;">Preview</div>
<div style="position:absolute;left:1822.5px;top:1042px;width:89.5px;height:35.5px;box-sizing:border-box;border:1px solid #9a9a9a;border-radius:5px;background:#c9c9c9;"></div>
<div class="t" style="left:1567.00px;width:600px;text-align:center;top:1043.97px;font-size:14.5px;line-height:14.5px;color:#141414;font-weight:normal;">09 Dec 2024</div>
<div class="t" style="left:1567.00px;width:600px;text-align:center;top:1060.97px;font-size:14.5px;line-height:14.5px;color:#141414;font-weight:normal;">8:33:59 PM</div>
</body></html>
